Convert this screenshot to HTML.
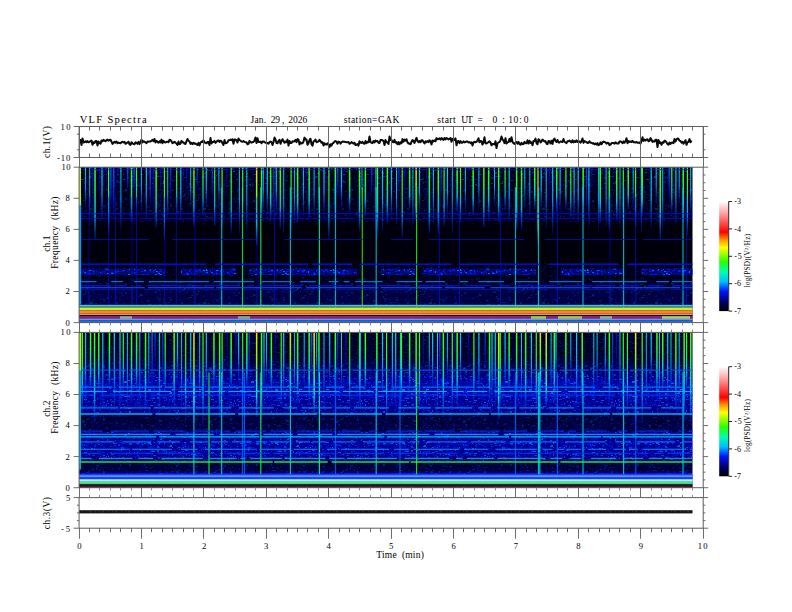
<!DOCTYPE html><html><head><meta charset="utf-8"><style>html,body{margin:0;padding:0;background:#fff;width:792px;height:612px;overflow:hidden}svg{display:block}text{font-family:"Liberation Serif",serif;fill:#000;white-space:pre}</style></head><body><svg width="792" height="612" viewBox="0 0 792 612"><defs><linearGradient id="cb" x1="0" y1="1" x2="0" y2="0"><stop offset="0.0" stop-color="#000000"/><stop offset="0.08" stop-color="#000064"/><stop offset="0.18" stop-color="#0014ff"/><stop offset="0.27" stop-color="#00beff"/><stop offset="0.36" stop-color="#00ffaa"/><stop offset="0.45" stop-color="#28ff00"/><stop offset="0.58" stop-color="#ffff00"/><stop offset="0.65" stop-color="#ff9600"/><stop offset="0.72" stop-color="#ff0000"/><stop offset="0.88" stop-color="#ff9696"/><stop offset="1.0" stop-color="#ffffff"/></linearGradient><linearGradient id="sR" x1="0" y1="0" x2="0" y2="1"><stop offset="0" stop-color="#ffe100" stop-opacity="1"/><stop offset="0.35" stop-color="#7aff00" stop-opacity="1"/><stop offset="0.75" stop-color="#00e9c6" stop-opacity="1"/><stop offset="1" stop-color="#0039ff" stop-opacity="0.4"/></linearGradient><linearGradient id="sG" x1="0" y1="0" x2="0" y2="1"><stop offset="0" stop-color="#49ff00" stop-opacity="1"/><stop offset="0.3" stop-color="#1aff38" stop-opacity="1"/><stop offset="0.65" stop-color="#00d3e2" stop-opacity="0.9"/><stop offset="1" stop-color="#0012ef" stop-opacity="0.4"/></linearGradient><linearGradient id="sC" x1="0" y1="0" x2="0" y2="1"><stop offset="0" stop-color="#00e2cf" stop-opacity="1"/><stop offset="0.5" stop-color="#00abff" stop-opacity="0.95"/><stop offset="1" stop-color="#000ed0" stop-opacity="0.3"/></linearGradient><linearGradient id="sB" x1="0" y1="0" x2="0" y2="1"><stop offset="0" stop-color="#005fff" stop-opacity="1"/><stop offset="0.6" stop-color="#0012ef" stop-opacity="0.9"/><stop offset="1" stop-color="#0007a2" stop-opacity="0.2"/></linearGradient><linearGradient id="sN" x1="0" y1="0" x2="0" y2="1"><stop offset="0" stop-color="#000cc1" stop-opacity="1"/><stop offset="1" stop-color="#000483" stop-opacity="0.2"/></linearGradient><pattern id="spA" width="113" height="47" patternUnits="userSpaceOnUse"><rect x="17" y="36" width="1" height="1" fill="#000066"/><rect x="97" y="28" width="2" height="2" fill="#002cff"/><rect x="12" y="31" width="1" height="2" fill="#000692"/><rect x="97" y="0" width="2" height="1" fill="#0012f3"/><rect x="29" y="37" width="1" height="1" fill="#000064"/><rect x="3" y="41" width="3" height="1" fill="#008fff"/><rect x="48" y="43" width="1" height="2" fill="#0012f5"/><rect x="67" y="14" width="2" height="2" fill="#000ab3"/><rect x="44" y="14" width="1" height="2" fill="#0099ff"/><rect x="2" y="26" width="3" height="1" fill="#00006b"/><rect x="92" y="18" width="1" height="1" fill="#0070ff"/><rect x="91" y="32" width="2" height="1" fill="#000279"/><rect x="75" y="31" width="3" height="2" fill="#000bbf"/><rect x="4" y="30" width="1" height="2" fill="#00058e"/><rect x="22" y="23" width="3" height="1" fill="#000065"/><rect x="84" y="32" width="1" height="1" fill="#0009aa"/><rect x="50" y="23" width="2" height="1" fill="#00079b"/><rect x="39" y="45" width="3" height="2" fill="#000ed5"/><rect x="21" y="32" width="1" height="1" fill="#0021ff"/><rect x="69" y="35" width="1" height="2" fill="#0008a8"/><rect x="108" y="36" width="2" height="2" fill="#007aff"/><rect x="84" y="35" width="3" height="1" fill="#000487"/><rect x="109" y="32" width="1" height="1" fill="#000591"/><rect x="7" y="30" width="2" height="1" fill="#0091ff"/><rect x="52" y="31" width="2" height="2" fill="#000380"/><rect x="68" y="34" width="3" height="1" fill="#000698"/><rect x="3" y="14" width="1" height="1" fill="#0059ff"/><rect x="102" y="35" width="2" height="1" fill="#004cff"/><rect x="86" y="4" width="1" height="1" fill="#000697"/><rect x="96" y="17" width="1" height="1" fill="#000066"/><rect x="79" y="11" width="2" height="1" fill="#000064"/><rect x="20" y="16" width="3" height="1" fill="#000fd8"/><rect x="82" y="45" width="2" height="2" fill="#0011eb"/><rect x="63" y="30" width="1" height="1" fill="#00027a"/><rect x="43" y="26" width="1" height="1" fill="#000066"/><rect x="93" y="32" width="1" height="2" fill="#003dff"/><rect x="2" y="14" width="1" height="2" fill="#000068"/><rect x="92" y="10" width="2" height="2" fill="#0009b1"/><rect x="28" y="40" width="3" height="2" fill="#00016e"/><rect x="83" y="1" width="2" height="1" fill="#000fd9"/><rect x="54" y="3" width="2" height="1" fill="#00a5ff"/><rect x="112" y="3" width="2" height="1" fill="#0057ff"/><rect x="39" y="19" width="1" height="2" fill="#000ab7"/><rect x="16" y="0" width="3" height="1" fill="#000bc0"/><rect x="27" y="36" width="2" height="1" fill="#0043ff"/><rect x="111" y="45" width="3" height="1" fill="#000486"/><rect x="44" y="6" width="1" height="2" fill="#000bc0"/><rect x="63" y="6" width="2" height="1" fill="#0008a5"/><rect x="2" y="20" width="3" height="2" fill="#0073ff"/><rect x="2" y="10" width="1" height="1" fill="#0039ff"/><rect x="72" y="8" width="2" height="2" fill="#00016d"/><rect x="86" y="6" width="2" height="1" fill="#007dff"/><rect x="107" y="43" width="3" height="2" fill="#001fff"/><rect x="68" y="15" width="1" height="1" fill="#000065"/><rect x="21" y="10" width="3" height="1" fill="#000274"/><rect x="42" y="38" width="3" height="1" fill="#000484"/><rect x="43" y="7" width="2" height="1" fill="#005dff"/><rect x="77" y="45" width="2" height="1" fill="#000bbc"/><rect x="98" y="6" width="2" height="1" fill="#00058c"/><rect x="48" y="9" width="1" height="1" fill="#000066"/><rect x="75" y="24" width="1" height="1" fill="#000ab8"/><rect x="34" y="23" width="2" height="1" fill="#000698"/><rect x="35" y="6" width="1" height="1" fill="#000064"/><rect x="85" y="0" width="1" height="2" fill="#000066"/><rect x="101" y="2" width="1" height="1" fill="#002aff"/><rect x="75" y="26" width="1" height="1" fill="#000697"/><rect x="87" y="15" width="1" height="1" fill="#000693"/><rect x="48" y="34" width="2" height="1" fill="#0011ef"/><rect x="40" y="6" width="1" height="1" fill="#000064"/><rect x="1" y="18" width="3" height="1" fill="#000696"/><rect x="40" y="25" width="1" height="1" fill="#007dff"/><rect x="76" y="29" width="1" height="1" fill="#00016e"/><rect x="79" y="34" width="2" height="1" fill="#000173"/><rect x="69" y="13" width="2" height="1" fill="#000171"/><rect x="10" y="17" width="1" height="2" fill="#000065"/><rect x="73" y="41" width="2" height="1" fill="#000489"/><rect x="39" y="2" width="2" height="1" fill="#00037b"/><rect x="108" y="37" width="2" height="1" fill="#00037e"/><rect x="69" y="39" width="3" height="1" fill="#000171"/><rect x="2" y="15" width="2" height="1" fill="#000274"/><rect x="111" y="4" width="1" height="1" fill="#000ed0"/><rect x="37" y="22" width="2" height="2" fill="#005aff"/><rect x="19" y="6" width="3" height="1" fill="#000065"/><rect x="85" y="11" width="1" height="1" fill="#00b2ff"/><rect x="105" y="20" width="2" height="1" fill="#0011ee"/><rect x="106" y="38" width="2" height="1" fill="#006fff"/><rect x="18" y="34" width="1" height="1" fill="#003fff"/><rect x="79" y="43" width="3" height="1" fill="#00006a"/><rect x="55" y="34" width="1" height="1" fill="#0012f0"/><rect x="85" y="15" width="2" height="1" fill="#0010e2"/><rect x="57" y="27" width="3" height="1" fill="#0009b0"/><rect x="108" y="34" width="2" height="1" fill="#00048a"/><rect x="43" y="10" width="2" height="2" fill="#000064"/><rect x="82" y="26" width="3" height="1" fill="#000064"/><rect x="45" y="37" width="1" height="1" fill="#000067"/><rect x="106" y="17" width="2" height="2" fill="#00006a"/><rect x="11" y="14" width="2" height="1" fill="#00006a"/><rect x="40" y="32" width="2" height="1" fill="#000170"/><rect x="63" y="43" width="2" height="1" fill="#0012ef"/><rect x="43" y="35" width="3" height="1" fill="#00a8ff"/><rect x="28" y="3" width="1" height="1" fill="#000069"/><rect x="98" y="13" width="2" height="1" fill="#0010e7"/><rect x="108" y="35" width="2" height="1" fill="#0011ea"/><rect x="94" y="29" width="3" height="1" fill="#0056ff"/><rect x="77" y="32" width="3" height="2" fill="#00006a"/><rect x="32" y="27" width="1" height="1" fill="#0008a2"/><rect x="50" y="45" width="2" height="2" fill="#0008a8"/><rect x="21" y="34" width="1" height="1" fill="#0037ff"/><rect x="80" y="6" width="2" height="1" fill="#009eff"/><rect x="17" y="39" width="1" height="2" fill="#0052ff"/><rect x="30" y="24" width="2" height="2" fill="#000069"/><rect x="41" y="28" width="1" height="2" fill="#009eff"/><rect x="15" y="27" width="3" height="2" fill="#007aff"/><rect x="84" y="18" width="2" height="1" fill="#000486"/><rect x="71" y="0" width="1" height="2" fill="#000bbc"/><rect x="3" y="40" width="3" height="1" fill="#0048ff"/><rect x="26" y="11" width="2" height="1" fill="#0009b0"/><rect x="34" y="19" width="3" height="1" fill="#0046ff"/><rect x="57" y="10" width="3" height="1" fill="#0007a1"/><rect x="109" y="7" width="1" height="2" fill="#00016c"/><rect x="103" y="6" width="1" height="1" fill="#000bb9"/><rect x="1" y="34" width="2" height="1" fill="#000064"/><rect x="47" y="36" width="2" height="2" fill="#0008a4"/><rect x="45" y="33" width="2" height="1" fill="#000066"/><rect x="91" y="28" width="2" height="1" fill="#0009af"/><rect x="43" y="46" width="3" height="2" fill="#000066"/><rect x="48" y="24" width="1" height="1" fill="#00b9ff"/><rect x="81" y="38" width="3" height="1" fill="#00b3ff"/><rect x="59" y="38" width="3" height="2" fill="#008eff"/><rect x="91" y="19" width="1" height="2" fill="#000dca"/><rect x="67" y="12" width="2" height="1" fill="#0010e1"/><rect x="74" y="27" width="2" height="1" fill="#0059ff"/><rect x="74" y="46" width="1" height="2" fill="#00b4ff"/><rect x="31" y="40" width="2" height="1" fill="#00058c"/><rect x="80" y="9" width="2" height="1" fill="#004fff"/><rect x="98" y="4" width="3" height="1" fill="#000381"/><rect x="33" y="45" width="2" height="1" fill="#000068"/><rect x="106" y="16" width="2" height="1" fill="#00079b"/><rect x="5" y="17" width="3" height="1" fill="#0013fd"/><rect x="54" y="4" width="2" height="1" fill="#000fd8"/><rect x="2" y="10" width="3" height="1" fill="#0010e6"/><rect x="51" y="40" width="2" height="1" fill="#00016d"/><rect x="26" y="15" width="2" height="1" fill="#000064"/><rect x="89" y="33" width="2" height="2" fill="#0008a7"/><rect x="94" y="3" width="1" height="1" fill="#000ed7"/><rect x="91" y="35" width="2" height="1" fill="#000cc7"/><rect x="29" y="25" width="3" height="2" fill="#00006a"/><rect x="101" y="16" width="3" height="1" fill="#0012f1"/><rect x="33" y="39" width="1" height="1" fill="#0053ff"/><rect x="111" y="39" width="2" height="1" fill="#0087ff"/><rect x="97" y="15" width="2" height="1" fill="#000064"/><rect x="93" y="10" width="3" height="2" fill="#000bbd"/><rect x="93" y="9" width="3" height="1" fill="#000699"/><rect x="20" y="8" width="1" height="2" fill="#000483"/><rect x="96" y="25" width="1" height="1" fill="#0012f2"/><rect x="91" y="43" width="2" height="1" fill="#000066"/><rect x="50" y="20" width="2" height="1" fill="#009bff"/><rect x="5" y="3" width="3" height="1" fill="#006cff"/><rect x="27" y="43" width="1" height="2" fill="#0011ec"/><rect x="104" y="46" width="3" height="2" fill="#00037f"/><rect x="107" y="17" width="1" height="1" fill="#000065"/><rect x="51" y="14" width="2" height="2" fill="#000486"/><rect x="21" y="14" width="1" height="1" fill="#00069a"/><rect x="74" y="24" width="1" height="2" fill="#0012f0"/><rect x="42" y="31" width="3" height="1" fill="#007aff"/><rect x="10" y="2" width="1" height="1" fill="#0057ff"/><rect x="40" y="24" width="3" height="1" fill="#0081ff"/><rect x="51" y="10" width="1" height="1" fill="#000064"/><rect x="18" y="42" width="3" height="1" fill="#000ab7"/><rect x="32" y="8" width="1" height="2" fill="#000ed6"/><rect x="38" y="0" width="1" height="1" fill="#0009ab"/><rect x="16" y="2" width="2" height="1" fill="#000692"/><rect x="24" y="1" width="2" height="1" fill="#0013fd"/><rect x="87" y="12" width="2" height="2" fill="#00037d"/><rect x="34" y="16" width="1" height="1" fill="#000064"/><rect x="100" y="37" width="1" height="1" fill="#000591"/><rect x="89" y="35" width="3" height="1" fill="#0077ff"/><rect x="70" y="26" width="3" height="1" fill="#0011ef"/><rect x="68" y="27" width="1" height="1" fill="#0013fd"/><rect x="92" y="4" width="2" height="1" fill="#00abff"/><rect x="19" y="3" width="1" height="2" fill="#0053ff"/><rect x="6" y="40" width="1" height="2" fill="#0008a4"/><rect x="12" y="20" width="1" height="1" fill="#0009ad"/><rect x="56" y="42" width="1" height="2" fill="#001dff"/><rect x="112" y="28" width="1" height="1" fill="#000065"/><rect x="102" y="20" width="1" height="1" fill="#000064"/><rect x="49" y="3" width="2" height="1" fill="#0013f9"/><rect x="33" y="24" width="1" height="1" fill="#000065"/><rect x="107" y="15" width="3" height="1" fill="#00037d"/><rect x="43" y="32" width="2" height="2" fill="#000066"/><rect x="83" y="28" width="3" height="1" fill="#0071ff"/><rect x="106" y="18" width="1" height="1" fill="#000485"/><rect x="66" y="20" width="1" height="2" fill="#000380"/><rect x="73" y="4" width="1" height="1" fill="#003bff"/><rect x="83" y="34" width="2" height="2" fill="#000278"/><rect x="45" y="17" width="2" height="1" fill="#0009ab"/><rect x="19" y="20" width="2" height="1" fill="#000bba"/><rect x="57" y="17" width="2" height="2" fill="#007cff"/><rect x="94" y="24" width="1" height="1" fill="#000067"/><rect x="67" y="31" width="3" height="1" fill="#0029ff"/><rect x="89" y="36" width="2" height="1" fill="#00b6ff"/><rect x="102" y="41" width="2" height="2" fill="#000279"/><rect x="76" y="21" width="3" height="1" fill="#000064"/><rect x="32" y="43" width="1" height="1" fill="#0078ff"/><rect x="23" y="26" width="3" height="1" fill="#0039ff"/><rect x="69" y="43" width="2" height="1" fill="#00016c"/><rect x="8" y="40" width="3" height="1" fill="#0055ff"/><rect x="101" y="13" width="1" height="2" fill="#000064"/><rect x="47" y="31" width="2" height="1" fill="#006dff"/><rect x="76" y="31" width="1" height="2" fill="#000697"/><rect x="46" y="34" width="1" height="2" fill="#0012f5"/><rect x="104" y="16" width="2" height="1" fill="#000064"/><rect x="68" y="24" width="3" height="2" fill="#000065"/><rect x="78" y="32" width="3" height="2" fill="#000064"/><rect x="108" y="29" width="1" height="1" fill="#009fff"/><rect x="89" y="44" width="1" height="1" fill="#0040ff"/><rect x="65" y="20" width="3" height="1" fill="#0009ab"/><rect x="69" y="33" width="2" height="1" fill="#000697"/><rect x="16" y="32" width="2" height="1" fill="#000ab3"/><rect x="20" y="16" width="1" height="2" fill="#0013fa"/><rect x="72" y="2" width="2" height="2" fill="#00058b"/><rect x="84" y="42" width="1" height="1" fill="#0085ff"/><rect x="108" y="0" width="2" height="1" fill="#00079a"/><rect x="101" y="23" width="2" height="1" fill="#000488"/><rect x="102" y="7" width="2" height="1" fill="#000068"/><rect x="18" y="1" width="1" height="1" fill="#000484"/><rect x="16" y="37" width="2" height="2" fill="#000172"/><rect x="65" y="18" width="2" height="1" fill="#000692"/><rect x="99" y="31" width="1" height="2" fill="#0097ff"/><rect x="51" y="45" width="2" height="1" fill="#000064"/><rect x="26" y="9" width="1" height="1" fill="#000065"/><rect x="19" y="30" width="1" height="2" fill="#000ed6"/><rect x="23" y="0" width="1" height="2" fill="#000cc7"/><rect x="6" y="35" width="1" height="2" fill="#000380"/><rect x="83" y="6" width="3" height="2" fill="#0048ff"/><rect x="94" y="7" width="2" height="1" fill="#00006a"/><rect x="103" y="45" width="1" height="1" fill="#0010e0"/><rect x="11" y="24" width="1" height="2" fill="#000277"/><rect x="65" y="31" width="2" height="1" fill="#000cc5"/><rect x="61" y="6" width="1" height="2" fill="#000cc8"/><rect x="89" y="12" width="1" height="1" fill="#00058e"/><rect x="68" y="18" width="2" height="1" fill="#002cff"/><rect x="79" y="21" width="2" height="1" fill="#000064"/><rect x="93" y="42" width="2" height="1" fill="#000064"/><rect x="80" y="28" width="2" height="1" fill="#00016f"/><rect x="35" y="17" width="1" height="2" fill="#000068"/><rect x="32" y="12" width="2" height="1" fill="#0009ad"/><rect x="77" y="32" width="1" height="2" fill="#000274"/><rect x="61" y="44" width="2" height="1" fill="#0007a1"/><rect x="63" y="23" width="3" height="2" fill="#000170"/><rect x="22" y="38" width="1" height="2" fill="#0009ae"/><rect x="7" y="32" width="2" height="1" fill="#000ed4"/><rect x="103" y="13" width="2" height="2" fill="#00079e"/><rect x="15" y="8" width="1" height="1" fill="#00016f"/><rect x="81" y="34" width="1" height="1" fill="#0010e4"/><rect x="28" y="36" width="1" height="1" fill="#000590"/><rect x="0" y="1" width="2" height="1" fill="#000065"/><rect x="28" y="17" width="2" height="1" fill="#000cc4"/><rect x="66" y="24" width="1" height="1" fill="#00037d"/><rect x="17" y="7" width="2" height="1" fill="#0010e2"/><rect x="5" y="22" width="1" height="1" fill="#0012f5"/><rect x="13" y="19" width="2" height="1" fill="#000274"/><rect x="6" y="23" width="1" height="1" fill="#000067"/><rect x="51" y="23" width="1" height="1" fill="#0010e1"/><rect x="35" y="0" width="3" height="1" fill="#009eff"/><rect x="14" y="22" width="1" height="1" fill="#00058c"/><rect x="86" y="36" width="3" height="2" fill="#000ab7"/><rect x="68" y="25" width="2" height="1" fill="#000dcf"/><rect x="70" y="8" width="1" height="1" fill="#00006a"/><rect x="27" y="27" width="2" height="1" fill="#000171"/><rect x="34" y="33" width="2" height="2" fill="#000067"/><rect x="90" y="6" width="2" height="1" fill="#000ed7"/><rect x="69" y="23" width="3" height="1" fill="#000dca"/><rect x="57" y="43" width="1" height="1" fill="#000064"/><rect x="74" y="9" width="1" height="2" fill="#004cff"/><rect x="108" y="21" width="2" height="1" fill="#000069"/><rect x="108" y="24" width="2" height="2" fill="#000066"/><rect x="76" y="9" width="2" height="1" fill="#000fdc"/><rect x="102" y="40" width="3" height="1" fill="#0009af"/><rect x="1" y="41" width="1" height="2" fill="#0014ff"/><rect x="112" y="6" width="2" height="1" fill="#0026ff"/><rect x="76" y="43" width="2" height="1" fill="#008bff"/><rect x="52" y="25" width="3" height="2" fill="#000064"/><rect x="60" y="2" width="1" height="1" fill="#0046ff"/><rect x="75" y="8" width="3" height="1" fill="#000ab3"/><rect x="100" y="36" width="2" height="2" fill="#003eff"/><rect x="31" y="39" width="1" height="1" fill="#000ab7"/><rect x="45" y="10" width="1" height="1" fill="#007fff"/><rect x="40" y="27" width="2" height="1" fill="#000fd9"/><rect x="98" y="3" width="3" height="2" fill="#00058e"/><rect x="45" y="18" width="2" height="2" fill="#0031ff"/><rect x="30" y="40" width="3" height="1" fill="#000064"/><rect x="86" y="7" width="3" height="1" fill="#0009b0"/><rect x="80" y="31" width="2" height="1" fill="#00aaff"/><rect x="2" y="30" width="1" height="2" fill="#000dcf"/><rect x="22" y="25" width="1" height="1" fill="#000171"/><rect x="42" y="42" width="1" height="2" fill="#0013fd"/><rect x="47" y="31" width="1" height="2" fill="#000694"/><rect x="69" y="7" width="3" height="2" fill="#0086ff"/><rect x="107" y="8" width="1" height="1" fill="#000486"/><rect x="13" y="1" width="1" height="1" fill="#000699"/><rect x="48" y="42" width="3" height="1" fill="#0080ff"/><rect x="19" y="33" width="1" height="1" fill="#000064"/><rect x="50" y="40" width="1" height="2" fill="#00b7ff"/><rect x="69" y="15" width="2" height="1" fill="#000fda"/><rect x="43" y="42" width="1" height="1" fill="#0023ff"/><rect x="71" y="10" width="1" height="2" fill="#000bbe"/><rect x="65" y="13" width="2" height="1" fill="#002fff"/><rect x="66" y="46" width="1" height="1" fill="#000171"/><rect x="99" y="29" width="1" height="1" fill="#000488"/><rect x="71" y="6" width="2" height="1" fill="#00acff"/><rect x="30" y="0" width="1" height="1" fill="#00079b"/><rect x="92" y="26" width="1" height="1" fill="#00b3ff"/><rect x="90" y="20" width="3" height="2" fill="#00b7ff"/><rect x="102" y="26" width="3" height="1" fill="#0011e9"/><rect x="89" y="24" width="1" height="2" fill="#003dff"/><rect x="46" y="9" width="2" height="1" fill="#004eff"/><rect x="99" y="46" width="3" height="1" fill="#0013f7"/><rect x="43" y="9" width="2" height="1" fill="#000172"/><rect x="49" y="17" width="3" height="2" fill="#000064"/><rect x="16" y="16" width="1" height="1" fill="#000064"/><rect x="74" y="34" width="3" height="1" fill="#0009b0"/><rect x="91" y="15" width="3" height="1" fill="#000ab4"/><rect x="50" y="45" width="1" height="1" fill="#000dcc"/><rect x="9" y="9" width="1" height="1" fill="#0013fe"/><rect x="48" y="26" width="1" height="1" fill="#000fdf"/><rect x="69" y="4" width="1" height="2" fill="#000067"/><rect x="25" y="42" width="2" height="1" fill="#0015ff"/><rect x="22" y="14" width="2" height="1" fill="#000380"/><rect x="68" y="18" width="1" height="1" fill="#00016d"/><rect x="59" y="1" width="2" height="1" fill="#000dc9"/><rect x="96" y="28" width="2" height="1" fill="#000064"/><rect x="100" y="20" width="1" height="1" fill="#009cff"/><rect x="80" y="6" width="1" height="2" fill="#000dcf"/><rect x="31" y="13" width="3" height="2" fill="#000066"/><rect x="90" y="13" width="2" height="1" fill="#003bff"/><rect x="74" y="16" width="1" height="1" fill="#0038ff"/><rect x="97" y="36" width="2" height="2" fill="#0009b1"/><rect x="29" y="17" width="1" height="1" fill="#000fde"/><rect x="70" y="32" width="1" height="2" fill="#00a5ff"/><rect x="98" y="42" width="2" height="2" fill="#000274"/><rect x="12" y="42" width="1" height="1" fill="#000ab6"/><rect x="58" y="2" width="2" height="1" fill="#000489"/><rect x="93" y="34" width="2" height="1" fill="#000065"/><rect x="86" y="2" width="2" height="2" fill="#00006b"/><rect x="22" y="38" width="3" height="1" fill="#0050ff"/><rect x="49" y="33" width="2" height="1" fill="#00016f"/><rect x="84" y="37" width="1" height="1" fill="#0077ff"/><rect x="58" y="2" width="3" height="1" fill="#006dff"/><rect x="109" y="18" width="2" height="1" fill="#000bbd"/><rect x="8" y="36" width="2" height="1" fill="#00b8ff"/><rect x="101" y="32" width="3" height="1" fill="#00048a"/><rect x="45" y="30" width="1" height="2" fill="#000064"/><rect x="38" y="37" width="2" height="1" fill="#000cc2"/><rect x="71" y="17" width="1" height="1" fill="#00058e"/><rect x="66" y="1" width="3" height="1" fill="#000064"/><rect x="67" y="0" width="1" height="1" fill="#00037e"/><rect x="47" y="35" width="1" height="1" fill="#000bbd"/><rect x="62" y="40" width="1" height="2" fill="#00037e"/><rect x="103" y="34" width="1" height="1" fill="#007aff"/><rect x="46" y="13" width="1" height="1" fill="#000bc0"/><rect x="51" y="20" width="3" height="2" fill="#003fff"/><rect x="43" y="16" width="3" height="1" fill="#000064"/><rect x="8" y="40" width="1" height="1" fill="#0018ff"/><rect x="50" y="35" width="2" height="1" fill="#000064"/><rect x="21" y="17" width="2" height="1" fill="#000067"/><rect x="70" y="46" width="2" height="1" fill="#00016d"/><rect x="35" y="46" width="2" height="1" fill="#0013fa"/><rect x="38" y="13" width="3" height="1" fill="#000ab3"/><rect x="43" y="18" width="3" height="1" fill="#000064"/><rect x="104" y="23" width="1" height="1" fill="#00b5ff"/><rect x="53" y="10" width="3" height="1" fill="#0011ed"/><rect x="89" y="42" width="3" height="2" fill="#00006b"/><rect x="25" y="14" width="1" height="1" fill="#00a9ff"/><rect x="64" y="7" width="2" height="2" fill="#00016c"/><rect x="7" y="23" width="2" height="1" fill="#0086ff"/><rect x="78" y="46" width="2" height="1" fill="#0085ff"/><rect x="81" y="0" width="1" height="2" fill="#000064"/><rect x="32" y="35" width="1" height="1" fill="#00016f"/><rect x="10" y="33" width="1" height="1" fill="#0094ff"/><rect x="25" y="13" width="2" height="1" fill="#000171"/><rect x="64" y="23" width="2" height="2" fill="#0093ff"/><rect x="9" y="12" width="3" height="1" fill="#00006b"/><rect x="79" y="19" width="3" height="2" fill="#000cc8"/><rect x="46" y="1" width="2" height="1" fill="#0089ff"/><rect x="84" y="40" width="3" height="2" fill="#0043ff"/><rect x="74" y="21" width="2" height="1" fill="#000ed4"/><rect x="24" y="44" width="3" height="2" fill="#0099ff"/><rect x="106" y="38" width="3" height="2" fill="#000cc3"/><rect x="94" y="36" width="2" height="2" fill="#000069"/><rect x="34" y="43" width="3" height="1" fill="#000ab7"/><rect x="103" y="25" width="3" height="1" fill="#000172"/><rect x="1" y="38" width="1" height="2" fill="#000698"/><rect x="45" y="14" width="3" height="2" fill="#00016d"/><rect x="60" y="21" width="1" height="2" fill="#005aff"/><rect x="6" y="41" width="1" height="1" fill="#0060ff"/><rect x="1" y="16" width="3" height="1" fill="#000279"/><rect x="1" y="20" width="2" height="1" fill="#000bbf"/><rect x="100" y="3" width="1" height="1" fill="#00037d"/><rect x="85" y="41" width="1" height="1" fill="#0027ff"/><rect x="37" y="26" width="3" height="1" fill="#00016f"/><rect x="82" y="44" width="1" height="1" fill="#000279"/><rect x="48" y="26" width="3" height="2" fill="#0039ff"/><rect x="109" y="4" width="1" height="2" fill="#008eff"/><rect x="77" y="2" width="3" height="1" fill="#000dce"/><rect x="31" y="45" width="2" height="2" fill="#00016d"/><rect x="19" y="46" width="2" height="1" fill="#000064"/><rect x="90" y="43" width="2" height="2" fill="#0008a3"/><rect x="86" y="9" width="1" height="1" fill="#000693"/><rect x="43" y="32" width="2" height="1" fill="#008fff"/><rect x="14" y="37" width="2" height="1" fill="#000591"/><rect x="107" y="19" width="1" height="2" fill="#000066"/><rect x="28" y="38" width="2" height="2" fill="#000485"/><rect x="29" y="3" width="1" height="1" fill="#000067"/><rect x="6" y="4" width="1" height="1" fill="#000fdf"/><rect x="54" y="46" width="1" height="1" fill="#000064"/><rect x="4" y="34" width="2" height="1" fill="#0029ff"/><rect x="78" y="0" width="3" height="1" fill="#00079b"/><rect x="34" y="18" width="3" height="1" fill="#006cff"/><rect x="23" y="13" width="2" height="1" fill="#000170"/><rect x="71" y="44" width="2" height="1" fill="#00037d"/><rect x="52" y="7" width="1" height="1" fill="#0008a5"/><rect x="11" y="11" width="1" height="1" fill="#00006a"/><rect x="103" y="6" width="1" height="1" fill="#0064ff"/><rect x="18" y="4" width="2" height="1" fill="#00016f"/><rect x="95" y="18" width="2" height="1" fill="#000bc0"/><rect x="56" y="12" width="1" height="1" fill="#000066"/><rect x="25" y="3" width="1" height="1" fill="#0099ff"/><rect x="103" y="14" width="2" height="1" fill="#0009ac"/><rect x="111" y="15" width="1" height="1" fill="#001eff"/><rect x="41" y="22" width="2" height="2" fill="#001dff"/><rect x="84" y="39" width="2" height="2" fill="#000065"/><rect x="31" y="31" width="2" height="1" fill="#000cc5"/><rect x="14" y="15" width="1" height="2" fill="#0069ff"/><rect x="68" y="19" width="2" height="1" fill="#00058d"/><rect x="46" y="22" width="2" height="2" fill="#009dff"/><rect x="65" y="1" width="2" height="1" fill="#000279"/><rect x="38" y="36" width="1" height="1" fill="#000069"/><rect x="82" y="40" width="1" height="1" fill="#000069"/><rect x="104" y="39" width="2" height="1" fill="#000382"/><rect x="40" y="10" width="2" height="2" fill="#00027a"/><rect x="54" y="9" width="3" height="1" fill="#006aff"/><rect x="13" y="9" width="2" height="1" fill="#0010e4"/><rect x="61" y="34" width="1" height="1" fill="#0012f5"/><rect x="24" y="41" width="2" height="1" fill="#0008a6"/><rect x="111" y="22" width="3" height="1" fill="#00037f"/><rect x="15" y="11" width="2" height="1" fill="#00acff"/><rect x="78" y="45" width="1" height="1" fill="#000171"/><rect x="108" y="19" width="2" height="2" fill="#000171"/><rect x="98" y="3" width="1" height="1" fill="#0011e9"/><rect x="0" y="12" width="1" height="1" fill="#00016e"/><rect x="64" y="17" width="1" height="1" fill="#00016f"/><rect x="39" y="36" width="3" height="2" fill="#005aff"/><rect x="56" y="37" width="3" height="2" fill="#00006b"/><rect x="110" y="22" width="1" height="2" fill="#0035ff"/><rect x="35" y="13" width="1" height="1" fill="#000067"/><rect x="26" y="1" width="1" height="2" fill="#000483"/><rect x="6" y="23" width="1" height="1" fill="#0010e1"/><rect x="111" y="13" width="1" height="2" fill="#000ed3"/><rect x="25" y="38" width="2" height="1" fill="#000bbb"/><rect x="107" y="42" width="1" height="1" fill="#00037b"/><rect x="61" y="35" width="1" height="1" fill="#0054ff"/><rect x="63" y="35" width="2" height="1" fill="#0007a0"/><rect x="65" y="20" width="3" height="1" fill="#000cc5"/><rect x="100" y="36" width="1" height="2" fill="#00037f"/><rect x="108" y="4" width="2" height="1" fill="#00b7ff"/><rect x="82" y="20" width="1" height="1" fill="#0079ff"/><rect x="28" y="20" width="2" height="1" fill="#005eff"/><rect x="62" y="26" width="1" height="1" fill="#000069"/><rect x="37" y="3" width="1" height="2" fill="#000592"/><rect x="78" y="13" width="2" height="1" fill="#001fff"/><rect x="92" y="36" width="2" height="1" fill="#000cc6"/><rect x="86" y="11" width="2" height="1" fill="#000381"/><rect x="50" y="22" width="3" height="1" fill="#00048a"/><rect x="57" y="9" width="2" height="1" fill="#000064"/><rect x="81" y="15" width="1" height="1" fill="#000064"/><rect x="64" y="30" width="3" height="2" fill="#0011ea"/><rect x="66" y="10" width="3" height="2" fill="#00048a"/><rect x="49" y="35" width="3" height="2" fill="#000069"/><rect x="75" y="23" width="1" height="1" fill="#0040ff"/><rect x="56" y="15" width="3" height="1" fill="#0052ff"/><rect x="56" y="22" width="1" height="1" fill="#000067"/><rect x="106" y="2" width="2" height="1" fill="#00a6ff"/><rect x="22" y="36" width="2" height="2" fill="#000064"/><rect x="29" y="39" width="1" height="2" fill="#000ed7"/><rect x="65" y="13" width="2" height="2" fill="#000066"/><rect x="33" y="8" width="1" height="1" fill="#000067"/><rect x="103" y="39" width="3" height="1" fill="#000170"/><rect x="90" y="27" width="2" height="2" fill="#0008a7"/><rect x="39" y="10" width="3" height="1" fill="#000bc0"/><rect x="100" y="13" width="2" height="1" fill="#0010e2"/><rect x="104" y="21" width="1" height="2" fill="#000487"/><rect x="83" y="32" width="1" height="2" fill="#000696"/><rect x="68" y="28" width="2" height="1" fill="#000064"/><rect x="92" y="6" width="1" height="2" fill="#000067"/><rect x="50" y="11" width="2" height="2" fill="#0009aa"/><rect x="75" y="2" width="3" height="1" fill="#0095ff"/><rect x="75" y="28" width="2" height="2" fill="#000277"/><rect x="44" y="11" width="3" height="1" fill="#00006a"/><rect x="99" y="1" width="3" height="1" fill="#0031ff"/><rect x="8" y="35" width="1" height="2" fill="#0051ff"/><rect x="56" y="21" width="1" height="2" fill="#000064"/><rect x="59" y="17" width="2" height="2" fill="#00037d"/><rect x="12" y="10" width="2" height="2" fill="#0068ff"/><rect x="78" y="30" width="3" height="1" fill="#00037b"/><rect x="44" y="8" width="3" height="1" fill="#00016f"/><rect x="103" y="13" width="2" height="1" fill="#000066"/><rect x="13" y="27" width="1" height="2" fill="#000068"/><rect x="47" y="35" width="2" height="1" fill="#00058a"/><rect x="49" y="31" width="2" height="1" fill="#0013fc"/><rect x="38" y="41" width="3" height="2" fill="#00027a"/><rect x="96" y="18" width="1" height="1" fill="#0007a1"/><rect x="57" y="9" width="2" height="1" fill="#0009af"/><rect x="68" y="20" width="2" height="2" fill="#0098ff"/><rect x="71" y="40" width="2" height="1" fill="#000ab7"/><rect x="102" y="29" width="2" height="2" fill="#0010e6"/><rect x="105" y="34" width="1" height="1" fill="#000170"/><rect x="25" y="38" width="1" height="1" fill="#0027ff"/><rect x="79" y="3" width="2" height="2" fill="#0092ff"/><rect x="44" y="23" width="2" height="2" fill="#00016d"/><rect x="109" y="18" width="1" height="1" fill="#00048a"/><rect x="89" y="24" width="1" height="1" fill="#000488"/><rect x="44" y="38" width="3" height="1" fill="#000170"/><rect x="105" y="39" width="2" height="2" fill="#00016c"/><rect x="111" y="18" width="1" height="2" fill="#000064"/><rect x="44" y="5" width="2" height="1" fill="#000066"/><rect x="101" y="46" width="1" height="1" fill="#000068"/><rect x="55" y="20" width="3" height="1" fill="#0091ff"/><rect x="26" y="12" width="1" height="1" fill="#00a6ff"/><rect x="20" y="9" width="1" height="2" fill="#000bbe"/><rect x="16" y="27" width="1" height="1" fill="#000cc6"/><rect x="93" y="44" width="2" height="1" fill="#000064"/><rect x="99" y="11" width="1" height="1" fill="#0010e7"/><rect x="75" y="31" width="1" height="1" fill="#000067"/><rect x="60" y="36" width="1" height="1" fill="#000483"/><rect x="17" y="17" width="2" height="1" fill="#000487"/><rect x="3" y="33" width="2" height="1" fill="#0012f2"/><rect x="26" y="44" width="1" height="1" fill="#000064"/><rect x="104" y="33" width="1" height="1" fill="#0031ff"/><rect x="104" y="7" width="2" height="1" fill="#000066"/><rect x="91" y="36" width="3" height="2" fill="#000fdc"/><rect x="18" y="27" width="2" height="1" fill="#008aff"/><rect x="49" y="26" width="2" height="1" fill="#00a3ff"/><rect x="26" y="12" width="1" height="1" fill="#000170"/><rect x="2" y="15" width="2" height="2" fill="#0029ff"/><rect x="56" y="36" width="1" height="1" fill="#00006a"/><rect x="105" y="33" width="1" height="1" fill="#000592"/><rect x="100" y="17" width="2" height="1" fill="#0058ff"/><rect x="88" y="42" width="2" height="2" fill="#0026ff"/><rect x="74" y="3" width="3" height="2" fill="#000067"/><rect x="66" y="23" width="3" height="1" fill="#000381"/><rect x="107" y="15" width="1" height="2" fill="#0098ff"/><rect x="103" y="1" width="2" height="1" fill="#000068"/><rect x="3" y="30" width="1" height="2" fill="#000064"/><rect x="101" y="37" width="2" height="1" fill="#00079b"/><rect x="77" y="32" width="1" height="1" fill="#0009af"/><rect x="86" y="45" width="2" height="2" fill="#000170"/><rect x="66" y="24" width="2" height="1" fill="#000693"/><rect x="8" y="13" width="3" height="1" fill="#000066"/><rect x="45" y="6" width="1" height="1" fill="#0010e6"/><rect x="75" y="5" width="1" height="2" fill="#007bff"/><rect x="30" y="5" width="2" height="2" fill="#000cc7"/><rect x="73" y="27" width="3" height="1" fill="#000489"/><rect x="5" y="42" width="3" height="1" fill="#000275"/><rect x="79" y="30" width="2" height="1" fill="#000274"/><rect x="111" y="20" width="2" height="2" fill="#0009ae"/><rect x="34" y="32" width="1" height="2" fill="#000698"/><rect x="74" y="37" width="1" height="1" fill="#0008a6"/><rect x="84" y="25" width="2" height="2" fill="#00079d"/><rect x="80" y="14" width="2" height="1" fill="#000064"/><rect x="18" y="31" width="1" height="1" fill="#000173"/><rect x="107" y="19" width="3" height="1" fill="#000067"/><rect x="64" y="8" width="2" height="1" fill="#000695"/><rect x="93" y="36" width="2" height="1" fill="#000067"/><rect x="1" y="34" width="1" height="1" fill="#000dcb"/><rect x="8" y="29" width="2" height="1" fill="#000ed4"/><rect x="92" y="32" width="1" height="2" fill="#000066"/><rect x="87" y="20" width="3" height="2" fill="#000065"/><rect x="63" y="33" width="2" height="1" fill="#00006b"/><rect x="7" y="39" width="1" height="1" fill="#000066"/><rect x="67" y="19" width="1" height="1" fill="#0009ad"/><rect x="29" y="13" width="1" height="1" fill="#0072ff"/><rect x="107" y="36" width="2" height="1" fill="#000dc8"/><rect x="36" y="36" width="1" height="1" fill="#0056ff"/><rect x="33" y="3" width="1" height="2" fill="#000cc7"/><rect x="36" y="30" width="2" height="2" fill="#004bff"/><rect x="8" y="11" width="1" height="1" fill="#0089ff"/><rect x="105" y="27" width="2" height="1" fill="#0090ff"/><rect x="65" y="9" width="1" height="1" fill="#00016f"/><rect x="7" y="23" width="1" height="2" fill="#00037c"/><rect x="27" y="14" width="2" height="1" fill="#0010e6"/><rect x="90" y="33" width="2" height="1" fill="#00079d"/><rect x="93" y="39" width="1" height="2" fill="#00027a"/><rect x="99" y="44" width="2" height="1" fill="#0031ff"/><rect x="88" y="40" width="2" height="1" fill="#002bff"/><rect x="48" y="29" width="3" height="1" fill="#000067"/><rect x="109" y="31" width="1" height="1" fill="#0011ea"/><rect x="55" y="12" width="3" height="1" fill="#000065"/><rect x="31" y="31" width="3" height="1" fill="#00006a"/><rect x="45" y="45" width="3" height="2" fill="#00058b"/><rect x="53" y="1" width="2" height="1" fill="#000591"/><rect x="7" y="18" width="2" height="2" fill="#000ed1"/><rect x="25" y="38" width="2" height="2" fill="#000cc2"/><rect x="33" y="32" width="1" height="1" fill="#0028ff"/><rect x="19" y="35" width="3" height="1" fill="#0092ff"/><rect x="86" y="1" width="3" height="1" fill="#0021ff"/><rect x="58" y="16" width="1" height="1" fill="#000067"/><rect x="10" y="26" width="2" height="1" fill="#00079e"/><rect x="92" y="8" width="3" height="2" fill="#0007a1"/><rect x="107" y="14" width="3" height="1" fill="#000486"/><rect x="7" y="26" width="3" height="1" fill="#000171"/><rect x="5" y="29" width="1" height="1" fill="#000cc7"/><rect x="44" y="2" width="1" height="1" fill="#0043ff"/><rect x="74" y="19" width="2" height="1" fill="#000065"/><rect x="60" y="39" width="2" height="1" fill="#0056ff"/><rect x="21" y="40" width="2" height="1" fill="#00037d"/><rect x="29" y="15" width="1" height="1" fill="#009cff"/><rect x="39" y="34" width="2" height="1" fill="#000bbf"/><rect x="84" y="30" width="2" height="1" fill="#000068"/><rect x="30" y="10" width="1" height="1" fill="#00058a"/><rect x="17" y="10" width="3" height="1" fill="#00037b"/><rect x="90" y="13" width="1" height="1" fill="#000695"/><rect x="51" y="7" width="2" height="1" fill="#0012f3"/><rect x="37" y="32" width="2" height="1" fill="#000065"/><rect x="9" y="14" width="1" height="2" fill="#0012f0"/><rect x="71" y="29" width="1" height="1" fill="#000698"/><rect x="69" y="7" width="1" height="1" fill="#000171"/><rect x="27" y="33" width="3" height="1" fill="#0079ff"/><rect x="33" y="22" width="2" height="1" fill="#000064"/><rect x="111" y="0" width="2" height="1" fill="#00016d"/><rect x="40" y="28" width="2" height="1" fill="#000171"/><rect x="111" y="7" width="1" height="1" fill="#00016c"/><rect x="17" y="39" width="3" height="1" fill="#000694"/><rect x="93" y="1" width="3" height="1" fill="#0045ff"/><rect x="22" y="34" width="1" height="1" fill="#000067"/><rect x="2" y="8" width="2" height="1" fill="#0008a9"/><rect x="33" y="12" width="2" height="1" fill="#0009b1"/><rect x="45" y="16" width="3" height="2" fill="#0061ff"/><rect x="67" y="33" width="3" height="2" fill="#000275"/><rect x="23" y="30" width="3" height="2" fill="#000067"/><rect x="79" y="13" width="3" height="1" fill="#0008a9"/><rect x="108" y="20" width="1" height="1" fill="#00037b"/><rect x="5" y="26" width="3" height="2" fill="#0046ff"/><rect x="112" y="4" width="1" height="1" fill="#000ab4"/><rect x="69" y="24" width="3" height="1" fill="#000bc0"/><rect x="27" y="12" width="2" height="2" fill="#009dff"/><rect x="66" y="1" width="3" height="1" fill="#00006b"/><rect x="66" y="34" width="1" height="1" fill="#000065"/><rect x="61" y="10" width="1" height="2" fill="#006bff"/><rect x="1" y="9" width="1" height="1" fill="#0011ed"/><rect x="55" y="30" width="1" height="1" fill="#000ab8"/><rect x="103" y="42" width="1" height="2" fill="#0061ff"/><rect x="8" y="8" width="2" height="2" fill="#0008a2"/><rect x="84" y="23" width="2" height="1" fill="#004fff"/><rect x="56" y="16" width="2" height="1" fill="#000488"/><rect x="102" y="36" width="1" height="2" fill="#0075ff"/><rect x="110" y="6" width="1" height="1" fill="#000065"/><rect x="53" y="37" width="2" height="1" fill="#00adff"/><rect x="58" y="7" width="1" height="2" fill="#000381"/><rect x="11" y="21" width="1" height="1" fill="#004dff"/><rect x="67" y="39" width="2" height="1" fill="#000bba"/><rect x="55" y="43" width="2" height="2" fill="#0012f7"/><rect x="62" y="24" width="1" height="1" fill="#000066"/><rect x="33" y="1" width="3" height="1" fill="#00037c"/><rect x="65" y="42" width="1" height="1" fill="#000277"/><rect x="10" y="10" width="2" height="1" fill="#00058a"/><rect x="104" y="28" width="2" height="1" fill="#000ab7"/><rect x="72" y="5" width="1" height="1" fill="#000064"/><rect x="4" y="17" width="2" height="1" fill="#0009af"/><rect x="79" y="45" width="2" height="1" fill="#000698"/><rect x="43" y="15" width="1" height="1" fill="#0013f9"/><rect x="91" y="3" width="1" height="2" fill="#0008a7"/><rect x="50" y="9" width="1" height="1" fill="#000065"/><rect x="5" y="11" width="2" height="1" fill="#000697"/><rect x="104" y="39" width="3" height="1" fill="#000064"/><rect x="54" y="14" width="2" height="2" fill="#00006b"/><rect x="5" y="38" width="2" height="2" fill="#00058a"/><rect x="54" y="17" width="2" height="1" fill="#000ab7"/><rect x="3" y="5" width="2" height="2" fill="#000069"/><rect x="55" y="10" width="3" height="1" fill="#000274"/><rect x="52" y="30" width="2" height="1" fill="#008dff"/><rect x="58" y="25" width="3" height="2" fill="#000276"/><rect x="45" y="34" width="3" height="1" fill="#000273"/><rect x="109" y="42" width="1" height="1" fill="#0011ee"/><rect x="49" y="10" width="2" height="1" fill="#0007a1"/><rect x="20" y="30" width="1" height="1" fill="#000068"/><rect x="49" y="3" width="1" height="1" fill="#000065"/><rect x="70" y="46" width="2" height="1" fill="#000064"/><rect x="6" y="33" width="2" height="1" fill="#000382"/><rect x="56" y="7" width="2" height="1" fill="#0061ff"/><rect x="83" y="24" width="2" height="1" fill="#00016f"/><rect x="92" y="28" width="3" height="1" fill="#00b6ff"/><rect x="55" y="45" width="2" height="1" fill="#00006b"/><rect x="109" y="3" width="2" height="1" fill="#00a4ff"/><rect x="8" y="40" width="3" height="1" fill="#000bbb"/><rect x="22" y="9" width="1" height="1" fill="#00079d"/><rect x="90" y="14" width="2" height="1" fill="#0022ff"/><rect x="38" y="10" width="1" height="2" fill="#000590"/><rect x="44" y="45" width="1" height="1" fill="#000064"/><rect x="31" y="9" width="1" height="2" fill="#000695"/><rect x="75" y="17" width="2" height="1" fill="#0085ff"/><rect x="43" y="5" width="3" height="1" fill="#0025ff"/><rect x="108" y="35" width="2" height="1" fill="#000065"/><rect x="8" y="1" width="1" height="1" fill="#00016c"/><rect x="58" y="25" width="3" height="1" fill="#0011e9"/><rect x="110" y="43" width="2" height="2" fill="#005eff"/><rect x="90" y="25" width="2" height="1" fill="#000064"/><rect x="93" y="20" width="1" height="1" fill="#000dce"/><rect x="48" y="40" width="1" height="1" fill="#000380"/><rect x="84" y="1" width="3" height="2" fill="#00037b"/><rect x="1" y="34" width="2" height="2" fill="#0011e7"/><rect x="97" y="46" width="1" height="2" fill="#0054ff"/><rect x="88" y="41" width="1" height="2" fill="#00058c"/><rect x="15" y="36" width="1" height="1" fill="#007eff"/><rect x="99" y="35" width="3" height="2" fill="#001cff"/><rect x="44" y="11" width="2" height="1" fill="#000068"/><rect x="103" y="18" width="3" height="2" fill="#0041ff"/><rect x="21" y="36" width="2" height="1" fill="#000bbd"/><rect x="76" y="16" width="1" height="2" fill="#0009af"/><rect x="75" y="26" width="1" height="1" fill="#00006a"/><rect x="50" y="36" width="3" height="1" fill="#0008a5"/><rect x="82" y="5" width="3" height="2" fill="#000173"/><rect x="62" y="46" width="1" height="1" fill="#000069"/><rect x="81" y="17" width="2" height="1" fill="#000067"/><rect x="1" y="7" width="1" height="2" fill="#0095ff"/><rect x="59" y="15" width="1" height="1" fill="#00016f"/><rect x="13" y="6" width="1" height="1" fill="#000064"/><rect x="53" y="9" width="2" height="1" fill="#000064"/><rect x="102" y="24" width="3" height="1" fill="#000069"/><rect x="73" y="31" width="1" height="1" fill="#0044ff"/><rect x="50" y="32" width="3" height="1" fill="#00037d"/><rect x="109" y="4" width="1" height="1" fill="#0037ff"/><rect x="38" y="6" width="2" height="1" fill="#000064"/><rect x="84" y="3" width="2" height="1" fill="#000bc0"/><rect x="79" y="16" width="2" height="2" fill="#000066"/><rect x="82" y="14" width="2" height="1" fill="#0008a6"/><rect x="95" y="1" width="2" height="2" fill="#000065"/><rect x="55" y="43" width="1" height="1" fill="#000066"/><rect x="32" y="13" width="2" height="1" fill="#000ab5"/><rect x="78" y="0" width="1" height="2" fill="#000382"/><rect x="16" y="26" width="2" height="2" fill="#0073ff"/><rect x="56" y="7" width="2" height="1" fill="#0009ac"/><rect x="91" y="32" width="2" height="1" fill="#00acff"/><rect x="29" y="15" width="2" height="1" fill="#000172"/><rect x="0" y="31" width="3" height="1" fill="#000591"/><rect x="61" y="5" width="3" height="1" fill="#000065"/><rect x="13" y="27" width="2" height="1" fill="#000066"/><rect x="56" y="33" width="1" height="1" fill="#00016e"/><rect x="46" y="45" width="2" height="1" fill="#0013fe"/><rect x="72" y="9" width="1" height="1" fill="#000172"/><rect x="61" y="38" width="3" height="1" fill="#00037f"/><rect x="107" y="11" width="1" height="1" fill="#000ed3"/><rect x="29" y="4" width="2" height="1" fill="#0010e5"/><rect x="47" y="12" width="1" height="1" fill="#008bff"/><rect x="43" y="36" width="2" height="2" fill="#00037f"/><rect x="75" y="44" width="2" height="2" fill="#0017ff"/><rect x="35" y="22" width="3" height="1" fill="#0088ff"/><rect x="108" y="27" width="1" height="2" fill="#0066ff"/><rect x="98" y="18" width="1" height="1" fill="#000cc1"/><rect x="6" y="10" width="3" height="1" fill="#0022ff"/><rect x="68" y="28" width="2" height="2" fill="#00058a"/><rect x="0" y="4" width="2" height="1" fill="#0013f7"/><rect x="26" y="30" width="2" height="2" fill="#000065"/><rect x="100" y="41" width="1" height="2" fill="#00016e"/><rect x="39" y="35" width="1" height="1" fill="#000277"/><rect x="17" y="16" width="3" height="1" fill="#00079d"/><rect x="55" y="21" width="3" height="1" fill="#00016d"/><rect x="5" y="19" width="3" height="1" fill="#0008a3"/><rect x="33" y="10" width="2" height="1" fill="#0032ff"/><rect x="42" y="9" width="2" height="2" fill="#0067ff"/><rect x="56" y="42" width="2" height="1" fill="#0070ff"/><rect x="49" y="2" width="1" height="1" fill="#00a7ff"/><rect x="40" y="3" width="3" height="1" fill="#000064"/><rect x="101" y="6" width="3" height="1" fill="#000067"/><rect x="1" y="22" width="1" height="1" fill="#0008a9"/><rect x="91" y="15" width="3" height="1" fill="#000064"/><rect x="2" y="41" width="2" height="1" fill="#000069"/><rect x="103" y="17" width="3" height="1" fill="#0053ff"/><rect x="54" y="18" width="1" height="1" fill="#000064"/><rect x="49" y="34" width="1" height="2" fill="#000277"/><rect x="6" y="14" width="2" height="2" fill="#000bbf"/><rect x="62" y="38" width="1" height="1" fill="#00037e"/><rect x="81" y="25" width="1" height="1" fill="#0008a9"/><rect x="106" y="31" width="1" height="2" fill="#0010e1"/><rect x="27" y="16" width="1" height="1" fill="#000064"/><rect x="99" y="5" width="1" height="1" fill="#0019ff"/><rect x="88" y="27" width="2" height="1" fill="#000278"/><rect x="6" y="30" width="1" height="1" fill="#000ab2"/><rect x="16" y="2" width="2" height="1" fill="#000ab8"/><rect x="38" y="0" width="2" height="1" fill="#000065"/><rect x="20" y="38" width="1" height="1" fill="#00006a"/><rect x="89" y="43" width="3" height="2" fill="#0009ad"/><rect x="92" y="1" width="1" height="2" fill="#0010e2"/><rect x="85" y="0" width="3" height="2" fill="#001dff"/><rect x="102" y="11" width="1" height="2" fill="#000ed7"/><rect x="24" y="10" width="1" height="1" fill="#000cc7"/><rect x="69" y="34" width="2" height="1" fill="#00016b"/><rect x="76" y="16" width="2" height="1" fill="#000fde"/><rect x="79" y="16" width="1" height="1" fill="#000483"/><rect x="92" y="17" width="3" height="1" fill="#0022ff"/><rect x="24" y="34" width="1" height="1" fill="#00016e"/><rect x="21" y="20" width="1" height="1" fill="#000ed7"/><rect x="4" y="38" width="1" height="2" fill="#000173"/><rect x="27" y="40" width="2" height="2" fill="#000064"/><rect x="4" y="9" width="2" height="2" fill="#000279"/><rect x="108" y="23" width="2" height="1" fill="#000dc9"/><rect x="36" y="17" width="2" height="2" fill="#000dca"/><rect x="100" y="37" width="2" height="1" fill="#000489"/><rect x="9" y="16" width="1" height="2" fill="#00016d"/><rect x="110" y="19" width="1" height="1" fill="#00037e"/><rect x="0" y="44" width="3" height="2" fill="#0029ff"/><rect x="104" y="27" width="2" height="1" fill="#008bff"/><rect x="92" y="31" width="1" height="2" fill="#0059ff"/><rect x="37" y="6" width="1" height="1" fill="#0011ec"/><rect x="46" y="36" width="2" height="2" fill="#000066"/><rect x="111" y="24" width="1" height="2" fill="#000cc6"/><rect x="14" y="14" width="2" height="2" fill="#00006a"/><rect x="17" y="14" width="3" height="1" fill="#0010e7"/><rect x="41" y="32" width="2" height="1" fill="#000486"/><rect x="61" y="36" width="1" height="1" fill="#0008a5"/><rect x="87" y="15" width="1" height="1" fill="#000275"/><rect x="71" y="0" width="1" height="1" fill="#000276"/><rect x="106" y="13" width="1" height="1" fill="#000fd8"/><rect x="18" y="8" width="1" height="1" fill="#000bc0"/><rect x="34" y="8" width="1" height="1" fill="#0083ff"/><rect x="20" y="38" width="2" height="1" fill="#0027ff"/><rect x="69" y="31" width="1" height="1" fill="#0034ff"/><rect x="31" y="13" width="1" height="1" fill="#000171"/><rect x="24" y="39" width="3" height="1" fill="#000ab2"/><rect x="8" y="36" width="2" height="1" fill="#000382"/><rect x="35" y="11" width="3" height="2" fill="#000692"/><rect x="71" y="36" width="3" height="1" fill="#0087ff"/><rect x="70" y="37" width="1" height="2" fill="#0013fc"/><rect x="47" y="14" width="2" height="2" fill="#00037e"/><rect x="72" y="11" width="1" height="1" fill="#00b6ff"/><rect x="110" y="39" width="2" height="1" fill="#000fdb"/><rect x="59" y="36" width="2" height="1" fill="#000068"/><rect x="25" y="34" width="2" height="1" fill="#000cc2"/><rect x="16" y="38" width="1" height="1" fill="#000066"/><rect x="85" y="5" width="1" height="2" fill="#0008a7"/><rect x="85" y="19" width="2" height="1" fill="#000486"/><rect x="81" y="44" width="1" height="1" fill="#0013fe"/><rect x="79" y="13" width="2" height="1" fill="#00bdff"/><rect x="58" y="20" width="2" height="1" fill="#000ed5"/><rect x="21" y="32" width="1" height="2" fill="#0095ff"/><rect x="106" y="1" width="3" height="2" fill="#0087ff"/><rect x="47" y="35" width="2" height="1" fill="#0087ff"/><rect x="76" y="42" width="2" height="2" fill="#00a1ff"/><rect x="66" y="0" width="3" height="1" fill="#00a3ff"/><rect x="83" y="12" width="2" height="1" fill="#00abff"/><rect x="17" y="28" width="1" height="2" fill="#000068"/><rect x="32" y="32" width="2" height="1" fill="#0008a7"/><rect x="9" y="44" width="2" height="2" fill="#000484"/><rect x="4" y="33" width="2" height="1" fill="#00a1ff"/><rect x="25" y="10" width="1" height="1" fill="#0009ac"/><rect x="85" y="21" width="2" height="2" fill="#0042ff"/><rect x="102" y="39" width="3" height="1" fill="#001aff"/><rect x="27" y="18" width="1" height="1" fill="#001aff"/><rect x="79" y="20" width="1" height="1" fill="#000698"/><rect x="10" y="26" width="1" height="1" fill="#002dff"/><rect x="91" y="8" width="2" height="1" fill="#000697"/><rect x="95" y="12" width="2" height="2" fill="#004cff"/><rect x="10" y="25" width="2" height="1" fill="#000276"/><rect x="74" y="22" width="2" height="1" fill="#000065"/><rect x="101" y="25" width="2" height="1" fill="#000278"/><rect x="83" y="14" width="2" height="1" fill="#00016d"/><rect x="5" y="3" width="1" height="1" fill="#000cc4"/><rect x="41" y="45" width="1" height="1" fill="#0031ff"/><rect x="67" y="17" width="1" height="1" fill="#0067ff"/><rect x="110" y="0" width="1" height="2" fill="#000380"/><rect x="103" y="31" width="1" height="2" fill="#000066"/><rect x="88" y="26" width="1" height="1" fill="#0008a9"/><rect x="55" y="36" width="2" height="1" fill="#000064"/><rect x="19" y="30" width="1" height="1" fill="#000065"/><rect x="76" y="15" width="3" height="1" fill="#00b7ff"/><rect x="51" y="8" width="3" height="1" fill="#00016c"/><rect x="17" y="38" width="1" height="1" fill="#0024ff"/><rect x="76" y="17" width="2" height="1" fill="#000064"/><rect x="18" y="44" width="1" height="1" fill="#0031ff"/><rect x="91" y="27" width="2" height="1" fill="#0010e3"/><rect x="50" y="27" width="2" height="2" fill="#000381"/><rect x="60" y="11" width="2" height="1" fill="#00027a"/><rect x="88" y="3" width="2" height="1" fill="#0029ff"/><rect x="10" y="38" width="2" height="1" fill="#00abff"/><rect x="81" y="15" width="1" height="2" fill="#0035ff"/><rect x="94" y="39" width="2" height="1" fill="#000cc1"/><rect x="108" y="39" width="2" height="1" fill="#0012f4"/><rect x="20" y="5" width="2" height="1" fill="#000065"/><rect x="102" y="35" width="1" height="1" fill="#00037d"/><rect x="71" y="34" width="2" height="1" fill="#000592"/><rect x="45" y="10" width="1" height="1" fill="#000382"/><rect x="23" y="43" width="2" height="1" fill="#00bdff"/><rect x="55" y="13" width="1" height="1" fill="#000fdc"/><rect x="32" y="21" width="2" height="1" fill="#000bbd"/><rect x="55" y="33" width="3" height="1" fill="#00006b"/><rect x="52" y="22" width="3" height="2" fill="#000380"/><rect x="15" y="28" width="2" height="1" fill="#00016f"/><rect x="38" y="26" width="1" height="1" fill="#000275"/><rect x="65" y="39" width="1" height="1" fill="#004eff"/><rect x="39" y="3" width="1" height="1" fill="#000ed1"/><rect x="14" y="11" width="3" height="2" fill="#000bb9"/><rect x="31" y="29" width="2" height="1" fill="#000067"/><rect x="103" y="23" width="3" height="1" fill="#0013fd"/><rect x="11" y="36" width="2" height="1" fill="#0010e4"/><rect x="89" y="32" width="1" height="2" fill="#0007a0"/><rect x="75" y="46" width="2" height="1" fill="#000064"/><rect x="26" y="12" width="1" height="1" fill="#000170"/><rect x="90" y="33" width="3" height="2" fill="#000ab5"/><rect x="21" y="15" width="1" height="1" fill="#0093ff"/><rect x="68" y="3" width="1" height="1" fill="#0031ff"/><rect x="18" y="34" width="2" height="1" fill="#000483"/><rect x="93" y="8" width="1" height="1" fill="#0064ff"/><rect x="52" y="22" width="3" height="1" fill="#000ab2"/><rect x="109" y="43" width="2" height="1" fill="#0013f7"/><rect x="40" y="19" width="2" height="2" fill="#000279"/><rect x="49" y="30" width="2" height="1" fill="#000bbe"/><rect x="87" y="41" width="1" height="1" fill="#000590"/><rect x="26" y="7" width="1" height="1" fill="#00079b"/><rect x="9" y="13" width="2" height="1" fill="#007aff"/><rect x="36" y="29" width="2" height="1" fill="#0011e8"/><rect x="48" y="5" width="1" height="1" fill="#00a5ff"/><rect x="92" y="39" width="2" height="1" fill="#0012f3"/><rect x="104" y="26" width="1" height="2" fill="#000486"/><rect x="109" y="46" width="2" height="1" fill="#000171"/><rect x="63" y="0" width="2" height="1" fill="#00079d"/><rect x="109" y="22" width="1" height="1" fill="#00016d"/><rect x="57" y="24" width="1" height="2" fill="#000064"/><rect x="93" y="11" width="2" height="2" fill="#000485"/><rect x="18" y="4" width="3" height="1" fill="#000064"/><rect x="99" y="13" width="3" height="2" fill="#000ed8"/><rect x="39" y="19" width="2" height="1" fill="#000064"/><rect x="57" y="27" width="3" height="1" fill="#000693"/><rect x="46" y="13" width="2" height="1" fill="#000fdd"/><rect x="73" y="30" width="2" height="2" fill="#000276"/><rect x="111" y="28" width="1" height="1" fill="#0092ff"/><rect x="57" y="43" width="2" height="1" fill="#0008a6"/><rect x="40" y="15" width="1" height="1" fill="#000172"/><rect x="105" y="15" width="2" height="1" fill="#000fdf"/><rect x="50" y="14" width="1" height="1" fill="#000065"/><rect x="59" y="38" width="2" height="1" fill="#000277"/><rect x="50" y="17" width="1" height="1" fill="#00b9ff"/><rect x="15" y="27" width="2" height="1" fill="#0010e5"/><rect x="70" y="3" width="1" height="1" fill="#0071ff"/><rect x="21" y="33" width="2" height="2" fill="#000066"/><rect x="7" y="22" width="2" height="1" fill="#000064"/><rect x="39" y="28" width="1" height="1" fill="#000276"/><rect x="80" y="13" width="2" height="1" fill="#000069"/><rect x="36" y="32" width="2" height="1" fill="#0071ff"/><rect x="4" y="8" width="1" height="2" fill="#00037c"/><rect x="106" y="30" width="1" height="1" fill="#000064"/><rect x="33" y="1" width="3" height="1" fill="#00058f"/><rect x="105" y="29" width="1" height="2" fill="#000066"/><rect x="111" y="36" width="3" height="1" fill="#002dff"/><rect x="11" y="31" width="1" height="1" fill="#000bbe"/><rect x="105" y="26" width="2" height="1" fill="#00006b"/><rect x="1" y="8" width="2" height="2" fill="#000172"/><rect x="80" y="32" width="1" height="2" fill="#000697"/><rect x="66" y="18" width="1" height="1" fill="#0073ff"/><rect x="54" y="9" width="2" height="1" fill="#000065"/><rect x="46" y="7" width="3" height="1" fill="#0032ff"/><rect x="12" y="13" width="3" height="1" fill="#000069"/><rect x="20" y="21" width="1" height="1" fill="#0013fe"/><rect x="37" y="35" width="3" height="1" fill="#0007a1"/><rect x="59" y="32" width="2" height="2" fill="#000483"/><rect x="98" y="40" width="3" height="2" fill="#0038ff"/><rect x="107" y="43" width="1" height="1" fill="#00006a"/><rect x="22" y="41" width="1" height="1" fill="#0057ff"/><rect x="17" y="44" width="1" height="2" fill="#002dff"/><rect x="10" y="31" width="3" height="2" fill="#00048a"/><rect x="81" y="27" width="3" height="2" fill="#00079c"/><rect x="61" y="8" width="1" height="2" fill="#000064"/><rect x="35" y="39" width="1" height="2" fill="#00016e"/><rect x="49" y="28" width="1" height="1" fill="#0011ed"/><rect x="85" y="9" width="2" height="2" fill="#008dff"/><rect x="19" y="38" width="1" height="2" fill="#0075ff"/><rect x="107" y="4" width="1" height="1" fill="#0056ff"/><rect x="85" y="4" width="1" height="1" fill="#000ab2"/><rect x="7" y="13" width="2" height="1" fill="#0010e2"/><rect x="84" y="22" width="1" height="1" fill="#00058d"/><rect x="45" y="7" width="2" height="2" fill="#0046ff"/><rect x="64" y="6" width="1" height="1" fill="#000068"/><rect x="98" y="38" width="1" height="1" fill="#000064"/><rect x="85" y="10" width="2" height="1" fill="#00037d"/><rect x="102" y="39" width="2" height="1" fill="#002cff"/><rect x="57" y="3" width="1" height="1" fill="#000069"/><rect x="3" y="39" width="2" height="1" fill="#004eff"/><rect x="32" y="6" width="1" height="1" fill="#0029ff"/><rect x="108" y="36" width="2" height="2" fill="#00016b"/><rect x="9" y="8" width="2" height="1" fill="#000ed3"/><rect x="30" y="10" width="1" height="1" fill="#000bc0"/><rect x="58" y="6" width="1" height="1" fill="#000ab8"/><rect x="83" y="40" width="1" height="1" fill="#003cff"/><rect x="10" y="19" width="1" height="2" fill="#0042ff"/><rect x="38" y="34" width="1" height="1" fill="#000067"/><rect x="105" y="34" width="1" height="1" fill="#0009aa"/><rect x="98" y="13" width="2" height="2" fill="#000ed2"/><rect x="12" y="1" width="2" height="2" fill="#00a3ff"/><rect x="0" y="18" width="2" height="2" fill="#000484"/><rect x="26" y="30" width="3" height="1" fill="#0008a9"/><rect x="100" y="34" width="1" height="1" fill="#000692"/><rect x="95" y="12" width="2" height="2" fill="#00016f"/><rect x="31" y="7" width="2" height="1" fill="#0011e8"/><rect x="27" y="27" width="2" height="2" fill="#000696"/><rect x="104" y="29" width="3" height="2" fill="#000485"/><rect x="26" y="43" width="2" height="1" fill="#0043ff"/><rect x="66" y="6" width="2" height="1" fill="#00037d"/><rect x="106" y="0" width="1" height="1" fill="#0091ff"/><rect x="91" y="24" width="1" height="1" fill="#00b0ff"/><rect x="39" y="42" width="2" height="1" fill="#00b6ff"/><rect x="86" y="15" width="3" height="1" fill="#000279"/><rect x="102" y="42" width="1" height="1" fill="#000380"/><rect x="19" y="44" width="3" height="2" fill="#004dff"/><rect x="58" y="43" width="1" height="1" fill="#000cc3"/><rect x="7" y="5" width="1" height="1" fill="#00016c"/><rect x="17" y="24" width="2" height="1" fill="#00b5ff"/><rect x="10" y="2" width="3" height="2" fill="#0033ff"/><rect x="105" y="36" width="2" height="1" fill="#0011eb"/><rect x="95" y="21" width="2" height="1" fill="#008aff"/><rect x="14" y="24" width="2" height="1" fill="#000064"/><rect x="107" y="32" width="2" height="1" fill="#000064"/><rect x="40" y="45" width="2" height="2" fill="#000bbd"/><rect x="71" y="32" width="1" height="1" fill="#0008a7"/><rect x="51" y="16" width="1" height="1" fill="#00016c"/><rect x="14" y="39" width="1" height="2" fill="#000590"/><rect x="32" y="38" width="1" height="1" fill="#000172"/><rect x="89" y="17" width="3" height="1" fill="#000697"/><rect x="54" y="1" width="1" height="1" fill="#0008a7"/><rect x="18" y="26" width="1" height="2" fill="#0008a6"/><rect x="95" y="31" width="3" height="1" fill="#000488"/><rect x="88" y="46" width="2" height="2" fill="#00069a"/><rect x="83" y="34" width="2" height="2" fill="#000064"/><rect x="33" y="38" width="1" height="1" fill="#000173"/><rect x="64" y="1" width="1" height="1" fill="#00016e"/><rect x="94" y="6" width="1" height="1" fill="#0013fd"/><rect x="66" y="9" width="1" height="2" fill="#007bff"/><rect x="66" y="4" width="2" height="1" fill="#0084ff"/><rect x="106" y="9" width="2" height="2" fill="#000cc7"/><rect x="87" y="18" width="2" height="1" fill="#0009ac"/><rect x="2" y="40" width="1" height="1" fill="#000cc6"/><rect x="110" y="44" width="2" height="2" fill="#0008a8"/><rect x="98" y="11" width="1" height="2" fill="#001bff"/><rect x="9" y="22" width="2" height="1" fill="#0012f4"/><rect x="47" y="19" width="2" height="2" fill="#00079d"/><rect x="47" y="20" width="3" height="2" fill="#000068"/><rect x="16" y="44" width="2" height="1" fill="#000ed1"/><rect x="88" y="16" width="2" height="2" fill="#000cc5"/><rect x="37" y="33" width="2" height="1" fill="#0008a2"/><rect x="57" y="9" width="2" height="1" fill="#0063ff"/><rect x="29" y="21" width="1" height="1" fill="#000069"/><rect x="53" y="40" width="2" height="1" fill="#000274"/><rect x="78" y="0" width="2" height="1" fill="#000065"/><rect x="33" y="31" width="2" height="2" fill="#003dff"/><rect x="54" y="16" width="2" height="1" fill="#00037c"/><rect x="26" y="24" width="1" height="1" fill="#0029ff"/><rect x="41" y="9" width="2" height="2" fill="#005cff"/><rect x="67" y="9" width="2" height="1" fill="#0053ff"/><rect x="24" y="45" width="2" height="1" fill="#000ed3"/><rect x="33" y="31" width="2" height="1" fill="#000693"/><rect x="27" y="1" width="3" height="1" fill="#00058c"/><rect x="37" y="15" width="2" height="2" fill="#000381"/><rect x="56" y="20" width="2" height="1" fill="#000fdf"/><rect x="4" y="18" width="1" height="1" fill="#000cc4"/></pattern><pattern id="spB" width="127" height="53" patternUnits="userSpaceOnUse"><rect x="122" y="3" width="1" height="1" fill="#00069a"/><rect x="21" y="47" width="2" height="1" fill="#000dcb"/><rect x="77" y="2" width="3" height="1" fill="#0085ff"/><rect x="81" y="25" width="3" height="1" fill="#000bbb"/><rect x="56" y="32" width="2" height="1" fill="#0040ff"/><rect x="46" y="29" width="2" height="2" fill="#0008a3"/><rect x="113" y="33" width="1" height="1" fill="#00058c"/><rect x="3" y="11" width="2" height="1" fill="#000485"/><rect x="65" y="23" width="3" height="1" fill="#0082ff"/><rect x="57" y="50" width="2" height="1" fill="#001aff"/><rect x="45" y="23" width="2" height="1" fill="#006bff"/><rect x="51" y="45" width="2" height="1" fill="#0009b0"/><rect x="118" y="31" width="3" height="1" fill="#000fda"/><rect x="58" y="29" width="2" height="2" fill="#0009af"/><rect x="28" y="20" width="1" height="1" fill="#0013fe"/><rect x="61" y="19" width="2" height="2" fill="#000693"/><rect x="26" y="31" width="3" height="1" fill="#0060ff"/><rect x="79" y="4" width="2" height="1" fill="#0052ff"/><rect x="24" y="47" width="1" height="1" fill="#000cc3"/><rect x="6" y="17" width="3" height="1" fill="#0010e0"/><rect x="117" y="6" width="3" height="1" fill="#0037ff"/><rect x="31" y="52" width="1" height="1" fill="#0008a3"/><rect x="91" y="48" width="1" height="1" fill="#00079a"/><rect x="22" y="15" width="1" height="1" fill="#000484"/><rect x="8" y="1" width="1" height="1" fill="#00079b"/><rect x="16" y="52" width="1" height="1" fill="#000ab7"/><rect x="0" y="24" width="3" height="1" fill="#001cff"/><rect x="31" y="9" width="1" height="1" fill="#000697"/><rect x="78" y="40" width="1" height="1" fill="#000696"/><rect x="3" y="19" width="2" height="1" fill="#004fff"/><rect x="96" y="25" width="3" height="1" fill="#0009ac"/><rect x="28" y="5" width="2" height="1" fill="#000483"/><rect x="100" y="8" width="3" height="2" fill="#0009af"/><rect x="41" y="9" width="2" height="1" fill="#00058e"/><rect x="124" y="26" width="1" height="1" fill="#000fdd"/><rect x="32" y="2" width="1" height="1" fill="#000487"/><rect x="58" y="40" width="1" height="1" fill="#0082ff"/><rect x="29" y="45" width="2" height="1" fill="#00058d"/><rect x="75" y="14" width="3" height="1" fill="#00058d"/><rect x="54" y="17" width="3" height="1" fill="#000486"/><rect x="49" y="26" width="1" height="1" fill="#000ab4"/><rect x="11" y="15" width="1" height="1" fill="#000483"/><rect x="96" y="14" width="1" height="1" fill="#000483"/><rect x="85" y="29" width="2" height="1" fill="#000bb9"/><rect x="48" y="13" width="1" height="2" fill="#0008a4"/><rect x="2" y="37" width="3" height="1" fill="#0045ff"/><rect x="118" y="33" width="3" height="1" fill="#0059ff"/><rect x="84" y="51" width="2" height="1" fill="#000483"/><rect x="122" y="7" width="3" height="1" fill="#000591"/><rect x="125" y="23" width="2" height="1" fill="#0041ff"/><rect x="52" y="6" width="1" height="1" fill="#000489"/><rect x="99" y="43" width="1" height="2" fill="#000483"/><rect x="81" y="31" width="2" height="1" fill="#0049ff"/><rect x="78" y="4" width="1" height="1" fill="#000483"/><rect x="39" y="46" width="1" height="1" fill="#0013f7"/><rect x="24" y="7" width="3" height="1" fill="#00079e"/><rect x="59" y="8" width="2" height="2" fill="#0048ff"/><rect x="32" y="7" width="1" height="1" fill="#000dcd"/><rect x="42" y="41" width="2" height="1" fill="#0010e3"/><rect x="3" y="39" width="2" height="1" fill="#0011ed"/><rect x="63" y="18" width="2" height="2" fill="#000485"/><rect x="47" y="17" width="2" height="2" fill="#0011ec"/><rect x="93" y="51" width="2" height="2" fill="#002fff"/><rect x="37" y="25" width="1" height="1" fill="#0009af"/><rect x="33" y="35" width="2" height="1" fill="#000cc5"/><rect x="104" y="36" width="1" height="1" fill="#000699"/><rect x="69" y="9" width="2" height="1" fill="#001eff"/><rect x="116" y="43" width="1" height="1" fill="#0076ff"/><rect x="49" y="14" width="2" height="2" fill="#000487"/><rect x="36" y="7" width="1" height="2" fill="#000484"/><rect x="66" y="15" width="3" height="1" fill="#000487"/><rect x="20" y="29" width="1" height="2" fill="#0041ff"/><rect x="45" y="50" width="3" height="1" fill="#0009ab"/><rect x="92" y="1" width="3" height="2" fill="#0045ff"/><rect x="23" y="25" width="3" height="1" fill="#0009ae"/><rect x="51" y="16" width="2" height="2" fill="#000699"/><rect x="70" y="21" width="1" height="1" fill="#000bb9"/><rect x="24" y="25" width="2" height="1" fill="#000693"/><rect x="67" y="45" width="2" height="1" fill="#0025ff"/><rect x="2" y="25" width="1" height="2" fill="#0051ff"/><rect x="113" y="6" width="2" height="1" fill="#00058f"/><rect x="117" y="37" width="3" height="1" fill="#0009b0"/><rect x="78" y="8" width="1" height="2" fill="#0009ae"/><rect x="65" y="36" width="1" height="2" fill="#0011ea"/><rect x="124" y="48" width="1" height="1" fill="#000483"/><rect x="62" y="34" width="1" height="2" fill="#005bff"/><rect x="118" y="21" width="2" height="1" fill="#0043ff"/><rect x="58" y="1" width="1" height="1" fill="#000487"/><rect x="96" y="50" width="2" height="1" fill="#000fde"/><rect x="100" y="46" width="1" height="1" fill="#000486"/><rect x="48" y="29" width="2" height="1" fill="#000483"/><rect x="71" y="29" width="1" height="1" fill="#000483"/><rect x="108" y="24" width="3" height="2" fill="#000489"/><rect x="86" y="19" width="2" height="1" fill="#0009ae"/><rect x="68" y="45" width="2" height="1" fill="#00058e"/><rect x="40" y="19" width="2" height="1" fill="#000ed8"/><rect x="50" y="33" width="1" height="1" fill="#00079e"/><rect x="67" y="9" width="3" height="1" fill="#000693"/><rect x="29" y="29" width="3" height="1" fill="#000ab7"/><rect x="7" y="7" width="1" height="2" fill="#0039ff"/><rect x="27" y="20" width="2" height="1" fill="#000696"/><rect x="46" y="10" width="2" height="2" fill="#003fff"/><rect x="59" y="8" width="2" height="1" fill="#005eff"/><rect x="41" y="10" width="1" height="1" fill="#0009ac"/><rect x="96" y="43" width="2" height="1" fill="#000699"/><rect x="101" y="8" width="1" height="1" fill="#0022ff"/><rect x="81" y="24" width="2" height="1" fill="#000590"/><rect x="92" y="38" width="3" height="1" fill="#0012f3"/><rect x="96" y="45" width="2" height="1" fill="#00079a"/><rect x="50" y="30" width="1" height="1" fill="#006dff"/><rect x="45" y="28" width="2" height="1" fill="#004bff"/><rect x="23" y="20" width="2" height="1" fill="#0073ff"/><rect x="13" y="22" width="1" height="1" fill="#000483"/><rect x="112" y="46" width="2" height="1" fill="#000bbb"/><rect x="30" y="52" width="3" height="2" fill="#000bbb"/><rect x="60" y="40" width="1" height="1" fill="#000694"/><rect x="118" y="31" width="1" height="1" fill="#0017ff"/><rect x="42" y="16" width="1" height="2" fill="#000699"/><rect x="11" y="21" width="1" height="1" fill="#0011e8"/><rect x="93" y="39" width="1" height="1" fill="#0063ff"/><rect x="82" y="49" width="3" height="1" fill="#003bff"/><rect x="22" y="4" width="2" height="2" fill="#0015ff"/><rect x="16" y="20" width="3" height="1" fill="#000696"/><rect x="98" y="45" width="3" height="2" fill="#00058b"/><rect x="6" y="25" width="2" height="2" fill="#000dce"/><rect x="40" y="34" width="3" height="1" fill="#000cc6"/><rect x="68" y="42" width="2" height="2" fill="#0031ff"/><rect x="58" y="10" width="2" height="2" fill="#000ab7"/><rect x="5" y="6" width="2" height="1" fill="#000484"/><rect x="117" y="43" width="3" height="1" fill="#000483"/><rect x="39" y="29" width="1" height="1" fill="#000484"/><rect x="44" y="14" width="1" height="1" fill="#000486"/><rect x="85" y="5" width="2" height="2" fill="#000483"/><rect x="115" y="30" width="1" height="1" fill="#0009ae"/><rect x="71" y="1" width="1" height="1" fill="#000483"/><rect x="69" y="0" width="3" height="1" fill="#0010e0"/><rect x="112" y="15" width="1" height="1" fill="#0009b0"/><rect x="16" y="34" width="1" height="1" fill="#000484"/><rect x="27" y="51" width="1" height="1" fill="#000ed0"/><rect x="43" y="39" width="2" height="1" fill="#000ab4"/><rect x="106" y="52" width="1" height="1" fill="#000487"/><rect x="25" y="19" width="2" height="2" fill="#000486"/><rect x="16" y="25" width="2" height="1" fill="#0023ff"/><rect x="71" y="6" width="2" height="1" fill="#000590"/><rect x="97" y="31" width="2" height="1" fill="#0008a3"/><rect x="17" y="44" width="3" height="1" fill="#000483"/><rect x="70" y="48" width="1" height="1" fill="#000488"/><rect x="74" y="2" width="1" height="1" fill="#0012f3"/><rect x="89" y="46" width="2" height="1" fill="#0012f1"/><rect x="110" y="52" width="1" height="1" fill="#000dc9"/><rect x="4" y="44" width="1" height="1" fill="#000485"/><rect x="88" y="34" width="1" height="1" fill="#0078ff"/><rect x="115" y="29" width="2" height="1" fill="#000486"/><rect x="41" y="44" width="2" height="1" fill="#0007a1"/><rect x="53" y="42" width="1" height="2" fill="#000592"/><rect x="110" y="7" width="2" height="1" fill="#00048a"/><rect x="42" y="16" width="3" height="2" fill="#000cc7"/><rect x="95" y="12" width="2" height="1" fill="#0010e3"/><rect x="100" y="28" width="2" height="1" fill="#00079d"/><rect x="78" y="16" width="3" height="1" fill="#000cc4"/><rect x="56" y="12" width="2" height="1" fill="#000693"/><rect x="21" y="23" width="3" height="2" fill="#00058a"/><rect x="78" y="41" width="3" height="1" fill="#0010e0"/><rect x="39" y="13" width="3" height="1" fill="#000484"/><rect x="100" y="1" width="1" height="1" fill="#000483"/><rect x="68" y="16" width="2" height="2" fill="#000483"/><rect x="60" y="45" width="1" height="1" fill="#000cc4"/><rect x="16" y="13" width="1" height="1" fill="#000dcb"/><rect x="48" y="46" width="1" height="2" fill="#0056ff"/><rect x="82" y="5" width="2" height="2" fill="#001fff"/><rect x="117" y="15" width="1" height="1" fill="#0035ff"/><rect x="109" y="14" width="1" height="1" fill="#000cc7"/><rect x="89" y="25" width="3" height="2" fill="#00058b"/><rect x="27" y="35" width="1" height="1" fill="#000fdb"/><rect x="17" y="39" width="2" height="2" fill="#000485"/><rect x="58" y="25" width="2" height="2" fill="#006fff"/><rect x="36" y="13" width="1" height="1" fill="#000483"/><rect x="67" y="52" width="1" height="1" fill="#000483"/><rect x="90" y="27" width="2" height="1" fill="#000ab5"/><rect x="12" y="23" width="3" height="1" fill="#000ab6"/><rect x="100" y="31" width="3" height="1" fill="#0010e7"/><rect x="94" y="44" width="1" height="1" fill="#000483"/><rect x="61" y="2" width="1" height="1" fill="#000489"/><rect x="30" y="34" width="1" height="1" fill="#000ed6"/><rect x="120" y="48" width="1" height="1" fill="#000fdf"/><rect x="17" y="27" width="1" height="1" fill="#000693"/><rect x="84" y="17" width="2" height="1" fill="#0066ff"/><rect x="45" y="48" width="2" height="1" fill="#000dcb"/><rect x="13" y="38" width="2" height="1" fill="#001cff"/><rect x="120" y="40" width="2" height="2" fill="#004cff"/><rect x="65" y="38" width="1" height="1" fill="#000483"/><rect x="55" y="40" width="1" height="1" fill="#000fdd"/><rect x="68" y="45" width="1" height="1" fill="#0010e3"/><rect x="64" y="39" width="2" height="2" fill="#0008a3"/><rect x="101" y="11" width="1" height="1" fill="#000483"/><rect x="97" y="46" width="2" height="1" fill="#000591"/><rect x="115" y="2" width="1" height="1" fill="#0007a0"/><rect x="116" y="23" width="1" height="1" fill="#00058c"/><rect x="70" y="12" width="1" height="1" fill="#0010e3"/><rect x="10" y="32" width="2" height="1" fill="#000483"/><rect x="66" y="33" width="2" height="2" fill="#0056ff"/><rect x="16" y="9" width="2" height="1" fill="#0009aa"/><rect x="47" y="3" width="3" height="1" fill="#000ab5"/><rect x="56" y="27" width="3" height="2" fill="#000486"/><rect x="76" y="8" width="2" height="1" fill="#000483"/><rect x="90" y="11" width="1" height="2" fill="#000cc1"/><rect x="32" y="28" width="2" height="2" fill="#000488"/><rect x="55" y="17" width="1" height="1" fill="#0012f6"/><rect x="121" y="2" width="2" height="1" fill="#0008a4"/><rect x="119" y="1" width="3" height="2" fill="#000cc1"/><rect x="87" y="17" width="1" height="2" fill="#0011e9"/><rect x="46" y="33" width="3" height="2" fill="#0052ff"/><rect x="31" y="35" width="3" height="1" fill="#0009aa"/><rect x="121" y="48" width="2" height="2" fill="#000484"/><rect x="87" y="15" width="2" height="1" fill="#0008a5"/><rect x="59" y="39" width="3" height="2" fill="#000484"/><rect x="94" y="24" width="2" height="1" fill="#0055ff"/><rect x="71" y="22" width="1" height="1" fill="#00058b"/><rect x="114" y="41" width="1" height="2" fill="#0008a8"/><rect x="90" y="46" width="1" height="2" fill="#00058e"/><rect x="40" y="36" width="2" height="1" fill="#000ed6"/><rect x="100" y="16" width="2" height="1" fill="#0007a0"/><rect x="5" y="13" width="2" height="1" fill="#000484"/><rect x="120" y="23" width="2" height="1" fill="#0012f0"/><rect x="22" y="47" width="2" height="1" fill="#000ab7"/><rect x="61" y="25" width="3" height="1" fill="#0008a7"/><rect x="12" y="38" width="1" height="1" fill="#000483"/><rect x="63" y="8" width="1" height="1" fill="#000695"/><rect x="61" y="41" width="3" height="1" fill="#0042ff"/><rect x="81" y="36" width="1" height="1" fill="#0012f3"/><rect x="41" y="10" width="2" height="1" fill="#0016ff"/><rect x="50" y="36" width="3" height="2" fill="#0009ab"/><rect x="35" y="5" width="3" height="1" fill="#000cc2"/><rect x="30" y="23" width="2" height="1" fill="#004bff"/><rect x="69" y="51" width="3" height="1" fill="#000489"/><rect x="59" y="15" width="2" height="1" fill="#000cc6"/><rect x="65" y="10" width="1" height="2" fill="#0013fc"/><rect x="94" y="23" width="1" height="1" fill="#0011ee"/><rect x="77" y="11" width="2" height="1" fill="#001aff"/><rect x="17" y="13" width="1" height="1" fill="#000dcf"/><rect x="58" y="49" width="1" height="1" fill="#00058f"/><rect x="78" y="1" width="1" height="1" fill="#0043ff"/><rect x="39" y="2" width="3" height="1" fill="#0009ac"/><rect x="15" y="4" width="2" height="1" fill="#000486"/><rect x="112" y="49" width="2" height="1" fill="#00058e"/><rect x="111" y="30" width="3" height="1" fill="#0054ff"/><rect x="114" y="33" width="2" height="1" fill="#0056ff"/><rect x="70" y="35" width="1" height="1" fill="#0008a2"/><rect x="16" y="11" width="3" height="1" fill="#0009ab"/><rect x="25" y="2" width="2" height="2" fill="#0017ff"/><rect x="19" y="14" width="3" height="1" fill="#000ed2"/><rect x="102" y="44" width="1" height="1" fill="#000486"/><rect x="118" y="14" width="1" height="1" fill="#000485"/><rect x="13" y="23" width="1" height="1" fill="#000698"/><rect x="122" y="27" width="1" height="1" fill="#000bbd"/><rect x="2" y="48" width="1" height="1" fill="#000ed3"/><rect x="92" y="4" width="3" height="1" fill="#000485"/><rect x="94" y="31" width="2" height="1" fill="#0009ae"/><rect x="37" y="19" width="1" height="1" fill="#006fff"/><rect x="14" y="0" width="1" height="1" fill="#000698"/><rect x="108" y="45" width="1" height="1" fill="#0014ff"/><rect x="86" y="34" width="1" height="1" fill="#0080ff"/><rect x="29" y="36" width="1" height="1" fill="#007eff"/><rect x="112" y="11" width="2" height="1" fill="#0007a1"/><rect x="84" y="2" width="2" height="2" fill="#005bff"/><rect x="83" y="35" width="2" height="1" fill="#000ab8"/><rect x="15" y="42" width="1" height="1" fill="#0010e1"/><rect x="48" y="9" width="2" height="1" fill="#000ed2"/><rect x="78" y="34" width="1" height="1" fill="#000ab5"/><rect x="73" y="46" width="3" height="1" fill="#000489"/><rect x="125" y="39" width="1" height="1" fill="#000485"/><rect x="30" y="15" width="2" height="2" fill="#0008a9"/><rect x="40" y="14" width="1" height="1" fill="#000484"/><rect x="2" y="36" width="1" height="1" fill="#000698"/><rect x="30" y="21" width="2" height="1" fill="#000483"/><rect x="21" y="8" width="1" height="2" fill="#000486"/><rect x="13" y="41" width="2" height="2" fill="#0009aa"/><rect x="14" y="27" width="1" height="1" fill="#002eff"/><rect x="24" y="27" width="1" height="1" fill="#001cff"/><rect x="48" y="52" width="2" height="1" fill="#000487"/><rect x="109" y="17" width="2" height="1" fill="#0071ff"/><rect x="121" y="52" width="2" height="1" fill="#000bc0"/><rect x="63" y="30" width="2" height="1" fill="#007cff"/><rect x="22" y="41" width="2" height="1" fill="#001aff"/><rect x="58" y="33" width="2" height="1" fill="#000bba"/><rect x="72" y="0" width="2" height="2" fill="#0047ff"/><rect x="58" y="46" width="1" height="2" fill="#000ab7"/><rect x="35" y="10" width="1" height="1" fill="#0025ff"/><rect x="94" y="14" width="1" height="2" fill="#000485"/><rect x="65" y="12" width="3" height="2" fill="#004aff"/><rect x="20" y="4" width="2" height="2" fill="#000485"/><rect x="65" y="5" width="2" height="1" fill="#00058a"/><rect x="100" y="35" width="1" height="2" fill="#000bc0"/><rect x="114" y="25" width="3" height="1" fill="#00058b"/><rect x="20" y="46" width="2" height="1" fill="#004cff"/><rect x="119" y="12" width="3" height="1" fill="#000ab2"/><rect x="32" y="35" width="2" height="1" fill="#000486"/><rect x="82" y="39" width="2" height="1" fill="#000483"/><rect x="62" y="12" width="3" height="1" fill="#0062ff"/><rect x="93" y="41" width="1" height="2" fill="#000696"/><rect x="57" y="3" width="1" height="1" fill="#00058d"/><rect x="95" y="28" width="2" height="1" fill="#000483"/><rect x="41" y="0" width="2" height="1" fill="#000488"/><rect x="88" y="43" width="2" height="1" fill="#0008a3"/><rect x="37" y="4" width="1" height="1" fill="#0008a3"/><rect x="106" y="4" width="3" height="1" fill="#000483"/><rect x="46" y="13" width="3" height="2" fill="#0008a5"/><rect x="85" y="49" width="3" height="1" fill="#000484"/><rect x="0" y="4" width="1" height="1" fill="#0011ec"/><rect x="108" y="49" width="3" height="1" fill="#000486"/><rect x="37" y="16" width="1" height="1" fill="#000ed5"/><rect x="2" y="22" width="2" height="1" fill="#00079d"/><rect x="115" y="42" width="1" height="2" fill="#000483"/><rect x="27" y="10" width="3" height="2" fill="#000bbb"/><rect x="4" y="36" width="2" height="1" fill="#00058c"/><rect x="31" y="3" width="1" height="1" fill="#000fdf"/><rect x="22" y="39" width="1" height="1" fill="#006cff"/><rect x="74" y="12" width="1" height="1" fill="#000695"/><rect x="10" y="41" width="1" height="1" fill="#000cc2"/><rect x="122" y="15" width="1" height="1" fill="#0009b0"/><rect x="23" y="13" width="1" height="2" fill="#000590"/><rect x="10" y="14" width="3" height="1" fill="#000ed8"/><rect x="37" y="34" width="2" height="1" fill="#0013fb"/><rect x="124" y="5" width="2" height="1" fill="#000dcb"/><rect x="45" y="18" width="3" height="2" fill="#0083ff"/><rect x="54" y="41" width="1" height="1" fill="#000ed6"/><rect x="29" y="39" width="1" height="1" fill="#0009aa"/><rect x="77" y="9" width="2" height="1" fill="#000486"/><rect x="24" y="30" width="2" height="1" fill="#0008a5"/><rect x="25" y="6" width="2" height="1" fill="#000693"/><rect x="17" y="15" width="3" height="1" fill="#0009ac"/><rect x="41" y="0" width="1" height="1" fill="#000484"/><rect x="37" y="3" width="2" height="1" fill="#000489"/><rect x="107" y="4" width="1" height="1" fill="#000484"/><rect x="14" y="26" width="3" height="2" fill="#000ed0"/><rect x="121" y="1" width="1" height="1" fill="#000485"/><rect x="111" y="12" width="1" height="1" fill="#004dff"/><rect x="35" y="33" width="3" height="1" fill="#000484"/><rect x="125" y="51" width="1" height="1" fill="#000489"/><rect x="77" y="5" width="1" height="1" fill="#0055ff"/><rect x="85" y="6" width="2" height="2" fill="#000483"/><rect x="114" y="37" width="1" height="1" fill="#0026ff"/><rect x="42" y="43" width="1" height="1" fill="#004bff"/><rect x="35" y="50" width="1" height="1" fill="#006eff"/><rect x="10" y="27" width="2" height="2" fill="#0081ff"/><rect x="34" y="38" width="3" height="1" fill="#0041ff"/><rect x="48" y="14" width="3" height="1" fill="#000489"/><rect x="62" y="28" width="1" height="2" fill="#00079e"/><rect x="111" y="20" width="1" height="2" fill="#000483"/><rect x="58" y="46" width="1" height="2" fill="#000bbe"/><rect x="96" y="3" width="3" height="2" fill="#00058f"/><rect x="57" y="18" width="2" height="2" fill="#007dff"/><rect x="96" y="43" width="1" height="1" fill="#003fff"/><rect x="96" y="1" width="2" height="1" fill="#00079e"/><rect x="55" y="37" width="1" height="1" fill="#0011e8"/><rect x="5" y="3" width="1" height="1" fill="#0029ff"/><rect x="116" y="45" width="2" height="1" fill="#000486"/><rect x="44" y="43" width="1" height="2" fill="#0081ff"/><rect x="78" y="10" width="1" height="2" fill="#000590"/><rect x="0" y="40" width="1" height="1" fill="#000483"/><rect x="28" y="52" width="1" height="2" fill="#0045ff"/><rect x="95" y="31" width="2" height="1" fill="#000483"/><rect x="52" y="33" width="3" height="1" fill="#0027ff"/><rect x="12" y="29" width="2" height="1" fill="#000bbf"/><rect x="38" y="39" width="1" height="1" fill="#000ab5"/><rect x="3" y="21" width="1" height="1" fill="#000ed0"/><rect x="50" y="20" width="3" height="1" fill="#000483"/><rect x="31" y="9" width="3" height="1" fill="#0010e7"/><rect x="6" y="51" width="1" height="1" fill="#000488"/><rect x="7" y="0" width="2" height="2" fill="#000dca"/><rect x="90" y="3" width="3" height="2" fill="#000483"/><rect x="20" y="33" width="3" height="1" fill="#000484"/><rect x="107" y="51" width="2" height="1" fill="#000ab1"/><rect x="116" y="43" width="2" height="2" fill="#0011ef"/><rect x="27" y="21" width="3" height="1" fill="#000dcd"/><rect x="0" y="47" width="3" height="1" fill="#0007a1"/><rect x="54" y="26" width="3" height="2" fill="#0040ff"/><rect x="35" y="26" width="1" height="1" fill="#000483"/><rect x="20" y="38" width="2" height="1" fill="#00048a"/><rect x="105" y="5" width="3" height="1" fill="#000591"/><rect x="116" y="21" width="1" height="1" fill="#000697"/><rect x="92" y="19" width="1" height="1" fill="#00058d"/><rect x="62" y="32" width="3" height="1" fill="#000591"/><rect x="41" y="33" width="3" height="2" fill="#0008a5"/><rect x="49" y="5" width="2" height="1" fill="#0082ff"/><rect x="66" y="9" width="1" height="1" fill="#00079e"/><rect x="98" y="43" width="3" height="1" fill="#0012f4"/><rect x="51" y="28" width="3" height="1" fill="#0058ff"/><rect x="126" y="52" width="2" height="1" fill="#000bbc"/><rect x="106" y="34" width="2" height="2" fill="#0048ff"/><rect x="25" y="38" width="1" height="1" fill="#000487"/><rect x="86" y="16" width="1" height="1" fill="#0024ff"/><rect x="124" y="2" width="2" height="1" fill="#00079f"/><rect x="31" y="52" width="2" height="1" fill="#000dcb"/><rect x="50" y="17" width="1" height="1" fill="#000488"/><rect x="36" y="0" width="1" height="1" fill="#000489"/><rect x="41" y="50" width="2" height="1" fill="#0013f8"/><rect x="89" y="21" width="2" height="1" fill="#000483"/><rect x="13" y="15" width="2" height="1" fill="#00079c"/><rect x="17" y="17" width="1" height="2" fill="#0071ff"/><rect x="86" y="26" width="2" height="1" fill="#000483"/><rect x="57" y="9" width="3" height="2" fill="#0007a0"/><rect x="90" y="17" width="3" height="1" fill="#0008a4"/><rect x="30" y="40" width="2" height="1" fill="#000489"/><rect x="60" y="24" width="1" height="1" fill="#000ab8"/><rect x="116" y="19" width="2" height="1" fill="#000cc2"/><rect x="121" y="40" width="2" height="1" fill="#000483"/><rect x="107" y="11" width="1" height="1" fill="#000590"/><rect x="68" y="14" width="1" height="1" fill="#000484"/><rect x="32" y="33" width="2" height="1" fill="#000ab3"/><rect x="18" y="12" width="1" height="1" fill="#000692"/><rect x="62" y="48" width="2" height="2" fill="#000ed2"/><rect x="99" y="32" width="2" height="1" fill="#0063ff"/><rect x="58" y="28" width="1" height="2" fill="#0017ff"/><rect x="51" y="11" width="1" height="1" fill="#000ab6"/><rect x="36" y="28" width="1" height="1" fill="#00079a"/><rect x="53" y="43" width="1" height="1" fill="#0015ff"/><rect x="88" y="52" width="3" height="1" fill="#000cc5"/><rect x="55" y="21" width="3" height="1" fill="#001fff"/><rect x="86" y="8" width="2" height="1" fill="#000ed3"/><rect x="9" y="0" width="3" height="2" fill="#000483"/><rect x="69" y="12" width="1" height="1" fill="#000bbd"/><rect x="43" y="10" width="2" height="1" fill="#000dc9"/><rect x="96" y="19" width="2" height="1" fill="#000486"/><rect x="120" y="40" width="1" height="2" fill="#0057ff"/><rect x="115" y="1" width="2" height="1" fill="#004eff"/><rect x="31" y="42" width="1" height="2" fill="#00048a"/><rect x="28" y="5" width="2" height="1" fill="#000484"/><rect x="55" y="6" width="1" height="1" fill="#0011e7"/><rect x="24" y="26" width="3" height="1" fill="#0026ff"/><rect x="80" y="41" width="1" height="1" fill="#000485"/><rect x="71" y="5" width="2" height="1" fill="#00048a"/><rect x="88" y="30" width="2" height="1" fill="#0055ff"/><rect x="57" y="48" width="3" height="1" fill="#000bbb"/><rect x="106" y="5" width="1" height="1" fill="#000695"/><rect x="31" y="15" width="1" height="1" fill="#0013fb"/><rect x="90" y="27" width="2" height="1" fill="#0010e1"/><rect x="84" y="0" width="2" height="2" fill="#0085ff"/><rect x="122" y="19" width="2" height="1" fill="#005dff"/><rect x="120" y="33" width="2" height="1" fill="#000483"/><rect x="52" y="31" width="2" height="1" fill="#000483"/><rect x="59" y="30" width="1" height="1" fill="#0078ff"/><rect x="94" y="22" width="2" height="1" fill="#002eff"/><rect x="78" y="20" width="3" height="1" fill="#000cc7"/><rect x="96" y="46" width="3" height="2" fill="#000cc6"/><rect x="53" y="26" width="1" height="1" fill="#000488"/><rect x="94" y="13" width="1" height="1" fill="#000483"/><rect x="53" y="4" width="2" height="2" fill="#000487"/><rect x="48" y="8" width="1" height="1" fill="#0007a0"/><rect x="77" y="9" width="1" height="1" fill="#0013fe"/><rect x="13" y="7" width="1" height="1" fill="#00048a"/><rect x="25" y="7" width="2" height="1" fill="#0017ff"/><rect x="43" y="2" width="3" height="1" fill="#000696"/><rect x="4" y="33" width="2" height="1" fill="#000485"/><rect x="30" y="47" width="1" height="2" fill="#000483"/><rect x="64" y="25" width="2" height="2" fill="#000ab6"/><rect x="4" y="11" width="3" height="1" fill="#000483"/><rect x="3" y="30" width="3" height="1" fill="#0013f8"/><rect x="15" y="14" width="2" height="1" fill="#000dcf"/><rect x="60" y="6" width="1" height="2" fill="#001cff"/><rect x="123" y="38" width="3" height="1" fill="#000486"/><rect x="61" y="28" width="2" height="2" fill="#0009ad"/><rect x="98" y="19" width="1" height="1" fill="#000cc4"/><rect x="119" y="31" width="2" height="1" fill="#000484"/><rect x="108" y="52" width="2" height="1" fill="#000694"/><rect x="39" y="49" width="1" height="1" fill="#000cc3"/><rect x="19" y="22" width="2" height="1" fill="#000484"/><rect x="78" y="7" width="1" height="1" fill="#000bc0"/><rect x="126" y="15" width="1" height="1" fill="#000cc7"/><rect x="91" y="2" width="2" height="1" fill="#0024ff"/><rect x="39" y="31" width="2" height="1" fill="#0013f9"/><rect x="119" y="37" width="1" height="1" fill="#00079f"/><rect x="32" y="44" width="2" height="1" fill="#000bc0"/><rect x="72" y="29" width="2" height="1" fill="#000590"/><rect x="126" y="19" width="1" height="1" fill="#000483"/><rect x="65" y="30" width="3" height="1" fill="#000fde"/><rect x="82" y="23" width="2" height="1" fill="#0013f9"/><rect x="65" y="0" width="1" height="1" fill="#0010e7"/><rect x="75" y="10" width="2" height="1" fill="#0055ff"/><rect x="18" y="42" width="1" height="2" fill="#000485"/><rect x="49" y="47" width="1" height="1" fill="#0007a1"/><rect x="122" y="16" width="2" height="2" fill="#000483"/><rect x="50" y="18" width="1" height="1" fill="#0023ff"/><rect x="115" y="41" width="2" height="1" fill="#000488"/><rect x="84" y="7" width="2" height="1" fill="#0065ff"/><rect x="108" y="24" width="1" height="2" fill="#0012f3"/><rect x="4" y="8" width="1" height="1" fill="#000485"/><rect x="92" y="31" width="1" height="1" fill="#0027ff"/><rect x="70" y="46" width="1" height="1" fill="#0017ff"/><rect x="38" y="37" width="1" height="1" fill="#000ab9"/><rect x="117" y="29" width="1" height="1" fill="#0009ae"/><rect x="93" y="4" width="1" height="2" fill="#000483"/><rect x="32" y="17" width="3" height="1" fill="#004aff"/><rect x="72" y="21" width="3" height="1" fill="#00079c"/><rect x="64" y="48" width="1" height="1" fill="#000dcd"/><rect x="122" y="22" width="1" height="1" fill="#000483"/><rect x="44" y="25" width="1" height="1" fill="#0008a8"/><rect x="98" y="41" width="2" height="1" fill="#0010e3"/><rect x="71" y="52" width="2" height="1" fill="#000486"/><rect x="40" y="49" width="3" height="1" fill="#0010e4"/><rect x="76" y="20" width="2" height="1" fill="#0011eb"/><rect x="107" y="35" width="2" height="1" fill="#000483"/><rect x="82" y="20" width="3" height="2" fill="#004dff"/><rect x="102" y="18" width="1" height="1" fill="#002dff"/><rect x="87" y="8" width="2" height="2" fill="#00079a"/><rect x="63" y="4" width="3" height="1" fill="#0010e1"/><rect x="59" y="18" width="1" height="1" fill="#000592"/><rect x="111" y="38" width="3" height="1" fill="#004fff"/><rect x="77" y="26" width="1" height="1" fill="#0076ff"/><rect x="53" y="40" width="1" height="1" fill="#000489"/><rect x="58" y="35" width="2" height="2" fill="#000695"/><rect x="47" y="25" width="2" height="1" fill="#000bbf"/><rect x="80" y="42" width="2" height="1" fill="#0009ae"/><rect x="104" y="12" width="3" height="2" fill="#0010e1"/><rect x="106" y="39" width="3" height="1" fill="#000484"/><rect x="50" y="34" width="1" height="2" fill="#000cc4"/><rect x="20" y="37" width="2" height="1" fill="#0013fc"/><rect x="49" y="26" width="2" height="1" fill="#000592"/><rect x="31" y="35" width="2" height="1" fill="#001fff"/><rect x="93" y="2" width="2" height="1" fill="#00079b"/><rect x="116" y="18" width="2" height="2" fill="#00058a"/><rect x="97" y="37" width="1" height="2" fill="#000bc0"/><rect x="109" y="48" width="1" height="1" fill="#0008a5"/><rect x="60" y="34" width="3" height="1" fill="#005eff"/><rect x="12" y="4" width="2" height="1" fill="#0008a4"/><rect x="34" y="34" width="1" height="2" fill="#000483"/><rect x="15" y="42" width="1" height="1" fill="#0013fd"/><rect x="57" y="5" width="2" height="1" fill="#000fdc"/><rect x="74" y="43" width="1" height="1" fill="#0008a2"/><rect x="61" y="39" width="3" height="2" fill="#00058f"/><rect x="126" y="46" width="1" height="1" fill="#0009ac"/><rect x="117" y="35" width="1" height="1" fill="#000cc5"/><rect x="50" y="30" width="2" height="1" fill="#000487"/><rect x="111" y="12" width="2" height="2" fill="#0007a1"/><rect x="53" y="52" width="2" height="1" fill="#0065ff"/><rect x="65" y="23" width="3" height="1" fill="#0009af"/><rect x="66" y="48" width="1" height="1" fill="#006cff"/><rect x="76" y="5" width="2" height="1" fill="#0079ff"/><rect x="124" y="52" width="1" height="1" fill="#000fde"/><rect x="20" y="29" width="2" height="2" fill="#0014ff"/><rect x="111" y="7" width="3" height="1" fill="#000483"/><rect x="72" y="19" width="2" height="1" fill="#000488"/><rect x="37" y="28" width="1" height="1" fill="#0012f5"/><rect x="92" y="50" width="2" height="1" fill="#003cff"/><rect x="3" y="23" width="2" height="2" fill="#000693"/><rect x="83" y="29" width="2" height="1" fill="#00048a"/><rect x="80" y="37" width="2" height="1" fill="#000591"/><rect x="80" y="23" width="1" height="2" fill="#0007a0"/><rect x="92" y="23" width="3" height="2" fill="#000483"/><rect x="104" y="46" width="2" height="1" fill="#004dff"/><rect x="0" y="42" width="1" height="1" fill="#000484"/><rect x="2" y="12" width="1" height="1" fill="#000698"/><rect x="45" y="5" width="1" height="2" fill="#0010e0"/><rect x="86" y="14" width="2" height="1" fill="#00058c"/><rect x="52" y="3" width="1" height="1" fill="#00058c"/><rect x="55" y="25" width="2" height="1" fill="#000488"/><rect x="102" y="25" width="2" height="1" fill="#001eff"/><rect x="50" y="46" width="2" height="1" fill="#000489"/><rect x="102" y="6" width="3" height="2" fill="#0009af"/><rect x="118" y="2" width="1" height="1" fill="#0009af"/><rect x="83" y="15" width="1" height="1" fill="#000ed2"/><rect x="44" y="0" width="3" height="1" fill="#006fff"/><rect x="25" y="18" width="1" height="1" fill="#00058d"/><rect x="76" y="33" width="3" height="2" fill="#000fde"/><rect x="80" y="27" width="1" height="1" fill="#000483"/><rect x="49" y="28" width="1" height="1" fill="#0076ff"/><rect x="107" y="51" width="1" height="1" fill="#0007a0"/><rect x="34" y="9" width="3" height="1" fill="#002dff"/><rect x="68" y="24" width="1" height="1" fill="#000486"/><rect x="42" y="25" width="3" height="1" fill="#0057ff"/><rect x="15" y="45" width="2" height="2" fill="#0013fd"/><rect x="31" y="15" width="2" height="1" fill="#000488"/><rect x="126" y="52" width="2" height="1" fill="#0084ff"/><rect x="38" y="45" width="2" height="1" fill="#0013fa"/><rect x="54" y="18" width="2" height="1" fill="#0010e0"/><rect x="85" y="44" width="2" height="1" fill="#0013fe"/><rect x="72" y="30" width="1" height="2" fill="#007aff"/><rect x="91" y="5" width="3" height="2" fill="#0022ff"/><rect x="15" y="16" width="3" height="1" fill="#000ab6"/><rect x="15" y="20" width="2" height="1" fill="#000485"/><rect x="75" y="46" width="3" height="1" fill="#0008a3"/><rect x="19" y="10" width="1" height="2" fill="#0052ff"/><rect x="73" y="23" width="3" height="1" fill="#000fda"/><rect x="118" y="27" width="2" height="1" fill="#000dcc"/><rect x="58" y="10" width="2" height="1" fill="#0010e6"/><rect x="43" y="27" width="3" height="2" fill="#000ed5"/><rect x="99" y="41" width="1" height="1" fill="#001eff"/><rect x="62" y="48" width="3" height="1" fill="#002bff"/><rect x="67" y="13" width="1" height="1" fill="#0010e5"/><rect x="38" y="34" width="1" height="1" fill="#000483"/><rect x="36" y="5" width="2" height="2" fill="#000ed7"/><rect x="104" y="45" width="3" height="1" fill="#000486"/><rect x="67" y="13" width="1" height="1" fill="#0008a7"/><rect x="87" y="34" width="3" height="1" fill="#000488"/><rect x="73" y="3" width="1" height="1" fill="#000bbf"/><rect x="42" y="40" width="2" height="1" fill="#000dcb"/><rect x="23" y="37" width="1" height="1" fill="#0070ff"/><rect x="108" y="22" width="1" height="1" fill="#0055ff"/><rect x="76" y="13" width="3" height="2" fill="#000bbf"/><rect x="86" y="14" width="2" height="1" fill="#000dca"/><rect x="36" y="21" width="3" height="1" fill="#000483"/><rect x="101" y="43" width="2" height="1" fill="#0015ff"/><rect x="3" y="50" width="2" height="1" fill="#0027ff"/><rect x="102" y="0" width="3" height="1" fill="#000483"/><rect x="103" y="44" width="1" height="1" fill="#0009ab"/><rect x="115" y="37" width="2" height="1" fill="#00048a"/><rect x="42" y="7" width="1" height="1" fill="#00058b"/><rect x="31" y="49" width="2" height="1" fill="#000ab9"/><rect x="113" y="38" width="3" height="1" fill="#000486"/><rect x="98" y="0" width="2" height="1" fill="#000ed0"/><rect x="30" y="22" width="2" height="1" fill="#006cff"/><rect x="119" y="16" width="3" height="1" fill="#0022ff"/><rect x="72" y="35" width="2" height="1" fill="#000488"/><rect x="50" y="35" width="1" height="1" fill="#000fdd"/><rect x="81" y="19" width="1" height="2" fill="#0013fe"/><rect x="104" y="17" width="1" height="2" fill="#00079c"/><rect x="55" y="52" width="1" height="1" fill="#0060ff"/><rect x="20" y="22" width="2" height="2" fill="#0008a6"/><rect x="109" y="0" width="2" height="1" fill="#0009b1"/><rect x="54" y="5" width="2" height="1" fill="#006fff"/><rect x="37" y="14" width="1" height="1" fill="#000ab6"/><rect x="30" y="36" width="2" height="1" fill="#00058c"/><rect x="124" y="29" width="3" height="1" fill="#000694"/><rect x="55" y="13" width="1" height="1" fill="#007fff"/><rect x="1" y="21" width="2" height="2" fill="#000484"/><rect x="107" y="29" width="1" height="1" fill="#001bff"/><rect x="24" y="28" width="1" height="2" fill="#000695"/><rect x="114" y="12" width="1" height="1" fill="#002dff"/><rect x="67" y="16" width="3" height="2" fill="#0009ad"/><rect x="90" y="51" width="2" height="1" fill="#001aff"/><rect x="6" y="14" width="2" height="1" fill="#000cc3"/><rect x="121" y="30" width="2" height="1" fill="#00058b"/><rect x="93" y="29" width="3" height="1" fill="#0084ff"/><rect x="22" y="28" width="2" height="1" fill="#000484"/><rect x="57" y="19" width="2" height="1" fill="#0009ac"/><rect x="12" y="33" width="3" height="1" fill="#000484"/><rect x="123" y="20" width="2" height="1" fill="#00058d"/><rect x="69" y="6" width="1" height="1" fill="#000cc8"/><rect x="31" y="19" width="2" height="2" fill="#0011ec"/><rect x="73" y="20" width="2" height="1" fill="#000ed0"/><rect x="67" y="32" width="2" height="1" fill="#0032ff"/><rect x="14" y="46" width="1" height="1" fill="#000696"/><rect x="70" y="17" width="1" height="2" fill="#00058d"/><rect x="10" y="37" width="1" height="1" fill="#0018ff"/><rect x="79" y="7" width="2" height="1" fill="#0009aa"/><rect x="81" y="43" width="1" height="1" fill="#0036ff"/><rect x="76" y="32" width="2" height="1" fill="#0069ff"/><rect x="111" y="9" width="2" height="2" fill="#00079d"/><rect x="119" y="12" width="2" height="1" fill="#000bc0"/><rect x="53" y="6" width="2" height="2" fill="#000483"/><rect x="86" y="31" width="2" height="1" fill="#000483"/><rect x="126" y="1" width="2" height="1" fill="#000bbb"/><rect x="107" y="32" width="2" height="1" fill="#0080ff"/><rect x="45" y="13" width="3" height="1" fill="#000483"/><rect x="88" y="36" width="3" height="1" fill="#000696"/><rect x="54" y="25" width="2" height="1" fill="#0008a5"/><rect x="103" y="15" width="1" height="1" fill="#000fdc"/><rect x="0" y="18" width="2" height="2" fill="#0009b1"/><rect x="60" y="7" width="2" height="1" fill="#000cc2"/><rect x="65" y="14" width="2" height="1" fill="#0028ff"/><rect x="82" y="25" width="3" height="1" fill="#000ed2"/><rect x="5" y="35" width="2" height="1" fill="#000486"/><rect x="64" y="52" width="1" height="1" fill="#000483"/><rect x="84" y="42" width="1" height="1" fill="#000483"/><rect x="68" y="41" width="2" height="1" fill="#000693"/><rect x="12" y="16" width="2" height="1" fill="#00048a"/><rect x="119" y="7" width="1" height="1" fill="#000483"/><rect x="62" y="9" width="2" height="1" fill="#00079e"/><rect x="88" y="6" width="1" height="2" fill="#000698"/><rect x="92" y="45" width="2" height="1" fill="#0082ff"/><rect x="59" y="45" width="1" height="1" fill="#0009af"/><rect x="111" y="47" width="1" height="2" fill="#0008a6"/><rect x="71" y="27" width="1" height="1" fill="#0011ec"/><rect x="10" y="40" width="2" height="1" fill="#004cff"/><rect x="79" y="30" width="2" height="1" fill="#0008a5"/><rect x="31" y="43" width="1" height="1" fill="#000488"/><rect x="4" y="33" width="3" height="1" fill="#0032ff"/><rect x="15" y="34" width="2" height="1" fill="#0052ff"/><rect x="1" y="49" width="2" height="1" fill="#000ab3"/><rect x="83" y="24" width="2" height="1" fill="#000485"/><rect x="112" y="27" width="1" height="2" fill="#000dce"/><rect x="30" y="17" width="1" height="1" fill="#0080ff"/><rect x="37" y="9" width="1" height="1" fill="#000483"/><rect x="19" y="29" width="3" height="2" fill="#000485"/><rect x="94" y="46" width="1" height="1" fill="#000cc7"/><rect x="108" y="37" width="1" height="2" fill="#000bba"/><rect x="19" y="14" width="2" height="1" fill="#0021ff"/><rect x="38" y="5" width="2" height="1" fill="#0010e1"/><rect x="16" y="16" width="1" height="1" fill="#00079f"/><rect x="63" y="28" width="2" height="1" fill="#000699"/><rect x="111" y="5" width="2" height="1" fill="#00069a"/><rect x="101" y="34" width="2" height="2" fill="#000dcd"/><rect x="101" y="40" width="2" height="1" fill="#0024ff"/><rect x="79" y="52" width="2" height="1" fill="#000fdd"/><rect x="115" y="16" width="1" height="1" fill="#005fff"/><rect x="62" y="52" width="3" height="1" fill="#000485"/><rect x="46" y="35" width="3" height="1" fill="#000cc5"/><rect x="114" y="21" width="1" height="1" fill="#000484"/><rect x="92" y="12" width="1" height="2" fill="#000dce"/><rect x="114" y="4" width="3" height="1" fill="#000cc3"/><rect x="52" y="18" width="3" height="1" fill="#000bbe"/><rect x="39" y="30" width="2" height="2" fill="#0008a9"/><rect x="9" y="7" width="2" height="1" fill="#000ed5"/><rect x="7" y="34" width="1" height="2" fill="#000487"/><rect x="46" y="12" width="1" height="1" fill="#000483"/><rect x="26" y="9" width="2" height="1" fill="#000ab5"/><rect x="65" y="32" width="3" height="2" fill="#0017ff"/><rect x="56" y="32" width="1" height="2" fill="#0059ff"/><rect x="27" y="28" width="3" height="2" fill="#000483"/><rect x="69" y="3" width="1" height="2" fill="#0008a3"/><rect x="2" y="34" width="1" height="2" fill="#000cc5"/><rect x="124" y="23" width="3" height="2" fill="#000fdf"/><rect x="93" y="19" width="2" height="1" fill="#000485"/><rect x="22" y="4" width="2" height="1" fill="#000483"/><rect x="57" y="40" width="2" height="1" fill="#0010e7"/><rect x="68" y="10" width="1" height="1" fill="#0008a5"/><rect x="2" y="0" width="2" height="1" fill="#000484"/><rect x="14" y="17" width="2" height="1" fill="#000ab7"/><rect x="33" y="9" width="2" height="1" fill="#006fff"/><rect x="123" y="44" width="2" height="2" fill="#000483"/><rect x="61" y="6" width="1" height="1" fill="#000483"/><rect x="55" y="26" width="2" height="1" fill="#00058c"/><rect x="14" y="18" width="3" height="2" fill="#000591"/><rect x="49" y="46" width="2" height="2" fill="#000489"/><rect x="92" y="5" width="1" height="2" fill="#00079a"/><rect x="0" y="13" width="3" height="2" fill="#0012f5"/><rect x="78" y="28" width="2" height="1" fill="#00048a"/><rect x="69" y="44" width="3" height="1" fill="#000694"/><rect x="45" y="29" width="1" height="2" fill="#0056ff"/><rect x="60" y="23" width="2" height="1" fill="#000487"/><rect x="114" y="0" width="2" height="1" fill="#0010e0"/><rect x="117" y="48" width="2" height="1" fill="#000483"/><rect x="114" y="1" width="2" height="2" fill="#0011ee"/><rect x="113" y="6" width="3" height="1" fill="#00058b"/><rect x="36" y="3" width="1" height="2" fill="#000485"/><rect x="99" y="35" width="1" height="1" fill="#0013fd"/><rect x="34" y="43" width="1" height="1" fill="#0009aa"/><rect x="3" y="47" width="2" height="2" fill="#000486"/><rect x="69" y="8" width="1" height="2" fill="#000487"/><rect x="42" y="8" width="2" height="1" fill="#000ed2"/><rect x="68" y="16" width="1" height="1" fill="#0010e4"/><rect x="109" y="20" width="3" height="1" fill="#000ed2"/><rect x="48" y="5" width="2" height="1" fill="#000483"/><rect x="96" y="5" width="1" height="1" fill="#000ed3"/><rect x="13" y="17" width="2" height="1" fill="#000484"/><rect x="24" y="6" width="1" height="1" fill="#00058c"/><rect x="39" y="0" width="3" height="2" fill="#000697"/><rect x="68" y="32" width="1" height="1" fill="#00058e"/><rect x="63" y="24" width="2" height="2" fill="#000cc1"/><rect x="101" y="7" width="2" height="1" fill="#0008a3"/><rect x="8" y="30" width="3" height="1" fill="#000488"/><rect x="29" y="41" width="3" height="1" fill="#000bbf"/><rect x="19" y="33" width="2" height="1" fill="#002aff"/><rect x="109" y="51" width="1" height="2" fill="#000692"/><rect x="119" y="29" width="2" height="1" fill="#000693"/><rect x="16" y="27" width="2" height="2" fill="#001fff"/><rect x="87" y="15" width="3" height="1" fill="#0011ea"/><rect x="73" y="45" width="1" height="1" fill="#0007a1"/><rect x="91" y="17" width="2" height="1" fill="#000590"/><rect x="64" y="38" width="2" height="1" fill="#000486"/><rect x="17" y="46" width="1" height="1" fill="#0010e6"/><rect x="121" y="16" width="3" height="1" fill="#0024ff"/><rect x="65" y="21" width="1" height="2" fill="#000696"/><rect x="75" y="17" width="2" height="1" fill="#000483"/><rect x="106" y="9" width="1" height="1" fill="#0009ad"/><rect x="22" y="22" width="1" height="1" fill="#0011ec"/><rect x="6" y="21" width="1" height="1" fill="#000485"/><rect x="77" y="32" width="2" height="1" fill="#00079d"/><rect x="69" y="19" width="2" height="1" fill="#0010e6"/><rect x="55" y="0" width="1" height="2" fill="#000484"/><rect x="93" y="51" width="3" height="1" fill="#000485"/><rect x="82" y="44" width="1" height="1" fill="#004cff"/><rect x="93" y="52" width="2" height="2" fill="#000485"/><rect x="76" y="12" width="1" height="1" fill="#000486"/><rect x="66" y="52" width="2" height="2" fill="#000ab7"/><rect x="16" y="34" width="3" height="1" fill="#002bff"/><rect x="17" y="52" width="2" height="1" fill="#000cc3"/><rect x="91" y="6" width="1" height="1" fill="#0011e8"/><rect x="73" y="16" width="3" height="1" fill="#00079e"/><rect x="7" y="5" width="3" height="2" fill="#000699"/><rect x="9" y="36" width="2" height="2" fill="#000590"/><rect x="55" y="35" width="1" height="1" fill="#000485"/><rect x="110" y="47" width="1" height="1" fill="#0021ff"/><rect x="11" y="40" width="2" height="1" fill="#000696"/><rect x="27" y="28" width="2" height="1" fill="#0009ab"/><rect x="27" y="46" width="2" height="1" fill="#0011ed"/><rect x="73" y="10" width="1" height="2" fill="#0040ff"/><rect x="106" y="45" width="1" height="2" fill="#000694"/><rect x="62" y="5" width="3" height="1" fill="#000693"/><rect x="71" y="31" width="3" height="1" fill="#0046ff"/><rect x="32" y="50" width="1" height="1" fill="#000483"/><rect x="97" y="2" width="2" height="2" fill="#000ed4"/><rect x="120" y="36" width="1" height="1" fill="#0007a0"/><rect x="5" y="24" width="2" height="2" fill="#0010e5"/><rect x="71" y="14" width="1" height="1" fill="#000483"/><rect x="80" y="30" width="1" height="1" fill="#00079f"/><rect x="46" y="29" width="2" height="1" fill="#00079d"/><rect x="79" y="4" width="2" height="2" fill="#0054ff"/><rect x="80" y="28" width="3" height="1" fill="#000483"/><rect x="28" y="47" width="3" height="1" fill="#000483"/><rect x="73" y="49" width="2" height="1" fill="#000484"/><rect x="90" y="13" width="1" height="1" fill="#000ed4"/><rect x="69" y="31" width="1" height="2" fill="#000487"/><rect x="53" y="52" width="1" height="1" fill="#000dcf"/><rect x="70" y="44" width="1" height="2" fill="#00058d"/><rect x="47" y="14" width="2" height="1" fill="#00079a"/><rect x="88" y="6" width="3" height="1" fill="#000fdb"/><rect x="62" y="14" width="1" height="1" fill="#0023ff"/><rect x="51" y="0" width="2" height="2" fill="#000483"/><rect x="106" y="15" width="3" height="2" fill="#000ed2"/><rect x="42" y="38" width="1" height="1" fill="#0050ff"/><rect x="15" y="2" width="1" height="2" fill="#0055ff"/><rect x="13" y="20" width="2" height="1" fill="#0008a5"/><rect x="104" y="14" width="1" height="1" fill="#0025ff"/><rect x="1" y="37" width="2" height="1" fill="#0083ff"/><rect x="89" y="45" width="3" height="2" fill="#00069a"/><rect x="33" y="44" width="1" height="1" fill="#000483"/><rect x="45" y="15" width="2" height="1" fill="#000483"/><rect x="67" y="26" width="1" height="1" fill="#000fdf"/><rect x="62" y="18" width="1" height="1" fill="#000695"/><rect x="23" y="2" width="1" height="1" fill="#006eff"/><rect x="11" y="46" width="1" height="1" fill="#0013f7"/><rect x="60" y="21" width="2" height="1" fill="#003bff"/><rect x="14" y="51" width="2" height="1" fill="#000483"/><rect x="95" y="25" width="1" height="2" fill="#000487"/><rect x="31" y="51" width="2" height="1" fill="#00079b"/><rect x="91" y="6" width="1" height="1" fill="#0009aa"/><rect x="122" y="19" width="1" height="2" fill="#000dc9"/><rect x="65" y="50" width="2" height="2" fill="#000486"/><rect x="36" y="3" width="1" height="1" fill="#000bbb"/><rect x="117" y="38" width="1" height="1" fill="#00079f"/><rect x="102" y="29" width="2" height="1" fill="#0077ff"/><rect x="48" y="34" width="2" height="1" fill="#0052ff"/><rect x="17" y="20" width="2" height="1" fill="#000483"/><rect x="38" y="49" width="2" height="1" fill="#000fd9"/><rect x="54" y="3" width="2" height="2" fill="#0011eb"/><rect x="108" y="8" width="1" height="1" fill="#0054ff"/><rect x="35" y="27" width="1" height="1" fill="#000fd9"/><rect x="14" y="1" width="3" height="1" fill="#007cff"/><rect x="94" y="25" width="3" height="2" fill="#000489"/><rect x="81" y="46" width="2" height="1" fill="#0007a0"/><rect x="103" y="20" width="1" height="2" fill="#0009b0"/><rect x="108" y="51" width="3" height="2" fill="#000694"/><rect x="60" y="45" width="2" height="1" fill="#000484"/><rect x="2" y="5" width="1" height="1" fill="#000483"/><rect x="46" y="23" width="1" height="2" fill="#000483"/><rect x="9" y="19" width="2" height="1" fill="#00079e"/><rect x="96" y="31" width="1" height="1" fill="#000483"/><rect x="47" y="1" width="1" height="1" fill="#00069a"/><rect x="21" y="51" width="1" height="1" fill="#000bbf"/><rect x="8" y="24" width="1" height="1" fill="#000485"/><rect x="46" y="44" width="1" height="1" fill="#000cc7"/><rect x="68" y="28" width="1" height="1" fill="#0012f5"/><rect x="74" y="20" width="1" height="1" fill="#000ab9"/><rect x="90" y="52" width="1" height="1" fill="#000fdb"/><rect x="121" y="47" width="2" height="1" fill="#000488"/><rect x="80" y="32" width="2" height="1" fill="#0033ff"/><rect x="110" y="18" width="1" height="2" fill="#0008a7"/><rect x="117" y="44" width="2" height="2" fill="#000485"/><rect x="108" y="35" width="2" height="1" fill="#0009af"/><rect x="35" y="23" width="1" height="1" fill="#000698"/><rect x="100" y="31" width="2" height="1" fill="#00058a"/><rect x="83" y="3" width="2" height="1" fill="#005dff"/><rect x="126" y="43" width="2" height="2" fill="#0008a7"/><rect x="3" y="10" width="1" height="1" fill="#000483"/><rect x="39" y="11" width="2" height="1" fill="#000ab6"/><rect x="37" y="17" width="2" height="1" fill="#0012ef"/><rect x="0" y="28" width="3" height="1" fill="#0047ff"/><rect x="49" y="41" width="1" height="1" fill="#0009b0"/><rect x="87" y="7" width="1" height="2" fill="#00058b"/><rect x="61" y="42" width="1" height="2" fill="#000483"/><rect x="111" y="7" width="3" height="1" fill="#0029ff"/><rect x="94" y="21" width="2" height="1" fill="#0012ef"/><rect x="44" y="16" width="2" height="1" fill="#000488"/><rect x="0" y="14" width="1" height="1" fill="#0031ff"/><rect x="53" y="31" width="2" height="1" fill="#00058a"/><rect x="73" y="7" width="1" height="1" fill="#000591"/><rect x="23" y="45" width="2" height="1" fill="#0007a0"/><rect x="89" y="31" width="1" height="1" fill="#000694"/><rect x="53" y="48" width="2" height="2" fill="#00048a"/><rect x="8" y="25" width="1" height="1" fill="#00058b"/><rect x="54" y="43" width="1" height="2" fill="#000486"/><rect x="102" y="30" width="3" height="2" fill="#0009ad"/><rect x="102" y="28" width="2" height="1" fill="#000ab2"/><rect x="37" y="41" width="1" height="1" fill="#000486"/><rect x="83" y="21" width="2" height="2" fill="#0018ff"/><rect x="1" y="7" width="2" height="1" fill="#0009ae"/><rect x="100" y="25" width="1" height="1" fill="#000dce"/><rect x="100" y="50" width="2" height="1" fill="#00058f"/><rect x="79" y="8" width="2" height="1" fill="#000dc9"/><rect x="52" y="6" width="3" height="2" fill="#0011e8"/><rect x="13" y="22" width="1" height="1" fill="#003cff"/><rect x="92" y="26" width="2" height="1" fill="#000483"/><rect x="54" y="7" width="2" height="2" fill="#000694"/><rect x="86" y="31" width="1" height="1" fill="#000483"/><rect x="63" y="15" width="2" height="2" fill="#000489"/><rect x="82" y="50" width="3" height="2" fill="#0075ff"/><rect x="96" y="7" width="2" height="1" fill="#000698"/><rect x="43" y="39" width="2" height="1" fill="#0018ff"/><rect x="95" y="52" width="2" height="1" fill="#000486"/><rect x="63" y="30" width="3" height="1" fill="#007aff"/><rect x="92" y="4" width="2" height="1" fill="#000484"/><rect x="25" y="29" width="1" height="1" fill="#0065ff"/><rect x="52" y="1" width="1" height="1" fill="#007fff"/><rect x="43" y="18" width="1" height="1" fill="#0008a5"/><rect x="13" y="41" width="2" height="1" fill="#000590"/><rect x="119" y="32" width="1" height="1" fill="#00048a"/><rect x="123" y="48" width="1" height="1" fill="#002aff"/><rect x="120" y="8" width="1" height="1" fill="#0007a0"/><rect x="26" y="9" width="1" height="1" fill="#00058d"/><rect x="66" y="25" width="2" height="2" fill="#000cc4"/><rect x="97" y="8" width="1" height="1" fill="#003aff"/><rect x="24" y="14" width="2" height="1" fill="#000ab1"/><rect x="15" y="33" width="1" height="1" fill="#00048a"/><rect x="37" y="43" width="2" height="1" fill="#0042ff"/><rect x="27" y="47" width="1" height="1" fill="#000484"/><rect x="102" y="38" width="2" height="1" fill="#000486"/><rect x="42" y="5" width="2" height="1" fill="#000483"/><rect x="47" y="49" width="1" height="1" fill="#000fdc"/><rect x="102" y="31" width="3" height="1" fill="#0078ff"/><rect x="89" y="39" width="2" height="1" fill="#000bbc"/><rect x="40" y="9" width="2" height="1" fill="#00058c"/><rect x="10" y="48" width="1" height="1" fill="#000dcd"/><rect x="39" y="3" width="2" height="1" fill="#0027ff"/><rect x="63" y="31" width="2" height="1" fill="#000590"/><rect x="94" y="40" width="3" height="2" fill="#00079d"/><rect x="58" y="47" width="3" height="1" fill="#000dc9"/><rect x="87" y="2" width="1" height="1" fill="#0009ae"/><rect x="73" y="8" width="2" height="1" fill="#00058a"/><rect x="95" y="21" width="1" height="1" fill="#005aff"/><rect x="77" y="48" width="1" height="1" fill="#0009b1"/><rect x="79" y="20" width="1" height="1" fill="#0029ff"/><rect x="125" y="48" width="2" height="1" fill="#0056ff"/><rect x="86" y="12" width="3" height="1" fill="#0009ad"/><rect x="52" y="25" width="2" height="1" fill="#0080ff"/><rect x="98" y="4" width="1" height="1" fill="#000484"/><rect x="53" y="24" width="1" height="2" fill="#000483"/><rect x="126" y="40" width="2" height="1" fill="#000693"/><rect x="25" y="15" width="3" height="1" fill="#0033ff"/><rect x="31" y="8" width="2" height="1" fill="#007dff"/><rect x="23" y="4" width="1" height="2" fill="#004dff"/><rect x="86" y="39" width="1" height="1" fill="#0011eb"/><rect x="94" y="1" width="1" height="1" fill="#000fda"/><rect x="39" y="25" width="2" height="1" fill="#000487"/><rect x="51" y="19" width="2" height="1" fill="#000485"/><rect x="36" y="8" width="1" height="1" fill="#000bb9"/><rect x="109" y="22" width="2" height="2" fill="#0068ff"/><rect x="116" y="39" width="3" height="1" fill="#000dc9"/><rect x="31" y="3" width="3" height="1" fill="#000695"/><rect x="4" y="15" width="3" height="2" fill="#0008a2"/><rect x="26" y="19" width="1" height="2" fill="#000bbd"/><rect x="10" y="16" width="3" height="1" fill="#0008a2"/><rect x="42" y="3" width="1" height="1" fill="#0012f0"/><rect x="18" y="25" width="2" height="1" fill="#0010e6"/><rect x="81" y="25" width="1" height="1" fill="#000488"/><rect x="86" y="21" width="2" height="2" fill="#000bb9"/><rect x="0" y="16" width="2" height="1" fill="#000487"/><rect x="108" y="23" width="3" height="1" fill="#000486"/><rect x="84" y="45" width="1" height="1" fill="#0036ff"/><rect x="47" y="25" width="1" height="1" fill="#000dcf"/><rect x="111" y="22" width="3" height="1" fill="#000cc3"/><rect x="103" y="47" width="2" height="2" fill="#0078ff"/><rect x="101" y="47" width="2" height="1" fill="#0012ef"/><rect x="96" y="39" width="3" height="1" fill="#000696"/><rect x="27" y="0" width="2" height="1" fill="#000483"/><rect x="2" y="44" width="1" height="2" fill="#000698"/><rect x="16" y="9" width="3" height="1" fill="#000483"/><rect x="102" y="32" width="2" height="2" fill="#000dcb"/><rect x="0" y="31" width="1" height="1" fill="#0008a6"/><rect x="97" y="12" width="2" height="1" fill="#005eff"/><rect x="82" y="40" width="1" height="1" fill="#0017ff"/><rect x="3" y="17" width="2" height="1" fill="#00079c"/><rect x="53" y="48" width="1" height="2" fill="#000485"/><rect x="24" y="45" width="2" height="1" fill="#000ab7"/><rect x="0" y="32" width="3" height="1" fill="#00058e"/><rect x="78" y="1" width="2" height="1" fill="#000487"/><rect x="43" y="16" width="1" height="1" fill="#0054ff"/><rect x="69" y="15" width="1" height="1" fill="#000fdc"/><rect x="25" y="7" width="3" height="1" fill="#000dcd"/><rect x="82" y="38" width="2" height="2" fill="#000bbe"/><rect x="10" y="9" width="1" height="2" fill="#005cff"/><rect x="54" y="38" width="2" height="1" fill="#001dff"/><rect x="111" y="39" width="1" height="2" fill="#000487"/><rect x="59" y="14" width="1" height="1" fill="#00058a"/><rect x="46" y="19" width="2" height="2" fill="#00058c"/><rect x="3" y="12" width="1" height="1" fill="#000ed4"/><rect x="85" y="49" width="1" height="2" fill="#000ab5"/><rect x="36" y="21" width="3" height="1" fill="#000485"/><rect x="60" y="21" width="2" height="1" fill="#000483"/><rect x="70" y="18" width="3" height="1" fill="#0021ff"/><rect x="91" y="26" width="2" height="1" fill="#000bb9"/><rect x="112" y="25" width="1" height="1" fill="#000ab2"/><rect x="64" y="31" width="1" height="1" fill="#000483"/><rect x="116" y="36" width="3" height="1" fill="#000484"/><rect x="24" y="13" width="1" height="2" fill="#0009b1"/><rect x="37" y="22" width="1" height="1" fill="#000cc7"/><rect x="10" y="14" width="2" height="1" fill="#0010e4"/><rect x="11" y="17" width="2" height="1" fill="#004eff"/><rect x="67" y="31" width="1" height="1" fill="#0009ae"/><rect x="71" y="31" width="1" height="1" fill="#0008a8"/><rect x="103" y="22" width="2" height="2" fill="#0010e1"/><rect x="38" y="44" width="2" height="2" fill="#000bc0"/><rect x="23" y="47" width="2" height="2" fill="#00058d"/><rect x="59" y="45" width="2" height="2" fill="#000483"/><rect x="57" y="50" width="1" height="1" fill="#004bff"/><rect x="83" y="3" width="2" height="2" fill="#000485"/><rect x="68" y="41" width="1" height="1" fill="#0013f8"/><rect x="16" y="39" width="2" height="1" fill="#0008a9"/><rect x="7" y="51" width="2" height="1" fill="#0019ff"/><rect x="31" y="32" width="3" height="1" fill="#0009ad"/><rect x="56" y="22" width="3" height="1" fill="#000483"/><rect x="37" y="9" width="1" height="1" fill="#0013f7"/><rect x="64" y="29" width="3" height="1" fill="#000cc3"/><rect x="25" y="36" width="2" height="2" fill="#00058a"/><rect x="62" y="6" width="2" height="1" fill="#000698"/><rect x="44" y="12" width="2" height="1" fill="#0068ff"/><rect x="9" y="50" width="2" height="1" fill="#0012f2"/><rect x="32" y="46" width="1" height="1" fill="#00079f"/><rect x="89" y="48" width="1" height="2" fill="#000488"/><rect x="61" y="2" width="1" height="1" fill="#000ed7"/><rect x="94" y="47" width="1" height="1" fill="#000483"/><rect x="85" y="50" width="1" height="1" fill="#000483"/><rect x="113" y="14" width="2" height="1" fill="#0053ff"/><rect x="37" y="2" width="1" height="1" fill="#0008a6"/><rect x="45" y="39" width="3" height="1" fill="#004dff"/><rect x="125" y="46" width="2" height="2" fill="#000698"/><rect x="112" y="38" width="1" height="1" fill="#000ed3"/><rect x="33" y="19" width="1" height="1" fill="#005bff"/><rect x="54" y="24" width="2" height="1" fill="#000dca"/><rect x="71" y="18" width="1" height="2" fill="#000484"/><rect x="65" y="50" width="2" height="1" fill="#0010e5"/><rect x="116" y="36" width="2" height="1" fill="#0013f9"/><rect x="52" y="31" width="3" height="1" fill="#000ed7"/><rect x="108" y="31" width="2" height="1" fill="#0009ac"/><rect x="3" y="41" width="1" height="1" fill="#0047ff"/><rect x="68" y="9" width="2" height="1" fill="#0012f0"/><rect x="26" y="42" width="1" height="1" fill="#0050ff"/><rect x="4" y="32" width="2" height="1" fill="#000692"/><rect x="94" y="20" width="3" height="1" fill="#0008a5"/><rect x="9" y="9" width="2" height="1" fill="#0010e7"/><rect x="68" y="13" width="1" height="1" fill="#000fda"/><rect x="99" y="51" width="1" height="1" fill="#0042ff"/><rect x="94" y="38" width="2" height="1" fill="#000590"/><rect x="10" y="20" width="3" height="1" fill="#0010e1"/><rect x="91" y="42" width="2" height="2" fill="#00058d"/><rect x="16" y="11" width="2" height="1" fill="#000694"/><rect x="33" y="32" width="2" height="2" fill="#000dcd"/><rect x="99" y="23" width="3" height="1" fill="#000695"/><rect x="21" y="50" width="1" height="1" fill="#0062ff"/><rect x="96" y="22" width="1" height="1" fill="#005dff"/><rect x="58" y="37" width="1" height="1" fill="#0013fe"/><rect x="51" y="23" width="2" height="2" fill="#006dff"/><rect x="92" y="15" width="3" height="2" fill="#000483"/><rect x="95" y="20" width="1" height="1" fill="#0029ff"/><rect x="38" y="16" width="1" height="1" fill="#000488"/><rect x="18" y="5" width="2" height="1" fill="#00058f"/><rect x="44" y="37" width="2" height="1" fill="#000ed6"/><rect x="116" y="6" width="2" height="1" fill="#000fdf"/><rect x="108" y="21" width="3" height="1" fill="#000483"/><rect x="61" y="22" width="1" height="2" fill="#0038ff"/><rect x="5" y="31" width="3" height="2" fill="#0008a4"/><rect x="54" y="5" width="2" height="1" fill="#002cff"/><rect x="48" y="10" width="2" height="1" fill="#00058d"/><rect x="94" y="48" width="3" height="2" fill="#000dcd"/><rect x="123" y="32" width="2" height="1" fill="#000484"/><rect x="35" y="0" width="2" height="2" fill="#0009af"/><rect x="69" y="31" width="3" height="1" fill="#0046ff"/><rect x="56" y="6" width="2" height="1" fill="#00058f"/><rect x="113" y="7" width="3" height="1" fill="#000483"/><rect x="62" y="46" width="3" height="1" fill="#001cff"/><rect x="65" y="26" width="3" height="1" fill="#0011e9"/><rect x="59" y="31" width="2" height="1" fill="#001eff"/><rect x="123" y="25" width="2" height="2" fill="#00048a"/><rect x="100" y="30" width="2" height="1" fill="#000fdf"/><rect x="39" y="4" width="2" height="1" fill="#002eff"/><rect x="8" y="47" width="3" height="1" fill="#000591"/><rect x="65" y="3" width="2" height="1" fill="#000483"/><rect x="105" y="18" width="3" height="1" fill="#000696"/><rect x="60" y="45" width="3" height="2" fill="#000483"/><rect x="13" y="50" width="3" height="1" fill="#000488"/><rect x="109" y="49" width="1" height="1" fill="#0011e8"/><rect x="20" y="14" width="1" height="1" fill="#000483"/><rect x="77" y="23" width="2" height="1" fill="#000483"/><rect x="117" y="25" width="1" height="1" fill="#000483"/><rect x="79" y="25" width="3" height="2" fill="#000486"/><rect x="116" y="51" width="2" height="2" fill="#0043ff"/><rect x="72" y="51" width="2" height="1" fill="#000483"/><rect x="88" y="2" width="1" height="1" fill="#0010e6"/><rect x="76" y="17" width="2" height="1" fill="#000485"/><rect x="124" y="35" width="1" height="1" fill="#007aff"/><rect x="69" y="8" width="2" height="2" fill="#0009ae"/><rect x="49" y="8" width="1" height="1" fill="#0020ff"/><rect x="22" y="18" width="1" height="1" fill="#000693"/><rect x="60" y="29" width="2" height="1" fill="#000591"/><rect x="104" y="46" width="2" height="1" fill="#000485"/><rect x="102" y="20" width="1" height="1" fill="#0011ee"/><rect x="98" y="46" width="1" height="1" fill="#000483"/><rect x="41" y="3" width="3" height="1" fill="#0046ff"/><rect x="25" y="14" width="1" height="2" fill="#000484"/><rect x="96" y="22" width="1" height="1" fill="#0008a6"/><rect x="88" y="46" width="2" height="2" fill="#0038ff"/><rect x="4" y="51" width="1" height="2" fill="#007dff"/><rect x="82" y="30" width="2" height="2" fill="#00079c"/><rect x="122" y="43" width="1" height="2" fill="#000483"/><rect x="5" y="13" width="1" height="1" fill="#000484"/><rect x="126" y="30" width="2" height="1" fill="#001fff"/><rect x="98" y="3" width="1" height="1" fill="#00058d"/><rect x="35" y="0" width="2" height="1" fill="#000484"/><rect x="104" y="12" width="2" height="1" fill="#00058e"/><rect x="90" y="6" width="3" height="1" fill="#000487"/><rect x="16" y="8" width="3" height="1" fill="#00058c"/><rect x="14" y="13" width="2" height="1" fill="#0039ff"/><rect x="58" y="37" width="2" height="2" fill="#00079d"/><rect x="38" y="51" width="2" height="2" fill="#00079a"/><rect x="30" y="7" width="2" height="1" fill="#000fd9"/><rect x="84" y="15" width="2" height="1" fill="#000cc4"/><rect x="79" y="9" width="3" height="1" fill="#00079e"/><rect x="83" y="20" width="1" height="1" fill="#000ab8"/><rect x="73" y="23" width="2" height="1" fill="#000483"/><rect x="41" y="12" width="2" height="2" fill="#0012f4"/><rect x="42" y="0" width="2" height="1" fill="#0009a9"/><rect x="51" y="15" width="1" height="1" fill="#000486"/><rect x="68" y="50" width="1" height="1" fill="#0016ff"/><rect x="113" y="35" width="2" height="2" fill="#000699"/><rect x="17" y="5" width="1" height="2" fill="#0026ff"/><rect x="121" y="13" width="2" height="1" fill="#000483"/><rect x="52" y="24" width="1" height="1" fill="#0009ad"/><rect x="124" y="50" width="2" height="1" fill="#000483"/><rect x="56" y="42" width="1" height="1" fill="#0009ad"/><rect x="104" y="13" width="3" height="1" fill="#0022ff"/><rect x="48" y="11" width="1" height="1" fill="#000483"/><rect x="15" y="26" width="2" height="2" fill="#000699"/><rect x="67" y="50" width="1" height="1" fill="#0009ae"/><rect x="35" y="35" width="2" height="1" fill="#000ed2"/><rect x="110" y="32" width="2" height="1" fill="#000483"/><rect x="96" y="41" width="1" height="1" fill="#003dff"/><rect x="40" y="2" width="2" height="2" fill="#00079e"/><rect x="121" y="43" width="2" height="1" fill="#0013f9"/><rect x="96" y="6" width="1" height="1" fill="#000cc4"/><rect x="84" y="17" width="1" height="2" fill="#001cff"/><rect x="0" y="10" width="2" height="1" fill="#000483"/><rect x="78" y="23" width="1" height="1" fill="#007eff"/><rect x="16" y="9" width="2" height="1" fill="#000ab7"/><rect x="93" y="33" width="1" height="2" fill="#000484"/><rect x="6" y="28" width="2" height="1" fill="#006eff"/><rect x="101" y="48" width="2" height="1" fill="#000ab4"/><rect x="71" y="39" width="1" height="1" fill="#0013fd"/><rect x="21" y="19" width="3" height="1" fill="#00048a"/><rect x="54" y="39" width="1" height="1" fill="#003aff"/><rect x="41" y="2" width="1" height="1" fill="#00058c"/><rect x="116" y="25" width="3" height="1" fill="#000487"/><rect x="25" y="17" width="1" height="1" fill="#00079f"/><rect x="65" y="5" width="1" height="1" fill="#0010e2"/><rect x="48" y="51" width="1" height="1" fill="#00079c"/><rect x="42" y="2" width="2" height="1" fill="#000cc3"/><rect x="82" y="3" width="2" height="1" fill="#000bbc"/><rect x="7" y="43" width="3" height="1" fill="#000483"/><rect x="122" y="49" width="1" height="1" fill="#000fdd"/><rect x="35" y="40" width="1" height="1" fill="#000ab2"/><rect x="89" y="18" width="1" height="1" fill="#002fff"/><rect x="70" y="48" width="3" height="2" fill="#00058b"/><rect x="91" y="21" width="3" height="1" fill="#000484"/><rect x="94" y="49" width="1" height="1" fill="#0038ff"/><rect x="76" y="46" width="2" height="2" fill="#000483"/><rect x="100" y="34" width="1" height="1" fill="#000697"/><rect x="80" y="4" width="1" height="1" fill="#000ab6"/><rect x="54" y="39" width="1" height="2" fill="#000483"/><rect x="28" y="19" width="3" height="1" fill="#000fd9"/><rect x="35" y="9" width="3" height="1" fill="#000488"/><rect x="62" y="40" width="1" height="1" fill="#00058b"/><rect x="49" y="41" width="3" height="1" fill="#0056ff"/><rect x="85" y="27" width="1" height="1" fill="#006bff"/><rect x="48" y="39" width="2" height="1" fill="#0019ff"/><rect x="99" y="3" width="1" height="1" fill="#001aff"/><rect x="107" y="13" width="1" height="2" fill="#000bb9"/><rect x="55" y="30" width="3" height="1" fill="#000484"/><rect x="4" y="28" width="3" height="1" fill="#0009b0"/><rect x="119" y="45" width="2" height="1" fill="#0010e5"/><rect x="66" y="25" width="2" height="1" fill="#000488"/><rect x="41" y="42" width="2" height="2" fill="#0010e7"/><rect x="12" y="39" width="1" height="1" fill="#000693"/><rect x="119" y="6" width="2" height="1" fill="#000483"/><rect x="49" y="31" width="3" height="1" fill="#000487"/><rect x="29" y="18" width="1" height="1" fill="#0008a8"/><rect x="49" y="31" width="2" height="1" fill="#000483"/><rect x="113" y="29" width="1" height="1" fill="#000590"/><rect x="57" y="9" width="3" height="1" fill="#0010e4"/><rect x="23" y="48" width="2" height="1" fill="#0010e1"/><rect x="11" y="46" width="2" height="2" fill="#0009a9"/><rect x="57" y="33" width="3" height="2" fill="#00058e"/><rect x="58" y="47" width="1" height="2" fill="#007eff"/><rect x="116" y="24" width="2" height="2" fill="#000695"/><rect x="73" y="19" width="1" height="1" fill="#000dcb"/><rect x="123" y="40" width="2" height="1" fill="#0009ab"/><rect x="35" y="35" width="3" height="1" fill="#0083ff"/><rect x="27" y="33" width="2" height="2" fill="#000bc0"/><rect x="39" y="1" width="3" height="2" fill="#000484"/><rect x="38" y="8" width="1" height="1" fill="#000ed2"/><rect x="109" y="42" width="3" height="1" fill="#000fdd"/><rect x="48" y="41" width="1" height="1" fill="#0040ff"/><rect x="116" y="35" width="1" height="1" fill="#0035ff"/><rect x="118" y="20" width="1" height="1" fill="#000ed7"/><rect x="53" y="4" width="2" height="1" fill="#0011e8"/><rect x="33" y="21" width="2" height="1" fill="#00058d"/><rect x="58" y="10" width="3" height="2" fill="#0010e0"/><rect x="76" y="15" width="1" height="1" fill="#000bbe"/><rect x="98" y="31" width="1" height="1" fill="#000cc3"/><rect x="38" y="8" width="1" height="1" fill="#00058e"/><rect x="23" y="43" width="1" height="2" fill="#005bff"/><rect x="114" y="32" width="1" height="2" fill="#0052ff"/><rect x="46" y="37" width="2" height="1" fill="#000ed5"/><rect x="55" y="0" width="3" height="1" fill="#0013fc"/><rect x="104" y="37" width="2" height="1" fill="#000483"/><rect x="74" y="28" width="3" height="1" fill="#000483"/><rect x="42" y="23" width="3" height="1" fill="#000488"/><rect x="40" y="10" width="3" height="2" fill="#000483"/><rect x="103" y="13" width="2" height="2" fill="#000486"/><rect x="78" y="43" width="3" height="1" fill="#000ab4"/><rect x="64" y="48" width="2" height="1" fill="#0011ea"/><rect x="49" y="4" width="2" height="1" fill="#000ed7"/><rect x="68" y="46" width="2" height="2" fill="#00079e"/><rect x="113" y="19" width="3" height="1" fill="#0075ff"/><rect x="50" y="4" width="1" height="1" fill="#0008a4"/><rect x="119" y="18" width="2" height="1" fill="#0009a9"/><rect x="41" y="35" width="2" height="1" fill="#00048a"/><rect x="27" y="46" width="2" height="1" fill="#0053ff"/><rect x="12" y="44" width="2" height="2" fill="#000591"/><rect x="79" y="7" width="2" height="2" fill="#0061ff"/><rect x="68" y="5" width="1" height="1" fill="#000ed4"/><rect x="14" y="19" width="2" height="2" fill="#007fff"/><rect x="115" y="18" width="2" height="2" fill="#0044ff"/><rect x="25" y="24" width="1" height="1" fill="#0008a8"/><rect x="29" y="2" width="1" height="2" fill="#000696"/><rect x="67" y="5" width="3" height="2" fill="#0009ae"/><rect x="72" y="27" width="2" height="1" fill="#000483"/><rect x="80" y="32" width="2" height="1" fill="#0075ff"/><rect x="50" y="50" width="1" height="1" fill="#000bc0"/><rect x="5" y="52" width="3" height="1" fill="#0008a7"/><rect x="46" y="0" width="2" height="2" fill="#0009ab"/><rect x="101" y="10" width="2" height="1" fill="#00079c"/><rect x="30" y="44" width="1" height="1" fill="#0069ff"/><rect x="75" y="40" width="1" height="1" fill="#0010e4"/><rect x="49" y="39" width="2" height="2" fill="#000485"/><rect x="102" y="35" width="1" height="2" fill="#005cff"/><rect x="102" y="1" width="2" height="1" fill="#000ed2"/><rect x="9" y="18" width="3" height="2" fill="#0025ff"/><rect x="20" y="16" width="1" height="1" fill="#001cff"/><rect x="25" y="36" width="2" height="1" fill="#000591"/><rect x="85" y="51" width="1" height="1" fill="#000488"/><rect x="80" y="8" width="1" height="1" fill="#001cff"/><rect x="68" y="6" width="2" height="1" fill="#000484"/><rect x="103" y="49" width="2" height="1" fill="#0057ff"/><rect x="62" y="31" width="1" height="1" fill="#0012f6"/><rect x="61" y="45" width="1" height="1" fill="#0008a8"/><rect x="0" y="11" width="1" height="1" fill="#000fd8"/><rect x="118" y="26" width="2" height="1" fill="#0011eb"/><rect x="112" y="1" width="3" height="2" fill="#00058e"/><rect x="67" y="47" width="3" height="2" fill="#0071ff"/><rect x="94" y="24" width="1" height="1" fill="#0081ff"/><rect x="84" y="1" width="1" height="1" fill="#0008a2"/><rect x="72" y="0" width="1" height="1" fill="#0039ff"/><rect x="80" y="19" width="1" height="1" fill="#000ed4"/><rect x="59" y="29" width="3" height="1" fill="#000591"/><rect x="115" y="22" width="1" height="1" fill="#000486"/><rect x="2" y="17" width="3" height="1" fill="#000ab2"/><rect x="94" y="6" width="1" height="1" fill="#0012f0"/><rect x="103" y="20" width="1" height="1" fill="#000fda"/><rect x="39" y="8" width="1" height="1" fill="#0010e3"/><rect x="55" y="10" width="1" height="1" fill="#000696"/><rect x="90" y="46" width="1" height="2" fill="#000489"/><rect x="120" y="31" width="3" height="1" fill="#000483"/><rect x="8" y="30" width="1" height="2" fill="#000488"/><rect x="25" y="7" width="1" height="1" fill="#000692"/><rect x="94" y="27" width="2" height="1" fill="#00058c"/><rect x="89" y="31" width="2" height="1" fill="#000ed2"/><rect x="12" y="47" width="2" height="1" fill="#0021ff"/><rect x="32" y="10" width="1" height="1" fill="#007eff"/><rect x="106" y="51" width="1" height="1" fill="#0008a4"/><rect x="97" y="44" width="3" height="1" fill="#000483"/><rect x="11" y="32" width="2" height="1" fill="#0026ff"/><rect x="123" y="44" width="1" height="2" fill="#0008a8"/><rect x="25" y="24" width="2" height="2" fill="#000ed8"/><rect x="107" y="43" width="3" height="1" fill="#00058f"/><rect x="39" y="28" width="1" height="1" fill="#00079f"/><rect x="30" y="27" width="2" height="1" fill="#000485"/><rect x="24" y="25" width="1" height="1" fill="#0011e8"/><rect x="108" y="22" width="2" height="1" fill="#000488"/><rect x="116" y="48" width="1" height="2" fill="#0046ff"/><rect x="86" y="7" width="2" height="2" fill="#000694"/><rect x="6" y="11" width="2" height="1" fill="#00058e"/><rect x="95" y="19" width="3" height="1" fill="#00058b"/><rect x="2" y="47" width="1" height="1" fill="#00058b"/><rect x="71" y="25" width="1" height="1" fill="#00058e"/><rect x="64" y="22" width="1" height="1" fill="#004aff"/><rect x="124" y="36" width="3" height="1" fill="#000bbd"/><rect x="21" y="28" width="2" height="1" fill="#0010e7"/><rect x="82" y="6" width="1" height="2" fill="#000489"/><rect x="126" y="5" width="2" height="1" fill="#000485"/><rect x="6" y="14" width="2" height="2" fill="#004cff"/><rect x="84" y="29" width="2" height="2" fill="#000488"/><rect x="57" y="1" width="3" height="1" fill="#000696"/><rect x="85" y="37" width="3" height="2" fill="#000ab8"/><rect x="44" y="0" width="2" height="1" fill="#0012f2"/><rect x="7" y="42" width="1" height="1" fill="#000ab8"/><rect x="3" y="41" width="1" height="1" fill="#0020ff"/><rect x="117" y="11" width="1" height="1" fill="#0031ff"/><rect x="6" y="19" width="2" height="1" fill="#000483"/><rect x="11" y="50" width="1" height="1" fill="#0010e0"/><rect x="103" y="52" width="2" height="1" fill="#0009ab"/><rect x="102" y="37" width="1" height="2" fill="#000590"/><rect x="9" y="33" width="3" height="1" fill="#000590"/><rect x="1" y="47" width="1" height="1" fill="#000dcb"/><rect x="24" y="44" width="2" height="1" fill="#000483"/><rect x="44" y="0" width="1" height="2" fill="#000ed7"/><rect x="112" y="34" width="2" height="1" fill="#0008a4"/><rect x="24" y="6" width="2" height="1" fill="#0009ae"/><rect x="107" y="8" width="1" height="1" fill="#007bff"/><rect x="60" y="29" width="1" height="1" fill="#0010e0"/><rect x="4" y="51" width="2" height="1" fill="#0031ff"/><rect x="113" y="13" width="2" height="1" fill="#0009af"/><rect x="11" y="45" width="1" height="2" fill="#000483"/><rect x="15" y="4" width="2" height="1" fill="#0010e0"/><rect x="71" y="21" width="2" height="1" fill="#000483"/><rect x="94" y="22" width="1" height="1" fill="#0020ff"/><rect x="30" y="27" width="1" height="1" fill="#000697"/><rect x="30" y="0" width="2" height="1" fill="#000489"/><rect x="13" y="11" width="3" height="1" fill="#00048a"/><rect x="100" y="38" width="1" height="1" fill="#00079b"/><rect x="125" y="19" width="1" height="1" fill="#000fda"/><rect x="106" y="19" width="1" height="1" fill="#00058d"/><rect x="97" y="8" width="3" height="1" fill="#00079e"/><rect x="22" y="37" width="1" height="2" fill="#0012f0"/><rect x="58" y="6" width="3" height="1" fill="#000485"/><rect x="104" y="46" width="1" height="1" fill="#0010e0"/><rect x="57" y="36" width="2" height="2" fill="#0064ff"/><rect x="125" y="18" width="3" height="1" fill="#000dcc"/><rect x="118" y="10" width="1" height="1" fill="#000487"/><rect x="118" y="16" width="2" height="1" fill="#0010e4"/><rect x="95" y="52" width="1" height="1" fill="#000484"/><rect x="30" y="32" width="2" height="2" fill="#000fdf"/><rect x="121" y="5" width="2" height="1" fill="#000fde"/><rect x="77" y="26" width="1" height="1" fill="#000483"/><rect x="30" y="17" width="3" height="2" fill="#000483"/><rect x="81" y="0" width="1" height="2" fill="#0076ff"/><rect x="76" y="12" width="3" height="1" fill="#000485"/><rect x="87" y="44" width="2" height="2" fill="#0008a5"/><rect x="11" y="39" width="2" height="2" fill="#000592"/><rect x="123" y="50" width="2" height="1" fill="#000483"/><rect x="0" y="49" width="1" height="1" fill="#005fff"/><rect x="51" y="22" width="2" height="1" fill="#000485"/><rect x="76" y="34" width="2" height="2" fill="#000ab3"/><rect x="5" y="17" width="2" height="1" fill="#0011eb"/><rect x="11" y="16" width="1" height="2" fill="#000590"/><rect x="60" y="26" width="2" height="1" fill="#0034ff"/><rect x="74" y="24" width="2" height="1" fill="#000591"/><rect x="13" y="16" width="3" height="2" fill="#002eff"/><rect x="107" y="49" width="1" height="1" fill="#0008a9"/><rect x="8" y="17" width="1" height="2" fill="#000693"/><rect x="101" y="52" width="2" height="2" fill="#0007a0"/><rect x="9" y="27" width="3" height="1" fill="#000483"/><rect x="53" y="22" width="2" height="2" fill="#000fd9"/><rect x="123" y="2" width="3" height="2" fill="#000dcc"/><rect x="64" y="42" width="3" height="1" fill="#0045ff"/><rect x="106" y="14" width="2" height="2" fill="#00058f"/><rect x="76" y="46" width="2" height="2" fill="#0009aa"/><rect x="34" y="10" width="2" height="1" fill="#000693"/><rect x="108" y="9" width="1" height="1" fill="#000486"/><rect x="1" y="9" width="2" height="1" fill="#0084ff"/><rect x="115" y="49" width="2" height="1" fill="#000694"/><rect x="97" y="14" width="2" height="2" fill="#0008a3"/><rect x="91" y="34" width="2" height="1" fill="#000ab9"/><rect x="49" y="39" width="2" height="1" fill="#0012f5"/><rect x="80" y="25" width="3" height="2" fill="#00079b"/><rect x="25" y="51" width="3" height="1" fill="#000cc1"/><rect x="27" y="10" width="1" height="1" fill="#000486"/><rect x="105" y="41" width="2" height="1" fill="#000ab2"/><rect x="51" y="3" width="1" height="1" fill="#000483"/><rect x="19" y="22" width="3" height="2" fill="#000693"/><rect x="113" y="32" width="1" height="2" fill="#000698"/><rect x="65" y="47" width="1" height="1" fill="#0008a2"/><rect x="43" y="44" width="2" height="1" fill="#000484"/><rect x="17" y="23" width="2" height="1" fill="#000485"/><rect x="115" y="18" width="3" height="1" fill="#0011ea"/><rect x="29" y="14" width="1" height="2" fill="#000699"/><rect x="76" y="40" width="3" height="2" fill="#000483"/><rect x="12" y="24" width="1" height="1" fill="#000dcd"/><rect x="62" y="45" width="1" height="1" fill="#000483"/><rect x="19" y="29" width="3" height="1" fill="#000486"/><rect x="124" y="11" width="3" height="1" fill="#0070ff"/><rect x="39" y="30" width="2" height="2" fill="#0009b0"/><rect x="56" y="0" width="1" height="1" fill="#0064ff"/><rect x="54" y="12" width="2" height="2" fill="#0009af"/><rect x="70" y="45" width="2" height="1" fill="#00058a"/><rect x="42" y="28" width="3" height="1" fill="#0068ff"/><rect x="30" y="15" width="2" height="2" fill="#0009af"/><rect x="123" y="24" width="3" height="2" fill="#0008a5"/><rect x="76" y="44" width="2" height="1" fill="#0055ff"/><rect x="85" y="28" width="3" height="1" fill="#000483"/><rect x="41" y="31" width="2" height="1" fill="#000ed4"/><rect x="110" y="52" width="2" height="1" fill="#005fff"/><rect x="36" y="12" width="3" height="1" fill="#0080ff"/><rect x="63" y="14" width="1" height="1" fill="#000485"/><rect x="20" y="15" width="2" height="2" fill="#0012ef"/><rect x="111" y="41" width="3" height="1" fill="#000592"/><rect x="99" y="48" width="3" height="1" fill="#000483"/><rect x="53" y="31" width="1" height="1" fill="#0008a3"/><rect x="74" y="52" width="1" height="1" fill="#000692"/><rect x="46" y="52" width="1" height="1" fill="#000695"/><rect x="89" y="12" width="1" height="2" fill="#0012f1"/><rect x="91" y="19" width="1" height="1" fill="#0080ff"/><rect x="31" y="23" width="1" height="1" fill="#004bff"/><rect x="96" y="45" width="3" height="2" fill="#00079c"/><rect x="112" y="36" width="3" height="1" fill="#00079c"/><rect x="89" y="42" width="1" height="2" fill="#0013fa"/><rect x="59" y="29" width="3" height="1" fill="#000dca"/><rect x="100" y="39" width="3" height="1" fill="#000695"/><rect x="68" y="6" width="1" height="1" fill="#0033ff"/><rect x="81" y="5" width="2" height="1" fill="#000483"/><rect x="95" y="46" width="2" height="2" fill="#000592"/><rect x="62" y="42" width="1" height="1" fill="#0011e8"/><rect x="2" y="51" width="3" height="2" fill="#00079c"/><rect x="14" y="40" width="3" height="1" fill="#00079c"/><rect x="48" y="10" width="2" height="1" fill="#0009af"/><rect x="79" y="8" width="1" height="1" fill="#000488"/><rect x="17" y="8" width="1" height="1" fill="#000487"/><rect x="93" y="8" width="1" height="2" fill="#0018ff"/><rect x="114" y="11" width="2" height="1" fill="#000692"/><rect x="37" y="29" width="3" height="1" fill="#0069ff"/><rect x="20" y="43" width="3" height="1" fill="#00058d"/><rect x="90" y="9" width="1" height="1" fill="#000cc7"/><rect x="7" y="12" width="2" height="1" fill="#000ed3"/><rect x="107" y="23" width="2" height="1" fill="#000487"/><rect x="89" y="4" width="3" height="1" fill="#000484"/><rect x="34" y="50" width="2" height="1" fill="#0008a7"/><rect x="16" y="46" width="1" height="1" fill="#000483"/><rect x="69" y="0" width="1" height="1" fill="#005fff"/><rect x="10" y="35" width="3" height="1" fill="#00058a"/><rect x="118" y="36" width="1" height="1" fill="#0013fe"/><rect x="47" y="44" width="3" height="1" fill="#00079b"/><rect x="88" y="8" width="1" height="1" fill="#000488"/><rect x="61" y="10" width="1" height="1" fill="#00079e"/><rect x="118" y="9" width="2" height="1" fill="#000486"/><rect x="120" y="44" width="2" height="2" fill="#000bbd"/><rect x="77" y="36" width="1" height="1" fill="#0054ff"/><rect x="106" y="39" width="1" height="2" fill="#00058d"/><rect x="3" y="33" width="2" height="1" fill="#000485"/><rect x="85" y="26" width="1" height="1" fill="#000695"/><rect x="37" y="34" width="1" height="1" fill="#0031ff"/><rect x="44" y="47" width="3" height="1" fill="#0069ff"/><rect x="35" y="26" width="1" height="1" fill="#00079e"/><rect x="50" y="8" width="1" height="1" fill="#0008a3"/><rect x="125" y="27" width="1" height="1" fill="#0013f7"/><rect x="126" y="48" width="1" height="1" fill="#000694"/><rect x="58" y="1" width="2" height="2" fill="#0055ff"/><rect x="4" y="9" width="1" height="1" fill="#000485"/><rect x="15" y="32" width="1" height="1" fill="#000dcf"/><rect x="18" y="43" width="2" height="1" fill="#0064ff"/><rect x="100" y="9" width="2" height="1" fill="#000484"/><rect x="24" y="43" width="3" height="1" fill="#000fdb"/><rect x="72" y="16" width="2" height="1" fill="#000bbe"/><rect x="110" y="1" width="2" height="1" fill="#0009a9"/><rect x="47" y="13" width="2" height="1" fill="#0009ad"/><rect x="17" y="5" width="2" height="1" fill="#0068ff"/><rect x="46" y="3" width="1" height="1" fill="#0057ff"/><rect x="34" y="24" width="2" height="1" fill="#001eff"/><rect x="102" y="50" width="2" height="1" fill="#000cc2"/><rect x="116" y="39" width="2" height="2" fill="#0026ff"/><rect x="78" y="51" width="3" height="1" fill="#0009ae"/><rect x="79" y="31" width="1" height="1" fill="#000485"/><rect x="109" y="45" width="3" height="1" fill="#000fdf"/><rect x="21" y="51" width="3" height="1" fill="#00058c"/><rect x="88" y="8" width="3" height="2" fill="#000dcd"/><rect x="19" y="37" width="3" height="1" fill="#0009ab"/><rect x="80" y="48" width="2" height="2" fill="#000ab5"/><rect x="104" y="47" width="3" height="1" fill="#0029ff"/><rect x="69" y="21" width="2" height="2" fill="#000590"/><rect x="27" y="27" width="3" height="2" fill="#000484"/><rect x="19" y="29" width="3" height="1" fill="#003bff"/><rect x="105" y="38" width="2" height="2" fill="#000487"/><rect x="90" y="23" width="2" height="1" fill="#000693"/><rect x="21" y="12" width="2" height="1" fill="#000591"/><rect x="67" y="30" width="2" height="1" fill="#0083ff"/><rect x="109" y="42" width="2" height="1" fill="#0038ff"/><rect x="51" y="46" width="3" height="1" fill="#003dff"/><rect x="79" y="26" width="1" height="1" fill="#00079b"/><rect x="92" y="1" width="1" height="1" fill="#000ab4"/><rect x="76" y="25" width="1" height="1" fill="#0083ff"/><rect x="111" y="28" width="2" height="1" fill="#00058f"/><rect x="13" y="51" width="1" height="1" fill="#000591"/><rect x="92" y="51" width="1" height="1" fill="#000cc6"/><rect x="91" y="41" width="1" height="1" fill="#000ab2"/><rect x="49" y="24" width="3" height="1" fill="#000dc9"/><rect x="114" y="13" width="2" height="2" fill="#00079b"/><rect x="9" y="7" width="2" height="1" fill="#000486"/><rect x="7" y="51" width="3" height="1" fill="#000fdf"/><rect x="26" y="13" width="1" height="2" fill="#000698"/><rect x="122" y="10" width="3" height="1" fill="#000699"/><rect x="55" y="43" width="1" height="1" fill="#00058f"/><rect x="97" y="32" width="1" height="2" fill="#00058a"/><rect x="32" y="2" width="1" height="2" fill="#007aff"/><rect x="5" y="34" width="1" height="1" fill="#000ed3"/><rect x="126" y="36" width="3" height="1" fill="#000ab3"/><rect x="14" y="30" width="1" height="1" fill="#0018ff"/><rect x="66" y="36" width="3" height="2" fill="#000ed6"/><rect x="11" y="6" width="3" height="1" fill="#000483"/><rect x="71" y="6" width="3" height="1" fill="#0014ff"/><rect x="124" y="10" width="3" height="1" fill="#0083ff"/><rect x="117" y="4" width="2" height="2" fill="#00079c"/><rect x="30" y="38" width="1" height="1" fill="#0008a7"/><rect x="66" y="11" width="2" height="1" fill="#0045ff"/><rect x="75" y="31" width="2" height="1" fill="#0056ff"/><rect x="49" y="43" width="1" height="1" fill="#00058f"/><rect x="58" y="17" width="2" height="1" fill="#0009b0"/><rect x="90" y="35" width="2" height="2" fill="#0040ff"/><rect x="117" y="15" width="2" height="2" fill="#000cc1"/><rect x="49" y="28" width="2" height="1" fill="#000fdb"/><rect x="83" y="35" width="3" height="1" fill="#000ed4"/><rect x="32" y="47" width="3" height="2" fill="#000489"/><rect x="32" y="14" width="3" height="2" fill="#0079ff"/><rect x="62" y="45" width="3" height="1" fill="#00058e"/><rect x="52" y="2" width="2" height="1" fill="#0008a9"/><rect x="47" y="10" width="2" height="1" fill="#00079e"/><rect x="14" y="52" width="1" height="2" fill="#000bbf"/><rect x="68" y="44" width="1" height="1" fill="#000486"/><rect x="32" y="15" width="1" height="2" fill="#000ed3"/><rect x="56" y="9" width="3" height="2" fill="#0010e7"/><rect x="9" y="51" width="1" height="1" fill="#000483"/><rect x="35" y="27" width="2" height="1" fill="#00079b"/><rect x="122" y="38" width="2" height="1" fill="#000591"/><rect x="69" y="41" width="1" height="1" fill="#000ab7"/><rect x="37" y="18" width="2" height="1" fill="#000cc7"/><rect x="88" y="36" width="1" height="2" fill="#00058c"/><rect x="72" y="40" width="1" height="1" fill="#0009af"/><rect x="119" y="6" width="2" height="1" fill="#000dca"/><rect x="101" y="17" width="1" height="1" fill="#0009b0"/><rect x="30" y="1" width="2" height="1" fill="#000695"/><rect x="55" y="17" width="2" height="1" fill="#000484"/><rect x="8" y="13" width="3" height="1" fill="#0008a5"/><rect x="62" y="30" width="1" height="2" fill="#000ed5"/><rect x="41" y="22" width="2" height="1" fill="#000ed4"/><rect x="35" y="27" width="3" height="1" fill="#0011ee"/><rect x="125" y="40" width="1" height="1" fill="#000483"/><rect x="95" y="13" width="1" height="1" fill="#00079b"/><rect x="60" y="36" width="1" height="2" fill="#000dcf"/><rect x="16" y="12" width="2" height="1" fill="#0009aa"/><rect x="16" y="34" width="2" height="1" fill="#00079c"/><rect x="73" y="2" width="2" height="2" fill="#0008a6"/><rect x="49" y="16" width="3" height="1" fill="#000dc9"/><rect x="122" y="23" width="1" height="2" fill="#0009b0"/><rect x="103" y="10" width="3" height="2" fill="#000489"/><rect x="1" y="17" width="2" height="1" fill="#000dca"/><rect x="58" y="36" width="1" height="1" fill="#00058d"/><rect x="2" y="13" width="3" height="1" fill="#000483"/><rect x="28" y="21" width="2" height="1" fill="#000dc9"/><rect x="35" y="2" width="1" height="2" fill="#00079a"/><rect x="112" y="0" width="3" height="2" fill="#000692"/><rect x="114" y="21" width="2" height="1" fill="#0049ff"/><rect x="104" y="33" width="1" height="1" fill="#007bff"/><rect x="17" y="33" width="2" height="2" fill="#0028ff"/><rect x="125" y="38" width="2" height="2" fill="#000698"/><rect x="85" y="43" width="1" height="2" fill="#000483"/><rect x="97" y="2" width="2" height="2" fill="#000485"/><rect x="79" y="1" width="3" height="2" fill="#000489"/><rect x="85" y="8" width="3" height="1" fill="#0020ff"/><rect x="16" y="18" width="3" height="1" fill="#000484"/><rect x="107" y="29" width="1" height="2" fill="#005cff"/><rect x="124" y="16" width="1" height="1" fill="#000ab6"/><rect x="43" y="52" width="3" height="2" fill="#0073ff"/><rect x="22" y="1" width="2" height="1" fill="#004eff"/><rect x="101" y="28" width="2" height="2" fill="#0009b0"/><rect x="53" y="14" width="3" height="1" fill="#0008a8"/><rect x="93" y="31" width="2" height="1" fill="#005dff"/><rect x="94" y="39" width="3" height="2" fill="#000483"/><rect x="53" y="40" width="2" height="1" fill="#000486"/><rect x="122" y="25" width="2" height="1" fill="#000ab8"/><rect x="29" y="47" width="3" height="1" fill="#000dcb"/><rect x="32" y="40" width="1" height="2" fill="#000489"/><rect x="12" y="20" width="3" height="1" fill="#0013fd"/><rect x="5" y="52" width="1" height="1" fill="#0008a7"/><rect x="96" y="12" width="2" height="1" fill="#0047ff"/><rect x="4" y="0" width="1" height="1" fill="#000ab1"/><rect x="116" y="26" width="2" height="1" fill="#000ed3"/><rect x="87" y="43" width="1" height="1" fill="#0019ff"/><rect x="7" y="21" width="3" height="1" fill="#00058e"/><rect x="88" y="8" width="2" height="2" fill="#000694"/><rect x="43" y="52" width="3" height="2" fill="#0013f8"/><rect x="45" y="51" width="1" height="1" fill="#000692"/><rect x="74" y="25" width="1" height="1" fill="#0068ff"/><rect x="26" y="3" width="3" height="1" fill="#000487"/><rect x="66" y="13" width="3" height="2" fill="#00058f"/><rect x="101" y="31" width="2" height="1" fill="#00079c"/><rect x="38" y="48" width="3" height="1" fill="#0013fe"/><rect x="44" y="9" width="1" height="2" fill="#000485"/><rect x="94" y="32" width="1" height="2" fill="#000591"/><rect x="1" y="40" width="2" height="1" fill="#0010e3"/><rect x="86" y="48" width="3" height="1" fill="#007cff"/><rect x="69" y="33" width="3" height="2" fill="#000cc1"/><rect x="39" y="14" width="2" height="1" fill="#000483"/><rect x="7" y="12" width="1" height="1" fill="#000dcf"/><rect x="80" y="52" width="1" height="1" fill="#000699"/><rect x="93" y="16" width="2" height="1" fill="#000483"/><rect x="93" y="46" width="3" height="1" fill="#000485"/><rect x="92" y="42" width="3" height="1" fill="#000bbb"/><rect x="126" y="7" width="1" height="1" fill="#000486"/><rect x="48" y="52" width="2" height="1" fill="#0010e4"/><rect x="51" y="33" width="2" height="2" fill="#000486"/><rect x="66" y="2" width="3" height="1" fill="#000489"/><rect x="101" y="8" width="2" height="1" fill="#0010e5"/><rect x="100" y="19" width="1" height="1" fill="#0011eb"/><rect x="70" y="38" width="2" height="1" fill="#002eff"/><rect x="75" y="2" width="2" height="1" fill="#000483"/><rect x="76" y="23" width="1" height="1" fill="#0036ff"/><rect x="92" y="0" width="2" height="1" fill="#000698"/><rect x="66" y="11" width="1" height="1" fill="#007bff"/><rect x="117" y="14" width="1" height="1" fill="#004cff"/><rect x="46" y="24" width="2" height="1" fill="#000483"/><rect x="72" y="25" width="1" height="1" fill="#000486"/><rect x="109" y="42" width="2" height="1" fill="#000483"/><rect x="32" y="41" width="2" height="2" fill="#000694"/><rect x="119" y="27" width="3" height="2" fill="#0008a3"/><rect x="95" y="24" width="2" height="1" fill="#00048a"/><rect x="66" y="0" width="1" height="1" fill="#0018ff"/><rect x="99" y="44" width="1" height="1" fill="#000483"/><rect x="42" y="16" width="1" height="1" fill="#007dff"/><rect x="56" y="6" width="1" height="1" fill="#0059ff"/><rect x="27" y="2" width="2" height="1" fill="#000cc7"/><rect x="67" y="45" width="2" height="1" fill="#000ab4"/><rect x="43" y="38" width="1" height="1" fill="#000483"/><rect x="24" y="32" width="1" height="1" fill="#0011ef"/><rect x="15" y="13" width="3" height="1" fill="#000ab3"/><rect x="5" y="23" width="1" height="2" fill="#000486"/><rect x="37" y="34" width="1" height="1" fill="#000483"/><rect x="109" y="32" width="1" height="1" fill="#000695"/><rect x="54" y="17" width="2" height="1" fill="#000486"/><rect x="119" y="42" width="1" height="1" fill="#0011e9"/><rect x="3" y="47" width="1" height="1" fill="#000698"/><rect x="38" y="9" width="2" height="1" fill="#00079d"/><rect x="102" y="14" width="1" height="1" fill="#007cff"/><rect x="53" y="23" width="3" height="1" fill="#0012f3"/><rect x="40" y="33" width="2" height="1" fill="#0018ff"/><rect x="102" y="17" width="2" height="1" fill="#0012f0"/><rect x="103" y="10" width="2" height="1" fill="#0013f9"/><rect x="57" y="22" width="2" height="1" fill="#0077ff"/><rect x="54" y="51" width="1" height="1" fill="#000487"/><rect x="8" y="44" width="1" height="1" fill="#000484"/><rect x="116" y="10" width="2" height="1" fill="#0007a1"/><rect x="17" y="17" width="3" height="1" fill="#000483"/><rect x="32" y="18" width="2" height="2" fill="#005fff"/><rect x="13" y="29" width="3" height="1" fill="#0014ff"/><rect x="103" y="0" width="1" height="1" fill="#000694"/><rect x="31" y="52" width="1" height="2" fill="#000483"/><rect x="9" y="5" width="2" height="2" fill="#000fd9"/><rect x="74" y="0" width="2" height="1" fill="#000cc5"/><rect x="108" y="24" width="1" height="1" fill="#00048a"/><rect x="103" y="4" width="1" height="1" fill="#000693"/><rect x="27" y="20" width="1" height="1" fill="#00079d"/><rect x="8" y="34" width="3" height="2" fill="#0010e6"/><rect x="14" y="6" width="2" height="1" fill="#0027ff"/><rect x="85" y="21" width="2" height="1" fill="#0049ff"/><rect x="62" y="21" width="2" height="2" fill="#00079a"/><rect x="57" y="20" width="2" height="2" fill="#0011e9"/><rect x="67" y="35" width="2" height="1" fill="#000591"/><rect x="94" y="23" width="1" height="1" fill="#000696"/><rect x="17" y="0" width="2" height="1" fill="#000484"/><rect x="68" y="25" width="2" height="1" fill="#000ed2"/><rect x="12" y="52" width="1" height="2" fill="#0034ff"/><rect x="28" y="36" width="1" height="1" fill="#0066ff"/><rect x="87" y="43" width="1" height="1" fill="#000485"/><rect x="60" y="31" width="1" height="1" fill="#000590"/><rect x="61" y="23" width="3" height="1" fill="#003bff"/><rect x="43" y="2" width="1" height="2" fill="#000484"/><rect x="67" y="48" width="1" height="1" fill="#000dcc"/><rect x="74" y="21" width="2" height="1" fill="#0016ff"/><rect x="76" y="36" width="2" height="1" fill="#0012f3"/><rect x="51" y="52" width="1" height="1" fill="#0052ff"/><rect x="26" y="14" width="1" height="1" fill="#002bff"/><rect x="45" y="39" width="1" height="1" fill="#00079a"/><rect x="97" y="41" width="2" height="2" fill="#0050ff"/><rect x="88" y="5" width="3" height="1" fill="#00058d"/><rect x="1" y="13" width="2" height="1" fill="#00048a"/><rect x="14" y="27" width="3" height="1" fill="#000483"/><rect x="56" y="22" width="3" height="2" fill="#0082ff"/><rect x="75" y="1" width="3" height="1" fill="#0010e3"/><rect x="42" y="29" width="2" height="2" fill="#000bbd"/><rect x="78" y="28" width="1" height="1" fill="#00079e"/><rect x="99" y="12" width="2" height="1" fill="#003bff"/><rect x="69" y="27" width="3" height="1" fill="#00058b"/><rect x="46" y="34" width="3" height="1" fill="#000487"/><rect x="100" y="45" width="1" height="2" fill="#0049ff"/><rect x="42" y="50" width="1" height="2" fill="#00058b"/><rect x="86" y="12" width="2" height="2" fill="#00058e"/><rect x="32" y="0" width="3" height="2" fill="#0009b1"/><rect x="125" y="21" width="2" height="2" fill="#000483"/><rect x="10" y="19" width="2" height="1" fill="#006cff"/><rect x="97" y="47" width="2" height="1" fill="#0009ab"/><rect x="100" y="6" width="2" height="1" fill="#000695"/><rect x="123" y="52" width="2" height="1" fill="#0027ff"/><rect x="62" y="29" width="1" height="2" fill="#000483"/><rect x="101" y="21" width="2" height="1" fill="#0030ff"/><rect x="3" y="26" width="2" height="1" fill="#00079b"/><rect x="90" y="43" width="2" height="1" fill="#000487"/><rect x="34" y="41" width="2" height="1" fill="#00079f"/><rect x="7" y="31" width="3" height="1" fill="#000483"/><rect x="6" y="40" width="3" height="1" fill="#00058e"/><rect x="64" y="3" width="2" height="1" fill="#000ab8"/><rect x="27" y="27" width="1" height="1" fill="#0084ff"/><rect x="68" y="5" width="2" height="1" fill="#001aff"/><rect x="18" y="41" width="2" height="1" fill="#000484"/><rect x="41" y="40" width="2" height="1" fill="#0015ff"/><rect x="79" y="43" width="1" height="1" fill="#0032ff"/><rect x="85" y="52" width="1" height="1" fill="#0007a0"/><rect x="101" y="2" width="3" height="1" fill="#00079a"/><rect x="81" y="18" width="2" height="1" fill="#00079d"/><rect x="96" y="46" width="1" height="1" fill="#00079f"/><rect x="113" y="16" width="2" height="2" fill="#0066ff"/><rect x="94" y="21" width="3" height="1" fill="#000bbd"/><rect x="76" y="40" width="2" height="1" fill="#000489"/><rect x="15" y="13" width="2" height="1" fill="#00058e"/><rect x="102" y="32" width="1" height="1" fill="#000483"/><rect x="111" y="8" width="3" height="1" fill="#0062ff"/><rect x="106" y="38" width="2" height="1" fill="#000485"/><rect x="123" y="45" width="1" height="2" fill="#000692"/><rect x="44" y="6" width="2" height="1" fill="#000ed6"/><rect x="115" y="21" width="2" height="1" fill="#00079f"/><rect x="7" y="18" width="2" height="1" fill="#000bba"/><rect x="112" y="45" width="2" height="2" fill="#0013fe"/><rect x="1" y="27" width="1" height="1" fill="#003dff"/><rect x="72" y="47" width="1" height="1" fill="#0008a4"/><rect x="48" y="1" width="2" height="1" fill="#000591"/><rect x="83" y="37" width="1" height="1" fill="#0047ff"/><rect x="46" y="24" width="2" height="1" fill="#000590"/><rect x="9" y="26" width="2" height="2" fill="#0009ac"/><rect x="13" y="17" width="2" height="1" fill="#0009aa"/><rect x="43" y="27" width="1" height="1" fill="#000699"/><rect x="125" y="13" width="1" height="2" fill="#000dca"/><rect x="115" y="25" width="2" height="1" fill="#00058c"/><rect x="11" y="34" width="3" height="1" fill="#000ed1"/><rect x="6" y="29" width="3" height="1" fill="#00048a"/><rect x="121" y="50" width="3" height="1" fill="#0009ac"/><rect x="47" y="27" width="2" height="1" fill="#003fff"/><rect x="80" y="29" width="3" height="1" fill="#00079a"/><rect x="59" y="47" width="2" height="1" fill="#0008a6"/><rect x="111" y="51" width="2" height="2" fill="#00058c"/><rect x="12" y="0" width="3" height="1" fill="#006cff"/><rect x="125" y="29" width="3" height="1" fill="#003cff"/><rect x="23" y="16" width="2" height="1" fill="#0018ff"/><rect x="20" y="30" width="1" height="2" fill="#0012f2"/><rect x="11" y="27" width="1" height="2" fill="#0012f5"/><rect x="123" y="44" width="3" height="2" fill="#000486"/><rect x="83" y="27" width="3" height="1" fill="#000fdb"/><rect x="92" y="43" width="3" height="2" fill="#000483"/><rect x="99" y="1" width="3" height="1" fill="#0009ab"/><rect x="63" y="27" width="2" height="1" fill="#000483"/><rect x="64" y="14" width="3" height="2" fill="#0011ee"/><rect x="26" y="38" width="1" height="1" fill="#002cff"/><rect x="37" y="20" width="1" height="1" fill="#000bbf"/><rect x="32" y="11" width="1" height="2" fill="#000592"/><rect x="100" y="27" width="1" height="1" fill="#003dff"/><rect x="111" y="33" width="1" height="2" fill="#0073ff"/><rect x="32" y="6" width="3" height="1" fill="#001aff"/><rect x="100" y="39" width="3" height="1" fill="#000484"/><rect x="117" y="37" width="2" height="1" fill="#000dcf"/><rect x="76" y="40" width="2" height="1" fill="#000693"/><rect x="18" y="7" width="3" height="1" fill="#00058f"/><rect x="13" y="44" width="2" height="1" fill="#000486"/><rect x="80" y="48" width="2" height="1" fill="#000ed3"/><rect x="81" y="5" width="1" height="1" fill="#000484"/><rect x="50" y="21" width="1" height="2" fill="#00058e"/><rect x="89" y="7" width="1" height="1" fill="#0010e2"/><rect x="90" y="36" width="1" height="1" fill="#000489"/><rect x="116" y="7" width="2" height="2" fill="#0009b0"/><rect x="70" y="2" width="1" height="1" fill="#000592"/><rect x="54" y="5" width="1" height="1" fill="#000bb9"/><rect x="46" y="1" width="3" height="1" fill="#003dff"/><rect x="106" y="9" width="1" height="1" fill="#000485"/><rect x="76" y="44" width="1" height="1" fill="#0036ff"/><rect x="115" y="48" width="2" height="1" fill="#000696"/><rect x="22" y="11" width="2" height="1" fill="#0042ff"/><rect x="124" y="0" width="2" height="1" fill="#00058e"/><rect x="32" y="14" width="2" height="1" fill="#000485"/><rect x="39" y="27" width="1" height="2" fill="#005fff"/><rect x="122" y="0" width="3" height="1" fill="#0043ff"/><rect x="6" y="32" width="3" height="2" fill="#0013fd"/><rect x="113" y="13" width="1" height="2" fill="#000484"/><rect x="96" y="50" width="3" height="2" fill="#000698"/><rect x="88" y="19" width="1" height="2" fill="#0009a9"/><rect x="73" y="14" width="2" height="1" fill="#00058c"/><rect x="100" y="21" width="1" height="1" fill="#000ed5"/><rect x="76" y="28" width="2" height="1" fill="#0008a6"/><rect x="94" y="3" width="1" height="1" fill="#00079b"/><rect x="60" y="47" width="2" height="1" fill="#000483"/><rect x="19" y="8" width="3" height="2" fill="#000ab3"/><rect x="25" y="27" width="1" height="1" fill="#000487"/><rect x="123" y="24" width="1" height="1" fill="#000bbf"/><rect x="112" y="44" width="1" height="1" fill="#000590"/><rect x="65" y="52" width="2" height="1" fill="#0008a3"/><rect x="6" y="0" width="1" height="1" fill="#0007a0"/><rect x="9" y="35" width="1" height="2" fill="#000483"/><rect x="115" y="38" width="1" height="1" fill="#000ed2"/><rect x="91" y="24" width="1" height="1" fill="#0008a5"/><rect x="48" y="19" width="1" height="1" fill="#000ab2"/><rect x="29" y="48" width="1" height="2" fill="#000485"/><rect x="23" y="13" width="3" height="2" fill="#000cc4"/><rect x="63" y="30" width="1" height="1" fill="#000484"/><rect x="33" y="24" width="1" height="1" fill="#0007a1"/><rect x="80" y="49" width="1" height="2" fill="#0008a7"/><rect x="23" y="18" width="2" height="1" fill="#000fda"/><rect x="55" y="40" width="1" height="2" fill="#000ed3"/><rect x="96" y="52" width="1" height="1" fill="#005eff"/><rect x="126" y="25" width="2" height="1" fill="#0040ff"/><rect x="59" y="7" width="1" height="2" fill="#000fda"/><rect x="92" y="21" width="1" height="1" fill="#000fdc"/><rect x="38" y="45" width="2" height="1" fill="#000484"/><rect x="57" y="23" width="2" height="2" fill="#000488"/><rect x="87" y="39" width="3" height="1" fill="#000cc3"/><rect x="116" y="16" width="2" height="1" fill="#00058f"/><rect x="7" y="4" width="1" height="1" fill="#0044ff"/><rect x="68" y="2" width="2" height="2" fill="#000dcc"/><rect x="106" y="32" width="2" height="1" fill="#005fff"/><rect x="124" y="25" width="3" height="1" fill="#0079ff"/><rect x="117" y="49" width="1" height="1" fill="#000487"/><rect x="76" y="25" width="2" height="1" fill="#000484"/><rect x="112" y="3" width="1" height="1" fill="#000485"/><rect x="15" y="21" width="2" height="1" fill="#0010e1"/><rect x="51" y="40" width="2" height="1" fill="#0021ff"/><rect x="83" y="25" width="2" height="1" fill="#00058d"/><rect x="7" y="6" width="3" height="1" fill="#00058c"/><rect x="35" y="5" width="2" height="2" fill="#000485"/><rect x="31" y="40" width="2" height="1" fill="#0013fb"/><rect x="48" y="45" width="1" height="1" fill="#0013f9"/><rect x="125" y="16" width="2" height="1" fill="#0009ab"/><rect x="48" y="8" width="3" height="1" fill="#000483"/><rect x="69" y="42" width="2" height="1" fill="#007dff"/><rect x="78" y="5" width="2" height="1" fill="#0008a6"/><rect x="93" y="50" width="1" height="1" fill="#00079e"/><rect x="114" y="1" width="3" height="2" fill="#000485"/><rect x="68" y="13" width="3" height="2" fill="#000484"/><rect x="41" y="3" width="2" height="1" fill="#0047ff"/><rect x="32" y="29" width="1" height="2" fill="#000bbc"/><rect x="40" y="4" width="1" height="1" fill="#00069a"/><rect x="29" y="6" width="2" height="1" fill="#000483"/><rect x="65" y="39" width="3" height="1" fill="#0044ff"/><rect x="104" y="35" width="1" height="1" fill="#0032ff"/><rect x="24" y="31" width="1" height="1" fill="#0010e1"/><rect x="97" y="15" width="2" height="2" fill="#0061ff"/><rect x="41" y="11" width="1" height="1" fill="#000487"/><rect x="110" y="28" width="2" height="2" fill="#0043ff"/><rect x="43" y="12" width="2" height="1" fill="#0011eb"/><rect x="55" y="22" width="2" height="1" fill="#000489"/><rect x="55" y="12" width="1" height="1" fill="#0017ff"/><rect x="81" y="17" width="2" height="2" fill="#0009ad"/><rect x="93" y="43" width="1" height="1" fill="#000484"/><rect x="109" y="16" width="1" height="1" fill="#0011eb"/><rect x="38" y="29" width="2" height="1" fill="#001dff"/><rect x="70" y="48" width="2" height="2" fill="#000bbd"/><rect x="5" y="25" width="2" height="1" fill="#0010e3"/><rect x="97" y="14" width="2" height="2" fill="#000483"/><rect x="103" y="43" width="1" height="2" fill="#0042ff"/><rect x="38" y="47" width="2" height="1" fill="#0028ff"/><rect x="90" y="36" width="3" height="2" fill="#0012f2"/><rect x="102" y="25" width="1" height="1" fill="#00058e"/><rect x="99" y="26" width="2" height="1" fill="#000ab4"/><rect x="73" y="42" width="1" height="1" fill="#00058b"/><rect x="124" y="46" width="3" height="1" fill="#000483"/><rect x="62" y="23" width="2" height="1" fill="#000484"/><rect x="67" y="47" width="1" height="1" fill="#00048a"/><rect x="59" y="16" width="2" height="1" fill="#000483"/><rect x="26" y="5" width="2" height="1" fill="#0035ff"/><rect x="79" y="14" width="3" height="2" fill="#000697"/><rect x="74" y="50" width="3" height="1" fill="#0011e8"/><rect x="30" y="3" width="1" height="1" fill="#0010e4"/><rect x="40" y="21" width="3" height="1" fill="#000ed1"/><rect x="72" y="22" width="2" height="2" fill="#0012f4"/><rect x="94" y="11" width="3" height="1" fill="#0036ff"/><rect x="63" y="43" width="1" height="1" fill="#000fdc"/><rect x="17" y="47" width="3" height="2" fill="#0009ae"/><rect x="106" y="2" width="3" height="2" fill="#000483"/><rect x="99" y="43" width="1" height="1" fill="#00058c"/><rect x="106" y="43" width="1" height="1" fill="#000cc5"/><rect x="77" y="37" width="2" height="1" fill="#000698"/><rect x="122" y="10" width="1" height="1" fill="#000ab3"/><rect x="36" y="9" width="1" height="1" fill="#000484"/><rect x="96" y="39" width="2" height="1" fill="#000483"/><rect x="68" y="3" width="1" height="1" fill="#000694"/><rect x="112" y="44" width="1" height="1" fill="#006eff"/><rect x="66" y="21" width="2" height="2" fill="#0032ff"/><rect x="122" y="29" width="3" height="2" fill="#000484"/><rect x="26" y="17" width="3" height="1" fill="#002dff"/><rect x="42" y="51" width="2" height="2" fill="#0017ff"/><rect x="73" y="10" width="3" height="2" fill="#00058d"/><rect x="28" y="17" width="3" height="1" fill="#000488"/><rect x="110" y="24" width="1" height="2" fill="#0008a7"/><rect x="102" y="52" width="2" height="2" fill="#000483"/><rect x="7" y="5" width="1" height="1" fill="#000698"/><rect x="53" y="33" width="2" height="1" fill="#0031ff"/><rect x="1" y="39" width="3" height="1" fill="#000698"/><rect x="5" y="7" width="1" height="2" fill="#0011ec"/><rect x="35" y="26" width="2" height="1" fill="#000bbc"/><rect x="35" y="26" width="3" height="1" fill="#000ab2"/><rect x="106" y="41" width="2" height="1" fill="#000486"/><rect x="15" y="31" width="3" height="1" fill="#0011ec"/><rect x="43" y="24" width="2" height="1" fill="#000483"/><rect x="62" y="31" width="1" height="1" fill="#0077ff"/><rect x="117" y="16" width="2" height="1" fill="#0009ac"/><rect x="103" y="11" width="2" height="2" fill="#000699"/><rect x="33" y="16" width="2" height="1" fill="#007fff"/><rect x="35" y="13" width="1" height="1" fill="#0009aa"/><rect x="109" y="34" width="2" height="1" fill="#0011e9"/><rect x="60" y="27" width="2" height="1" fill="#000cc1"/><rect x="27" y="24" width="1" height="1" fill="#00058d"/><rect x="9" y="47" width="2" height="1" fill="#00058b"/><rect x="102" y="33" width="1" height="1" fill="#0010e2"/><rect x="123" y="21" width="2" height="2" fill="#000692"/><rect x="97" y="51" width="1" height="1" fill="#0053ff"/><rect x="75" y="45" width="2" height="1" fill="#000486"/><rect x="91" y="24" width="3" height="1" fill="#007cff"/><rect x="86" y="18" width="3" height="2" fill="#0012f4"/><rect x="97" y="1" width="3" height="1" fill="#000485"/><rect x="123" y="9" width="2" height="1" fill="#000483"/><rect x="7" y="48" width="2" height="2" fill="#00058c"/><rect x="68" y="27" width="2" height="1" fill="#0008a4"/><rect x="19" y="49" width="1" height="1" fill="#00079b"/><rect x="79" y="4" width="1" height="2" fill="#0084ff"/><rect x="99" y="38" width="2" height="2" fill="#0036ff"/><rect x="46" y="11" width="2" height="1" fill="#000cc4"/><rect x="32" y="46" width="2" height="2" fill="#0014ff"/><rect x="2" y="20" width="1" height="1" fill="#000698"/><rect x="126" y="37" width="1" height="1" fill="#005bff"/><rect x="70" y="39" width="3" height="1" fill="#000483"/><rect x="83" y="2" width="1" height="1" fill="#000cc3"/><rect x="11" y="13" width="1" height="1" fill="#0035ff"/><rect x="89" y="5" width="2" height="1" fill="#0077ff"/><rect x="0" y="4" width="3" height="2" fill="#000ab7"/><rect x="19" y="31" width="3" height="1" fill="#000dcc"/><rect x="88" y="8" width="1" height="1" fill="#000695"/><rect x="88" y="42" width="2" height="2" fill="#000488"/><rect x="46" y="4" width="2" height="2" fill="#000ab4"/><rect x="33" y="7" width="1" height="1" fill="#000489"/><rect x="100" y="39" width="1" height="1" fill="#000dcc"/><rect x="11" y="41" width="1" height="1" fill="#0009b0"/><rect x="19" y="17" width="1" height="1" fill="#000488"/><rect x="42" y="21" width="3" height="2" fill="#007eff"/><rect x="51" y="40" width="2" height="2" fill="#000698"/><rect x="65" y="16" width="3" height="1" fill="#000483"/><rect x="32" y="3" width="2" height="1" fill="#0008a8"/><rect x="3" y="51" width="2" height="1" fill="#0008a7"/><rect x="0" y="2" width="1" height="1" fill="#000483"/><rect x="40" y="20" width="2" height="1" fill="#000ab6"/><rect x="33" y="17" width="1" height="1" fill="#0012f7"/><rect x="46" y="33" width="1" height="2" fill="#0008a4"/><rect x="50" y="42" width="2" height="1" fill="#000483"/><rect x="125" y="40" width="2" height="1" fill="#000484"/><rect x="1" y="27" width="1" height="1" fill="#000697"/><rect x="33" y="11" width="3" height="1" fill="#0010e4"/><rect x="10" y="21" width="2" height="2" fill="#00058b"/><rect x="115" y="45" width="1" height="2" fill="#00079f"/><rect x="8" y="15" width="1" height="1" fill="#000590"/><rect x="87" y="41" width="2" height="1" fill="#000cc1"/><rect x="25" y="11" width="1" height="1" fill="#000cc6"/><rect x="86" y="13" width="2" height="1" fill="#000bbe"/><rect x="121" y="29" width="3" height="2" fill="#0012f4"/><rect x="111" y="32" width="3" height="1" fill="#000483"/><rect x="21" y="34" width="1" height="1" fill="#0012f0"/><rect x="84" y="39" width="1" height="1" fill="#000484"/><rect x="126" y="47" width="2" height="1" fill="#000488"/><rect x="97" y="27" width="1" height="2" fill="#000fdf"/><rect x="35" y="13" width="1" height="1" fill="#00058c"/><rect x="104" y="11" width="3" height="1" fill="#000483"/><rect x="52" y="0" width="2" height="1" fill="#000484"/><rect x="105" y="18" width="1" height="1" fill="#000483"/><rect x="33" y="4" width="2" height="1" fill="#0013fb"/><rect x="113" y="45" width="2" height="1" fill="#0007a1"/><rect x="11" y="3" width="1" height="2" fill="#0010e5"/><rect x="81" y="12" width="2" height="2" fill="#000488"/><rect x="14" y="2" width="2" height="2" fill="#001aff"/><rect x="97" y="0" width="2" height="1" fill="#000ed1"/><rect x="108" y="50" width="1" height="1" fill="#0007a0"/><rect x="41" y="21" width="2" height="1" fill="#000488"/><rect x="28" y="4" width="1" height="1" fill="#0066ff"/><rect x="28" y="20" width="1" height="1" fill="#000488"/><rect x="10" y="10" width="2" height="1" fill="#000483"/><rect x="37" y="50" width="2" height="1" fill="#00079a"/><rect x="12" y="13" width="1" height="1" fill="#002bff"/><rect x="76" y="14" width="1" height="1" fill="#000483"/><rect x="42" y="1" width="2" height="1" fill="#0069ff"/><rect x="29" y="30" width="3" height="1" fill="#00048a"/><rect x="41" y="25" width="2" height="1" fill="#000dca"/><rect x="74" y="44" width="3" height="1" fill="#0008a3"/><rect x="7" y="45" width="2" height="1" fill="#00058d"/><rect x="36" y="7" width="1" height="1" fill="#0024ff"/><rect x="21" y="31" width="2" height="1" fill="#00048a"/><rect x="27" y="18" width="3" height="1" fill="#0075ff"/><rect x="64" y="51" width="2" height="1" fill="#000fdf"/><rect x="95" y="51" width="1" height="1" fill="#00079c"/><rect x="10" y="2" width="1" height="1" fill="#000cc6"/><rect x="77" y="22" width="1" height="1" fill="#00079c"/><rect x="105" y="52" width="2" height="1" fill="#0015ff"/><rect x="102" y="13" width="2" height="1" fill="#000bbe"/><rect x="10" y="6" width="1" height="1" fill="#0037ff"/><rect x="104" y="15" width="2" height="1" fill="#000484"/><rect x="94" y="7" width="1" height="2" fill="#000cc3"/><rect x="21" y="18" width="3" height="2" fill="#007bff"/><rect x="54" y="50" width="1" height="1" fill="#00058c"/><rect x="115" y="22" width="2" height="1" fill="#000483"/><rect x="115" y="2" width="1" height="1" fill="#000483"/><rect x="84" y="24" width="1" height="1" fill="#0085ff"/><rect x="84" y="27" width="2" height="1" fill="#000483"/><rect x="55" y="5" width="1" height="1" fill="#000694"/><rect x="80" y="22" width="1" height="1" fill="#0012f5"/><rect x="102" y="52" width="3" height="1" fill="#003aff"/><rect x="87" y="35" width="3" height="1" fill="#00058e"/><rect x="61" y="9" width="1" height="2" fill="#002dff"/><rect x="72" y="52" width="1" height="1" fill="#0054ff"/><rect x="1" y="19" width="3" height="1" fill="#0008a8"/><rect x="6" y="18" width="1" height="1" fill="#0011ea"/><rect x="87" y="39" width="1" height="1" fill="#000592"/><rect x="39" y="44" width="2" height="1" fill="#000ed8"/><rect x="6" y="3" width="2" height="1" fill="#00058b"/><rect x="52" y="16" width="3" height="2" fill="#000cc2"/><rect x="113" y="41" width="2" height="1" fill="#000483"/><rect x="48" y="7" width="2" height="1" fill="#000694"/><rect x="65" y="25" width="1" height="2" fill="#0010e5"/><rect x="109" y="26" width="2" height="2" fill="#00058c"/><rect x="57" y="8" width="1" height="1" fill="#0009ac"/><rect x="54" y="6" width="1" height="2" fill="#0078ff"/><rect x="56" y="13" width="3" height="1" fill="#0040ff"/><rect x="104" y="33" width="2" height="1" fill="#0013f7"/><rect x="54" y="15" width="2" height="1" fill="#000dca"/><rect x="114" y="28" width="2" height="1" fill="#001cff"/><rect x="0" y="36" width="1" height="2" fill="#0012f4"/><rect x="72" y="35" width="2" height="1" fill="#000698"/><rect x="28" y="0" width="1" height="2" fill="#000487"/><rect x="78" y="2" width="2" height="1" fill="#000693"/><rect x="58" y="37" width="3" height="1" fill="#000591"/><rect x="69" y="50" width="1" height="1" fill="#000486"/><rect x="18" y="34" width="2" height="1" fill="#00058b"/><rect x="104" y="43" width="2" height="1" fill="#0067ff"/><rect x="100" y="0" width="2" height="2" fill="#000483"/><rect x="48" y="6" width="2" height="2" fill="#0011ea"/><rect x="25" y="39" width="1" height="1" fill="#000695"/><rect x="37" y="17" width="1" height="1" fill="#0010e7"/><rect x="77" y="19" width="3" height="1" fill="#000483"/><rect x="74" y="25" width="3" height="1" fill="#0084ff"/><rect x="69" y="27" width="3" height="2" fill="#0010e0"/><rect x="94" y="34" width="2" height="1" fill="#00058d"/><rect x="96" y="40" width="3" height="1" fill="#0008a4"/><rect x="76" y="48" width="1" height="2" fill="#000dcd"/><rect x="7" y="23" width="2" height="1" fill="#00079d"/><rect x="30" y="14" width="3" height="1" fill="#000483"/><rect x="79" y="30" width="1" height="1" fill="#002aff"/><rect x="37" y="31" width="1" height="1" fill="#0008a6"/><rect x="41" y="32" width="1" height="1" fill="#000dc8"/><rect x="2" y="19" width="3" height="1" fill="#007bff"/><rect x="111" y="1" width="2" height="1" fill="#00058d"/><rect x="43" y="51" width="1" height="1" fill="#000dcb"/><rect x="22" y="22" width="3" height="2" fill="#000ab2"/><rect x="18" y="21" width="2" height="1" fill="#000483"/><rect x="13" y="25" width="1" height="2" fill="#0053ff"/><rect x="66" y="2" width="2" height="1" fill="#0020ff"/><rect x="78" y="39" width="2" height="1" fill="#0009b1"/><rect x="6" y="49" width="3" height="1" fill="#000486"/><rect x="26" y="47" width="1" height="2" fill="#000489"/><rect x="107" y="34" width="1" height="1" fill="#000692"/><rect x="89" y="28" width="3" height="2" fill="#00079a"/><rect x="96" y="30" width="2" height="2" fill="#00058e"/><rect x="80" y="4" width="2" height="1" fill="#000694"/><rect x="52" y="4" width="2" height="1" fill="#0010e1"/><rect x="43" y="26" width="1" height="1" fill="#000488"/><rect x="13" y="18" width="2" height="1" fill="#000ab2"/><rect x="37" y="10" width="1" height="1" fill="#004eff"/><rect x="51" y="27" width="3" height="1" fill="#00058f"/><rect x="73" y="26" width="2" height="1" fill="#00058e"/><rect x="89" y="9" width="3" height="2" fill="#000cc3"/><rect x="3" y="1" width="1" height="2" fill="#000ed7"/><rect x="37" y="10" width="1" height="2" fill="#0016ff"/><rect x="13" y="40" width="3" height="2" fill="#0007a1"/><rect x="110" y="41" width="3" height="1" fill="#000ab6"/><rect x="122" y="16" width="2" height="2" fill="#000ed3"/><rect x="81" y="0" width="2" height="2" fill="#000484"/><rect x="79" y="13" width="2" height="1" fill="#0010e0"/><rect x="34" y="10" width="1" height="1" fill="#000695"/><rect x="2" y="7" width="1" height="1" fill="#000489"/><rect x="121" y="25" width="1" height="1" fill="#000ab7"/><rect x="91" y="52" width="2" height="1" fill="#000695"/><rect x="118" y="31" width="3" height="1" fill="#0012f1"/><rect x="52" y="33" width="1" height="1" fill="#000483"/><rect x="118" y="29" width="1" height="1" fill="#0040ff"/><rect x="90" y="6" width="2" height="1" fill="#000fda"/><rect x="4" y="30" width="2" height="1" fill="#0010e3"/><rect x="2" y="31" width="1" height="1" fill="#000bbc"/><rect x="48" y="21" width="3" height="1" fill="#0009ad"/><rect x="106" y="33" width="2" height="1" fill="#002dff"/><rect x="72" y="35" width="3" height="1" fill="#000591"/><rect x="1" y="19" width="1" height="2" fill="#000591"/><rect x="30" y="17" width="2" height="2" fill="#000ab5"/><rect x="73" y="49" width="1" height="1" fill="#0030ff"/><rect x="49" y="9" width="3" height="1" fill="#000bbe"/><rect x="23" y="27" width="2" height="1" fill="#0045ff"/><rect x="120" y="49" width="1" height="1" fill="#000486"/><rect x="118" y="12" width="2" height="1" fill="#000ab3"/><rect x="49" y="40" width="1" height="1" fill="#000486"/><rect x="79" y="14" width="2" height="1" fill="#00058d"/><rect x="113" y="45" width="2" height="1" fill="#00058a"/><rect x="49" y="34" width="1" height="1" fill="#0010e3"/><rect x="27" y="21" width="3" height="1" fill="#002aff"/><rect x="91" y="42" width="2" height="1" fill="#0009b0"/><rect x="110" y="4" width="2" height="1" fill="#00058b"/><rect x="52" y="12" width="1" height="1" fill="#0009b1"/><rect x="97" y="0" width="2" height="1" fill="#00079a"/><rect x="109" y="50" width="2" height="2" fill="#000489"/><rect x="108" y="31" width="3" height="1" fill="#00079d"/><rect x="41" y="50" width="2" height="1" fill="#000484"/><rect x="8" y="3" width="1" height="2" fill="#0017ff"/><rect x="117" y="15" width="1" height="1" fill="#000695"/><rect x="35" y="11" width="2" height="1" fill="#000ed4"/><rect x="71" y="14" width="2" height="1" fill="#000696"/><rect x="1" y="12" width="3" height="1" fill="#000590"/><rect x="44" y="18" width="1" height="1" fill="#0009aa"/><rect x="123" y="38" width="2" height="2" fill="#00058d"/><rect x="26" y="10" width="1" height="1" fill="#0007a1"/><rect x="31" y="48" width="2" height="1" fill="#001fff"/><rect x="66" y="33" width="2" height="2" fill="#000bbd"/><rect x="120" y="49" width="2" height="1" fill="#00058c"/><rect x="74" y="16" width="1" height="1" fill="#0011ea"/><rect x="64" y="19" width="2" height="1" fill="#000487"/><rect x="121" y="47" width="2" height="1" fill="#000cc4"/><rect x="75" y="50" width="2" height="1" fill="#000485"/><rect x="126" y="46" width="2" height="1" fill="#0037ff"/><rect x="50" y="24" width="1" height="1" fill="#0038ff"/><rect x="51" y="17" width="1" height="1" fill="#0007a1"/><rect x="8" y="12" width="1" height="1" fill="#0056ff"/><rect x="68" y="12" width="3" height="1" fill="#0012f2"/><rect x="78" y="15" width="1" height="1" fill="#004cff"/><rect x="42" y="35" width="3" height="1" fill="#000485"/><rect x="28" y="20" width="3" height="2" fill="#000dcc"/><rect x="8" y="21" width="3" height="1" fill="#000483"/><rect x="40" y="35" width="2" height="1" fill="#000dcd"/><rect x="116" y="40" width="2" height="1" fill="#0008a8"/><rect x="114" y="21" width="2" height="1" fill="#004dff"/><rect x="33" y="31" width="2" height="1" fill="#00048a"/><rect x="99" y="14" width="2" height="1" fill="#00058c"/><rect x="1" y="31" width="3" height="1" fill="#0010e5"/><rect x="64" y="9" width="2" height="1" fill="#000cc6"/><rect x="53" y="17" width="1" height="1" fill="#00058d"/><rect x="91" y="6" width="1" height="2" fill="#000486"/><rect x="115" y="6" width="1" height="2" fill="#0065ff"/><rect x="90" y="23" width="1" height="1" fill="#0018ff"/><rect x="20" y="6" width="2" height="1" fill="#000483"/><rect x="24" y="13" width="2" height="2" fill="#000486"/><rect x="94" y="21" width="2" height="1" fill="#0023ff"/><rect x="9" y="1" width="1" height="1" fill="#005eff"/><rect x="120" y="50" width="3" height="2" fill="#00079a"/><rect x="52" y="6" width="2" height="1" fill="#0009ab"/><rect x="48" y="5" width="2" height="2" fill="#0037ff"/><rect x="120" y="20" width="2" height="1" fill="#000fdb"/><rect x="121" y="23" width="3" height="2" fill="#0043ff"/><rect x="20" y="0" width="2" height="1" fill="#005dff"/><rect x="101" y="1" width="2" height="1" fill="#000ed1"/><rect x="54" y="52" width="3" height="1" fill="#00058c"/><rect x="126" y="16" width="3" height="1" fill="#0009aa"/><rect x="12" y="18" width="1" height="1" fill="#005dff"/><rect x="80" y="38" width="2" height="1" fill="#0010e0"/><rect x="32" y="2" width="2" height="1" fill="#0012f5"/><rect x="121" y="15" width="1" height="1" fill="#0010e3"/><rect x="108" y="4" width="1" height="2" fill="#000ab6"/><rect x="31" y="52" width="1" height="1" fill="#000ed2"/><rect x="11" y="45" width="1" height="1" fill="#000484"/><rect x="71" y="17" width="2" height="1" fill="#000483"/><rect x="112" y="11" width="3" height="1" fill="#0012f4"/><rect x="110" y="37" width="1" height="1" fill="#000697"/><rect x="73" y="32" width="1" height="1" fill="#000483"/><rect x="13" y="16" width="2" height="1" fill="#000483"/><rect x="113" y="31" width="3" height="1" fill="#000483"/><rect x="28" y="40" width="2" height="1" fill="#00079c"/><rect x="8" y="24" width="1" height="1" fill="#000cc4"/><rect x="111" y="5" width="1" height="2" fill="#0009aa"/><rect x="99" y="14" width="1" height="2" fill="#0009b0"/><rect x="98" y="22" width="3" height="2" fill="#000484"/><rect x="78" y="47" width="2" height="1" fill="#0054ff"/><rect x="82" y="52" width="2" height="1" fill="#0012f2"/><rect x="77" y="37" width="2" height="2" fill="#000488"/><rect x="126" y="13" width="1" height="1" fill="#00079c"/><rect x="11" y="11" width="2" height="1" fill="#000ab2"/><rect x="28" y="9" width="2" height="1" fill="#0065ff"/><rect x="86" y="8" width="3" height="1" fill="#000bbb"/><rect x="119" y="42" width="2" height="1" fill="#0022ff"/><rect x="116" y="32" width="1" height="2" fill="#002aff"/><rect x="66" y="51" width="1" height="1" fill="#000dc9"/><rect x="120" y="37" width="1" height="1" fill="#000cc8"/><rect x="90" y="39" width="2" height="1" fill="#000484"/><rect x="18" y="48" width="2" height="1" fill="#000590"/><rect x="65" y="4" width="2" height="2" fill="#000485"/><rect x="76" y="31" width="1" height="1" fill="#000bbd"/><rect x="6" y="15" width="2" height="1" fill="#000591"/><rect x="81" y="30" width="3" height="2" fill="#000698"/><rect x="125" y="5" width="2" height="1" fill="#0007a0"/><rect x="2" y="40" width="2" height="1" fill="#00058d"/><rect x="72" y="18" width="3" height="1" fill="#007fff"/><rect x="73" y="43" width="1" height="1" fill="#0008a9"/><rect x="33" y="28" width="1" height="1" fill="#0011ec"/><rect x="61" y="49" width="3" height="1" fill="#000485"/><rect x="88" y="28" width="3" height="1" fill="#000489"/><rect x="42" y="41" width="3" height="1" fill="#000487"/><rect x="49" y="44" width="2" height="2" fill="#0008a2"/><rect x="73" y="20" width="2" height="1" fill="#000590"/><rect x="58" y="19" width="2" height="2" fill="#000fda"/><rect x="122" y="21" width="1" height="1" fill="#00079f"/><rect x="49" y="8" width="1" height="1" fill="#000486"/><rect x="31" y="45" width="3" height="1" fill="#000483"/><rect x="77" y="13" width="2" height="1" fill="#0014ff"/><rect x="41" y="41" width="1" height="2" fill="#000ab2"/><rect x="19" y="42" width="2" height="1" fill="#000699"/><rect x="72" y="26" width="1" height="1" fill="#000ab8"/><rect x="15" y="42" width="1" height="2" fill="#004fff"/><rect x="121" y="22" width="3" height="1" fill="#000ab1"/><rect x="55" y="31" width="1" height="2" fill="#0013fe"/><rect x="53" y="10" width="3" height="2" fill="#000ed1"/><rect x="16" y="5" width="1" height="2" fill="#0008a5"/><rect x="79" y="12" width="1" height="1" fill="#000485"/><rect x="32" y="4" width="1" height="1" fill="#0012ef"/><rect x="85" y="31" width="3" height="1" fill="#0011e8"/><rect x="63" y="46" width="2" height="2" fill="#000483"/><rect x="14" y="8" width="3" height="1" fill="#000483"/><rect x="85" y="25" width="2" height="1" fill="#0065ff"/><rect x="62" y="47" width="2" height="1" fill="#000483"/><rect x="78" y="25" width="1" height="2" fill="#000484"/><rect x="36" y="26" width="3" height="1" fill="#0052ff"/><rect x="95" y="30" width="3" height="1" fill="#00069a"/><rect x="70" y="32" width="2" height="1" fill="#0009ab"/><rect x="40" y="30" width="2" height="1" fill="#000486"/><rect x="67" y="18" width="1" height="2" fill="#001fff"/><rect x="65" y="24" width="1" height="2" fill="#000483"/><rect x="55" y="49" width="2" height="1" fill="#000ed8"/><rect x="123" y="48" width="3" height="2" fill="#0008a4"/><rect x="117" y="37" width="1" height="2" fill="#000fdc"/><rect x="13" y="17" width="2" height="1" fill="#0013f8"/><rect x="70" y="20" width="3" height="1" fill="#000dcf"/><rect x="91" y="42" width="1" height="1" fill="#0013f8"/><rect x="84" y="28" width="3" height="1" fill="#007bff"/><rect x="116" y="1" width="2" height="2" fill="#000cc6"/><rect x="64" y="24" width="1" height="1" fill="#000488"/><rect x="65" y="48" width="2" height="1" fill="#00079e"/><rect x="70" y="6" width="3" height="1" fill="#000485"/><rect x="53" y="49" width="3" height="1" fill="#004aff"/><rect x="24" y="1" width="3" height="1" fill="#0069ff"/><rect x="38" y="37" width="1" height="1" fill="#002bff"/><rect x="79" y="46" width="1" height="1" fill="#000bba"/><rect x="19" y="37" width="2" height="2" fill="#00079c"/><rect x="58" y="37" width="1" height="1" fill="#0013fc"/><rect x="72" y="10" width="1" height="1" fill="#0077ff"/><rect x="88" y="1" width="1" height="1" fill="#0012f5"/><rect x="45" y="3" width="1" height="1" fill="#0036ff"/><rect x="35" y="14" width="3" height="1" fill="#0014ff"/><rect x="54" y="17" width="3" height="1" fill="#00058c"/><rect x="57" y="36" width="2" height="1" fill="#0045ff"/><rect x="97" y="27" width="2" height="1" fill="#0045ff"/><rect x="83" y="38" width="2" height="1" fill="#000486"/><rect x="81" y="22" width="1" height="2" fill="#000dc9"/><rect x="70" y="28" width="1" height="1" fill="#000bbc"/><rect x="98" y="20" width="2" height="1" fill="#0047ff"/><rect x="98" y="12" width="1" height="1" fill="#000697"/><rect x="19" y="22" width="1" height="1" fill="#000483"/><rect x="99" y="32" width="1" height="1" fill="#000484"/><rect x="54" y="9" width="3" height="2" fill="#0008a9"/><rect x="20" y="21" width="2" height="2" fill="#000bbf"/><rect x="36" y="37" width="2" height="1" fill="#0008a3"/><rect x="123" y="30" width="2" height="1" fill="#000cc1"/><rect x="33" y="19" width="1" height="1" fill="#0010e5"/><rect x="105" y="46" width="3" height="1" fill="#000591"/><rect x="58" y="36" width="1" height="2" fill="#0012ef"/><rect x="56" y="6" width="2" height="1" fill="#000488"/><rect x="52" y="49" width="1" height="1" fill="#000590"/><rect x="107" y="15" width="1" height="2" fill="#005aff"/><rect x="118" y="44" width="2" height="2" fill="#0034ff"/><rect x="19" y="9" width="2" height="1" fill="#000ed1"/><rect x="81" y="38" width="1" height="1" fill="#000dca"/><rect x="63" y="1" width="2" height="1" fill="#000dcb"/><rect x="111" y="35" width="1" height="1" fill="#000fde"/><rect x="10" y="4" width="1" height="1" fill="#0012f4"/><rect x="9" y="35" width="1" height="1" fill="#000483"/><rect x="72" y="2" width="1" height="1" fill="#000bbd"/><rect x="90" y="46" width="3" height="1" fill="#000cc1"/><rect x="26" y="16" width="2" height="1" fill="#000489"/><rect x="16" y="0" width="2" height="2" fill="#000483"/><rect x="61" y="16" width="2" height="1" fill="#000488"/><rect x="3" y="2" width="2" height="2" fill="#0009b1"/><rect x="34" y="2" width="3" height="1" fill="#0010e5"/><rect x="7" y="40" width="3" height="1" fill="#0012f0"/><rect x="91" y="45" width="1" height="1" fill="#0042ff"/><rect x="124" y="38" width="1" height="1" fill="#005bff"/><rect x="65" y="19" width="2" height="1" fill="#0062ff"/><rect x="23" y="34" width="3" height="1" fill="#0080ff"/><rect x="62" y="3" width="2" height="1" fill="#000590"/><rect x="92" y="4" width="2" height="1" fill="#000486"/><rect x="67" y="13" width="2" height="2" fill="#000483"/><rect x="29" y="44" width="2" height="1" fill="#00079b"/><rect x="5" y="36" width="1" height="1" fill="#000ed5"/><rect x="94" y="40" width="2" height="1" fill="#0013fa"/><rect x="111" y="2" width="2" height="2" fill="#00048a"/><rect x="31" y="23" width="2" height="1" fill="#0046ff"/><rect x="31" y="33" width="2" height="2" fill="#0058ff"/><rect x="48" y="47" width="2" height="1" fill="#000483"/><rect x="77" y="2" width="3" height="1" fill="#000484"/><rect x="120" y="47" width="3" height="2" fill="#0008a5"/><rect x="39" y="8" width="1" height="1" fill="#000695"/><rect x="79" y="13" width="3" height="1" fill="#00079e"/><rect x="126" y="52" width="1" height="1" fill="#000483"/><rect x="30" y="52" width="1" height="2" fill="#003dff"/><rect x="111" y="31" width="2" height="1" fill="#000bbf"/><rect x="63" y="38" width="2" height="1" fill="#000bbb"/><rect x="8" y="30" width="3" height="1" fill="#0011e9"/><rect x="57" y="32" width="1" height="1" fill="#000dcc"/><rect x="61" y="39" width="1" height="1" fill="#000486"/><rect x="78" y="4" width="1" height="1" fill="#000bbd"/><rect x="10" y="27" width="1" height="1" fill="#000698"/><rect x="17" y="17" width="3" height="1" fill="#000693"/><rect x="120" y="6" width="3" height="1" fill="#0010e2"/><rect x="39" y="37" width="1" height="1" fill="#0078ff"/><rect x="36" y="45" width="1" height="1" fill="#000dca"/><rect x="86" y="13" width="3" height="1" fill="#000486"/><rect x="69" y="6" width="2" height="1" fill="#0021ff"/><rect x="27" y="20" width="3" height="1" fill="#000483"/><rect x="29" y="5" width="2" height="2" fill="#007bff"/><rect x="48" y="49" width="2" height="1" fill="#00079a"/><rect x="101" y="29" width="3" height="1" fill="#000489"/><rect x="118" y="24" width="2" height="1" fill="#000483"/><rect x="42" y="5" width="1" height="1" fill="#000ed3"/><rect x="41" y="25" width="1" height="1" fill="#0011ef"/><rect x="96" y="44" width="1" height="2" fill="#0051ff"/><rect x="0" y="25" width="2" height="1" fill="#006cff"/><rect x="107" y="33" width="1" height="1" fill="#00048a"/><rect x="123" y="47" width="2" height="1" fill="#000485"/><rect x="44" y="13" width="2" height="2" fill="#0008a4"/><rect x="9" y="23" width="2" height="2" fill="#0008a3"/><rect x="8" y="17" width="1" height="2" fill="#0009ac"/><rect x="12" y="12" width="2" height="2" fill="#000dc9"/><rect x="65" y="19" width="2" height="1" fill="#000ed7"/><rect x="64" y="49" width="1" height="2" fill="#000484"/><rect x="86" y="17" width="1" height="1" fill="#0012f1"/><rect x="84" y="10" width="3" height="1" fill="#000cc2"/><rect x="100" y="6" width="1" height="1" fill="#000486"/><rect x="92" y="12" width="2" height="1" fill="#0011ef"/><rect x="94" y="47" width="3" height="1" fill="#000692"/><rect x="82" y="7" width="1" height="1" fill="#000693"/><rect x="43" y="27" width="3" height="2" fill="#0018ff"/><rect x="79" y="51" width="3" height="1" fill="#000695"/><rect x="96" y="34" width="1" height="1" fill="#0030ff"/><rect x="14" y="18" width="2" height="2" fill="#000cc3"/><rect x="84" y="17" width="1" height="1" fill="#0013fe"/><rect x="10" y="38" width="1" height="1" fill="#000bbb"/><rect x="121" y="13" width="2" height="1" fill="#000483"/><rect x="126" y="51" width="2" height="1" fill="#000489"/><rect x="26" y="11" width="2" height="1" fill="#00079c"/><rect x="62" y="5" width="1" height="2" fill="#0029ff"/><rect x="67" y="19" width="2" height="2" fill="#000486"/><rect x="21" y="47" width="1" height="1" fill="#00069a"/><rect x="91" y="27" width="2" height="1" fill="#0009ae"/><rect x="13" y="28" width="2" height="2" fill="#000bbf"/><rect x="0" y="36" width="2" height="1" fill="#000693"/><rect x="3" y="20" width="2" height="1" fill="#003fff"/><rect x="18" y="46" width="3" height="1" fill="#0058ff"/><rect x="101" y="20" width="3" height="1" fill="#000487"/><rect x="71" y="30" width="2" height="2" fill="#000cc4"/><rect x="84" y="51" width="3" height="1" fill="#000ab5"/><rect x="28" y="2" width="2" height="1" fill="#0009ac"/><rect x="105" y="3" width="3" height="2" fill="#004eff"/><rect x="76" y="51" width="1" height="1" fill="#000ab7"/><rect x="126" y="41" width="2" height="1" fill="#0074ff"/><rect x="117" y="33" width="2" height="1" fill="#000487"/><rect x="79" y="39" width="1" height="1" fill="#0063ff"/><rect x="64" y="19" width="1" height="1" fill="#000bbb"/><rect x="116" y="11" width="3" height="2" fill="#00058b"/><rect x="69" y="43" width="1" height="1" fill="#0012f0"/><rect x="28" y="18" width="2" height="1" fill="#000ed5"/><rect x="70" y="14" width="2" height="1" fill="#00079b"/><rect x="62" y="3" width="1" height="1" fill="#00048a"/><rect x="122" y="33" width="2" height="1" fill="#0073ff"/><rect x="51" y="39" width="1" height="2" fill="#007aff"/><rect x="111" y="29" width="2" height="1" fill="#000483"/><rect x="67" y="6" width="2" height="2" fill="#00058c"/><rect x="63" y="7" width="2" height="2" fill="#000bbd"/><rect x="126" y="41" width="2" height="1" fill="#000590"/><rect x="106" y="19" width="2" height="2" fill="#00058f"/><rect x="57" y="19" width="1" height="1" fill="#000487"/><rect x="8" y="7" width="2" height="1" fill="#000fd9"/><rect x="104" y="34" width="2" height="1" fill="#000cc1"/><rect x="112" y="16" width="3" height="2" fill="#000488"/><rect x="125" y="20" width="1" height="1" fill="#0011ef"/><rect x="77" y="32" width="1" height="1" fill="#000484"/><rect x="48" y="28" width="3" height="1" fill="#000ed1"/><rect x="45" y="44" width="3" height="1" fill="#001bff"/><rect x="19" y="46" width="2" height="1" fill="#0063ff"/><rect x="118" y="20" width="2" height="1" fill="#002eff"/><rect x="58" y="28" width="1" height="2" fill="#000698"/><rect x="16" y="28" width="3" height="1" fill="#000cc5"/><rect x="8" y="14" width="1" height="1" fill="#000486"/><rect x="64" y="17" width="2" height="1" fill="#000ab5"/><rect x="123" y="16" width="1" height="1" fill="#00079c"/><rect x="47" y="6" width="2" height="1" fill="#000fdf"/><rect x="120" y="45" width="2" height="1" fill="#000483"/><rect x="44" y="34" width="1" height="2" fill="#000ed3"/><rect x="115" y="50" width="1" height="1" fill="#007dff"/><rect x="92" y="34" width="1" height="1" fill="#000ed6"/><rect x="45" y="35" width="1" height="2" fill="#0008a6"/><rect x="11" y="41" width="2" height="1" fill="#00079f"/><rect x="60" y="45" width="3" height="1" fill="#004aff"/><rect x="51" y="52" width="1" height="1" fill="#0011e8"/><rect x="85" y="2" width="1" height="1" fill="#000bc0"/><rect x="33" y="31" width="2" height="1" fill="#00079b"/><rect x="3" y="43" width="2" height="1" fill="#000483"/><rect x="85" y="9" width="2" height="1" fill="#000ab3"/><rect x="103" y="33" width="2" height="1" fill="#000dcd"/><rect x="75" y="3" width="3" height="1" fill="#000cc3"/><rect x="57" y="12" width="2" height="1" fill="#0009b1"/><rect x="49" y="38" width="1" height="1" fill="#000483"/><rect x="87" y="13" width="1" height="2" fill="#0013fc"/><rect x="75" y="13" width="2" height="1" fill="#003aff"/><rect x="1" y="2" width="1" height="1" fill="#0079ff"/><rect x="43" y="6" width="2" height="1" fill="#00058f"/><rect x="102" y="28" width="3" height="1" fill="#0020ff"/><rect x="24" y="14" width="1" height="2" fill="#000bbe"/><rect x="55" y="30" width="2" height="1" fill="#000488"/><rect x="1" y="52" width="1" height="2" fill="#000484"/><rect x="28" y="14" width="3" height="1" fill="#00079d"/><rect x="48" y="16" width="1" height="1" fill="#0013f8"/><rect x="70" y="13" width="1" height="2" fill="#000ed7"/><rect x="110" y="11" width="2" height="2" fill="#00058c"/><rect x="23" y="21" width="1" height="1" fill="#006cff"/><rect x="121" y="26" width="1" height="1" fill="#0083ff"/><rect x="95" y="11" width="2" height="1" fill="#00079b"/><rect x="55" y="43" width="3" height="1" fill="#000cc2"/><rect x="71" y="48" width="2" height="1" fill="#0008a4"/><rect x="9" y="31" width="2" height="1" fill="#00058c"/><rect x="80" y="51" width="2" height="1" fill="#000bbb"/><rect x="90" y="6" width="3" height="1" fill="#000488"/><rect x="62" y="37" width="1" height="1" fill="#000485"/><rect x="48" y="40" width="1" height="2" fill="#001cff"/><rect x="11" y="28" width="2" height="1" fill="#002cff"/><rect x="18" y="3" width="1" height="2" fill="#0008a3"/><rect x="86" y="24" width="1" height="1" fill="#000ab3"/><rect x="10" y="35" width="1" height="2" fill="#000483"/><rect x="123" y="17" width="2" height="2" fill="#000591"/><rect x="114" y="33" width="3" height="1" fill="#000487"/><rect x="126" y="41" width="1" height="1" fill="#0014ff"/><rect x="40" y="31" width="1" height="1" fill="#00079f"/><rect x="105" y="24" width="3" height="1" fill="#000ed3"/><rect x="115" y="42" width="1" height="1" fill="#000484"/><rect x="122" y="51" width="2" height="1" fill="#000487"/><rect x="43" y="27" width="1" height="1" fill="#0009aa"/><rect x="69" y="35" width="2" height="1" fill="#0052ff"/><rect x="6" y="52" width="1" height="2" fill="#000590"/><rect x="10" y="6" width="1" height="2" fill="#00058d"/><rect x="60" y="15" width="1" height="2" fill="#0008a3"/><rect x="8" y="27" width="2" height="1" fill="#000dcd"/><rect x="71" y="9" width="2" height="1" fill="#000483"/><rect x="35" y="37" width="2" height="1" fill="#0011e7"/><rect x="17" y="17" width="1" height="1" fill="#003dff"/><rect x="48" y="32" width="3" height="1" fill="#0008a2"/><rect x="96" y="14" width="1" height="1" fill="#000485"/><rect x="8" y="10" width="1" height="1" fill="#00079e"/><rect x="79" y="35" width="3" height="1" fill="#002aff"/><rect x="38" y="45" width="1" height="1" fill="#00058b"/><rect x="36" y="0" width="1" height="1" fill="#000483"/><rect x="86" y="25" width="3" height="1" fill="#000488"/><rect x="49" y="10" width="1" height="1" fill="#0008a6"/><rect x="126" y="29" width="3" height="2" fill="#0043ff"/><rect x="88" y="43" width="1" height="1" fill="#000483"/><rect x="54" y="29" width="1" height="2" fill="#0009b1"/><rect x="19" y="17" width="2" height="1" fill="#000483"/><rect x="124" y="33" width="1" height="2" fill="#000698"/><rect x="0" y="6" width="1" height="1" fill="#00079c"/><rect x="65" y="34" width="1" height="1" fill="#00058d"/><rect x="67" y="31" width="2" height="1" fill="#002dff"/><rect x="44" y="49" width="1" height="2" fill="#000bba"/><rect x="50" y="28" width="1" height="1" fill="#000ab2"/><rect x="41" y="19" width="2" height="2" fill="#000483"/><rect x="73" y="25" width="3" height="1" fill="#0011ec"/><rect x="91" y="0" width="1" height="1" fill="#000483"/><rect x="23" y="37" width="1" height="1" fill="#0049ff"/><rect x="10" y="31" width="2" height="1" fill="#0036ff"/><rect x="17" y="35" width="1" height="1" fill="#000699"/><rect x="25" y="51" width="1" height="1" fill="#000591"/><rect x="6" y="38" width="1" height="1" fill="#0009aa"/><rect x="62" y="21" width="1" height="1" fill="#0012f2"/><rect x="26" y="2" width="2" height="1" fill="#0036ff"/><rect x="41" y="29" width="3" height="2" fill="#000ab6"/><rect x="91" y="10" width="1" height="1" fill="#000486"/><rect x="80" y="25" width="1" height="1" fill="#0039ff"/><rect x="94" y="48" width="2" height="1" fill="#0010e1"/><rect x="6" y="42" width="2" height="1" fill="#000dd0"/><rect x="27" y="47" width="1" height="1" fill="#000ab6"/><rect x="115" y="50" width="1" height="2" fill="#0034ff"/><rect x="103" y="45" width="1" height="1" fill="#007fff"/><rect x="103" y="4" width="2" height="2" fill="#000486"/><rect x="1" y="42" width="2" height="1" fill="#000484"/><rect x="77" y="48" width="2" height="1" fill="#0066ff"/><rect x="3" y="48" width="2" height="1" fill="#000fde"/><rect x="20" y="18" width="1" height="1" fill="#000fd8"/><rect x="49" y="3" width="3" height="1" fill="#0022ff"/><rect x="105" y="8" width="1" height="1" fill="#0013f8"/><rect x="43" y="5" width="2" height="2" fill="#0027ff"/><rect x="75" y="15" width="1" height="1" fill="#000486"/><rect x="30" y="35" width="3" height="1" fill="#00058f"/><rect x="118" y="52" width="2" height="1" fill="#000ed2"/><rect x="5" y="32" width="2" height="2" fill="#000483"/><rect x="43" y="1" width="1" height="1" fill="#0032ff"/><rect x="57" y="22" width="1" height="1" fill="#0010e6"/><rect x="54" y="0" width="1" height="1" fill="#0010e3"/><rect x="80" y="32" width="3" height="1" fill="#0012f1"/><rect x="36" y="36" width="2" height="1" fill="#000cc7"/><rect x="120" y="18" width="3" height="1" fill="#0042ff"/><rect x="11" y="28" width="3" height="1" fill="#0008a7"/><rect x="51" y="26" width="1" height="2" fill="#000483"/><rect x="75" y="33" width="2" height="1" fill="#000699"/><rect x="92" y="35" width="2" height="1" fill="#000ed5"/><rect x="86" y="0" width="1" height="2" fill="#0008a8"/><rect x="125" y="52" width="2" height="1" fill="#0016ff"/><rect x="22" y="1" width="2" height="1" fill="#0009af"/><rect x="84" y="22" width="1" height="1" fill="#000487"/><rect x="2" y="20" width="2" height="1" fill="#0034ff"/><rect x="36" y="16" width="2" height="1" fill="#000dca"/><rect x="56" y="45" width="2" height="1" fill="#00048a"/><rect x="46" y="1" width="1" height="1" fill="#0012f5"/><rect x="104" y="19" width="1" height="2" fill="#000bbf"/><rect x="51" y="24" width="1" height="1" fill="#000484"/><rect x="105" y="49" width="2" height="1" fill="#000bbc"/><rect x="40" y="18" width="1" height="1" fill="#000484"/><rect x="1" y="2" width="2" height="1" fill="#0010e7"/><rect x="116" y="32" width="2" height="1" fill="#000693"/><rect x="80" y="42" width="1" height="2" fill="#0008a7"/><rect x="94" y="18" width="1" height="1" fill="#00058f"/><rect x="28" y="13" width="1" height="1" fill="#000485"/><rect x="2" y="3" width="1" height="2" fill="#0055ff"/><rect x="114" y="50" width="3" height="1" fill="#000ab8"/><rect x="35" y="16" width="2" height="2" fill="#0013fa"/><rect x="43" y="48" width="2" height="1" fill="#0010e3"/><rect x="110" y="47" width="1" height="1" fill="#000487"/><rect x="20" y="5" width="1" height="1" fill="#000483"/><rect x="5" y="30" width="2" height="1" fill="#000692"/><rect x="28" y="1" width="1" height="1" fill="#000483"/><rect x="1" y="10" width="1" height="1" fill="#000483"/><rect x="32" y="2" width="3" height="1" fill="#00058f"/><rect x="14" y="30" width="1" height="1" fill="#000697"/><rect x="81" y="8" width="1" height="1" fill="#000485"/><rect x="16" y="20" width="2" height="1" fill="#0009af"/><rect x="71" y="4" width="3" height="2" fill="#001bff"/><rect x="16" y="41" width="1" height="1" fill="#000694"/><rect x="106" y="36" width="1" height="1" fill="#000483"/><rect x="40" y="19" width="1" height="1" fill="#000483"/><rect x="112" y="24" width="1" height="2" fill="#0013f8"/><rect x="89" y="8" width="1" height="1" fill="#003cff"/><rect x="99" y="1" width="2" height="1" fill="#000ab1"/><rect x="52" y="40" width="1" height="2" fill="#000692"/><rect x="110" y="39" width="1" height="2" fill="#0009b1"/><rect x="23" y="21" width="2" height="1" fill="#000483"/><rect x="112" y="9" width="1" height="1" fill="#000697"/><rect x="2" y="40" width="2" height="2" fill="#007aff"/><rect x="6" y="40" width="2" height="1" fill="#00058f"/><rect x="5" y="47" width="1" height="1" fill="#0046ff"/><rect x="102" y="24" width="2" height="2" fill="#000dcc"/><rect x="93" y="23" width="1" height="2" fill="#00048a"/><rect x="80" y="17" width="1" height="1" fill="#000cc6"/><rect x="71" y="12" width="2" height="1" fill="#000ab2"/><rect x="122" y="27" width="2" height="1" fill="#000483"/><rect x="17" y="40" width="1" height="2" fill="#0067ff"/><rect x="61" y="28" width="1" height="1" fill="#000dc9"/><rect x="107" y="32" width="1" height="1" fill="#00058b"/><rect x="59" y="48" width="1" height="1" fill="#000ab4"/><rect x="84" y="46" width="1" height="2" fill="#000ab8"/><rect x="85" y="26" width="3" height="1" fill="#0014ff"/><rect x="10" y="29" width="1" height="2" fill="#0012f3"/><rect x="95" y="10" width="2" height="1" fill="#004bff"/><rect x="55" y="41" width="3" height="1" fill="#000489"/><rect x="110" y="42" width="3" height="1" fill="#000487"/><rect x="25" y="4" width="3" height="1" fill="#000483"/><rect x="73" y="23" width="3" height="2" fill="#000bbd"/><rect x="74" y="38" width="2" height="1" fill="#00058c"/><rect x="61" y="8" width="1" height="1" fill="#000ab1"/><rect x="116" y="0" width="1" height="1" fill="#000bbd"/><rect x="103" y="42" width="2" height="2" fill="#00048a"/><rect x="52" y="7" width="1" height="1" fill="#000dcd"/><rect x="102" y="33" width="3" height="2" fill="#001dff"/><rect x="42" y="24" width="2" height="1" fill="#00058b"/><rect x="5" y="50" width="2" height="1" fill="#0008a4"/><rect x="91" y="36" width="1" height="2" fill="#000590"/><rect x="104" y="9" width="2" height="2" fill="#000483"/><rect x="77" y="2" width="1" height="1" fill="#002aff"/><rect x="36" y="32" width="3" height="1" fill="#0011e8"/><rect x="27" y="17" width="1" height="1" fill="#0007a1"/><rect x="59" y="11" width="3" height="1" fill="#0012f5"/><rect x="11" y="0" width="3" height="1" fill="#000692"/><rect x="15" y="9" width="3" height="1" fill="#0024ff"/><rect x="83" y="3" width="1" height="1" fill="#0080ff"/><rect x="68" y="25" width="2" height="1" fill="#0068ff"/><rect x="21" y="23" width="2" height="2" fill="#000cc8"/><rect x="97" y="19" width="1" height="1" fill="#004cff"/><rect x="69" y="50" width="2" height="2" fill="#000483"/><rect x="104" y="4" width="2" height="2" fill="#000cc4"/><rect x="74" y="26" width="1" height="1" fill="#0064ff"/><rect x="106" y="47" width="2" height="1" fill="#000483"/><rect x="105" y="49" width="3" height="1" fill="#000483"/><rect x="81" y="43" width="1" height="1" fill="#000483"/><rect x="32" y="49" width="3" height="2" fill="#007aff"/><rect x="63" y="11" width="2" height="1" fill="#000cc5"/><rect x="17" y="19" width="2" height="1" fill="#0054ff"/><rect x="81" y="24" width="3" height="1" fill="#000483"/><rect x="54" y="25" width="3" height="2" fill="#000483"/><rect x="70" y="44" width="2" height="1" fill="#0013fd"/><rect x="77" y="24" width="3" height="1" fill="#0019ff"/><rect x="124" y="38" width="2" height="1" fill="#000485"/><rect x="49" y="47" width="3" height="2" fill="#004bff"/><rect x="56" y="24" width="2" height="2" fill="#000ab3"/><rect x="53" y="3" width="2" height="2" fill="#000485"/><rect x="41" y="5" width="2" height="2" fill="#00058d"/><rect x="100" y="7" width="1" height="1" fill="#005cff"/><rect x="123" y="5" width="1" height="1" fill="#0060ff"/><rect x="80" y="24" width="1" height="2" fill="#000484"/><rect x="10" y="0" width="1" height="1" fill="#000cc8"/><rect x="85" y="40" width="1" height="1" fill="#000483"/><rect x="45" y="31" width="1" height="1" fill="#0045ff"/><rect x="109" y="24" width="1" height="1" fill="#0012f5"/><rect x="33" y="3" width="1" height="1" fill="#000592"/><rect x="115" y="26" width="1" height="1" fill="#000cc2"/><rect x="104" y="11" width="1" height="2" fill="#000489"/><rect x="33" y="41" width="1" height="1" fill="#00079c"/><rect x="77" y="36" width="2" height="1" fill="#0015ff"/><rect x="113" y="49" width="1" height="1" fill="#000489"/><rect x="92" y="27" width="3" height="1" fill="#000483"/><rect x="57" y="17" width="1" height="1" fill="#003aff"/><rect x="101" y="12" width="1" height="2" fill="#001cff"/><rect x="97" y="2" width="3" height="2" fill="#000590"/><rect x="46" y="35" width="2" height="1" fill="#000483"/><rect x="27" y="37" width="1" height="1" fill="#00058d"/><rect x="82" y="3" width="2" height="1" fill="#000ab9"/><rect x="7" y="37" width="1" height="1" fill="#0008a4"/><rect x="49" y="42" width="2" height="1" fill="#004fff"/><rect x="68" y="12" width="3" height="1" fill="#0009ae"/><rect x="4" y="12" width="3" height="1" fill="#000fda"/><rect x="107" y="33" width="1" height="1" fill="#000489"/><rect x="0" y="28" width="2" height="1" fill="#0010e4"/><rect x="33" y="10" width="2" height="2" fill="#000bba"/><rect x="49" y="1" width="1" height="1" fill="#0010e5"/><rect x="19" y="9" width="3" height="2" fill="#0010e1"/><rect x="66" y="29" width="3" height="1" fill="#000483"/><rect x="48" y="21" width="1" height="1" fill="#000bbb"/><rect x="92" y="39" width="1" height="1" fill="#0007a0"/><rect x="59" y="23" width="1" height="1" fill="#000487"/><rect x="55" y="52" width="1" height="1" fill="#003fff"/><rect x="27" y="26" width="2" height="1" fill="#0008a6"/><rect x="77" y="27" width="1" height="2" fill="#000ed7"/><rect x="33" y="16" width="2" height="2" fill="#000485"/><rect x="125" y="40" width="3" height="1" fill="#000dc9"/><rect x="30" y="26" width="2" height="2" fill="#0069ff"/><rect x="68" y="47" width="3" height="1" fill="#0046ff"/><rect x="25" y="27" width="3" height="1" fill="#007eff"/><rect x="33" y="0" width="2" height="1" fill="#0045ff"/><rect x="22" y="29" width="2" height="1" fill="#003eff"/><rect x="29" y="5" width="3" height="1" fill="#000484"/><rect x="120" y="50" width="2" height="2" fill="#000485"/><rect x="8" y="13" width="3" height="1" fill="#00058f"/><rect x="43" y="36" width="1" height="1" fill="#00058d"/><rect x="14" y="30" width="2" height="1" fill="#000489"/><rect x="109" y="39" width="2" height="2" fill="#0011eb"/><rect x="14" y="22" width="2" height="1" fill="#00058d"/><rect x="55" y="37" width="3" height="1" fill="#0053ff"/><rect x="17" y="6" width="2" height="1" fill="#0012f0"/><rect x="94" y="18" width="2" height="1" fill="#000bc0"/><rect x="45" y="21" width="3" height="1" fill="#000483"/><rect x="73" y="28" width="1" height="2" fill="#0009ac"/><rect x="115" y="11" width="2" height="2" fill="#0012f7"/><rect x="103" y="44" width="1" height="1" fill="#000487"/><rect x="55" y="17" width="3" height="1" fill="#000487"/><rect x="98" y="7" width="2" height="2" fill="#000484"/><rect x="24" y="22" width="2" height="1" fill="#001eff"/><rect x="41" y="30" width="2" height="1" fill="#000fde"/><rect x="42" y="7" width="3" height="1" fill="#000486"/><rect x="103" y="13" width="2" height="1" fill="#000489"/><rect x="89" y="12" width="2" height="1" fill="#0008a5"/><rect x="18" y="42" width="3" height="1" fill="#000cc2"/><rect x="124" y="36" width="2" height="2" fill="#0009ae"/><rect x="121" y="21" width="2" height="1" fill="#000ab1"/><rect x="76" y="20" width="3" height="1" fill="#0009b1"/><rect x="9" y="32" width="2" height="2" fill="#0009b0"/><rect x="106" y="24" width="1" height="1" fill="#00079f"/><rect x="65" y="39" width="1" height="1" fill="#000cc1"/><rect x="35" y="37" width="2" height="2" fill="#00058b"/><rect x="59" y="49" width="2" height="1" fill="#0009ad"/><rect x="70" y="34" width="1" height="1" fill="#00058d"/><rect x="25" y="52" width="2" height="1" fill="#000591"/><rect x="112" y="24" width="1" height="1" fill="#000483"/><rect x="47" y="36" width="3" height="2" fill="#000ed6"/><rect x="8" y="40" width="3" height="1" fill="#000483"/></pattern><linearGradient id="bg1" gradientUnits="userSpaceOnUse" x1="0" y1="167.2" x2="0" y2="322.6"><stop offset="0.0000" stop-color="#000019"/><stop offset="0.2831" stop-color="#000019"/><stop offset="0.2960" stop-color="#000032"/><stop offset="0.3411" stop-color="#000025"/><stop offset="0.3604" stop-color="#000007"/><stop offset="0.6113" stop-color="#000007"/><stop offset="0.6435" stop-color="#000019"/><stop offset="0.6950" stop-color="#000019"/><stop offset="0.7207" stop-color="#000012"/><stop offset="0.7786" stop-color="#000032"/><stop offset="0.8816" stop-color="#000032"/></linearGradient><linearGradient id="dn1" gradientUnits="userSpaceOnUse" x1="0" y1="167.2" x2="0" y2="322.6"><stop offset="0.0000" stop-color="#999999"/><stop offset="0.0386" stop-color="#666666"/><stop offset="0.1931" stop-color="#383838"/><stop offset="0.2896" stop-color="#333333"/><stop offset="0.3346" stop-color="#333333"/><stop offset="0.3732" stop-color="#070707"/><stop offset="0.5920" stop-color="#070707"/><stop offset="0.6306" stop-color="#1e1e1e"/><stop offset="0.7079" stop-color="#1e1e1e"/><stop offset="0.7786" stop-color="#474747"/><stop offset="0.8816" stop-color="#4c4c4c"/></linearGradient><linearGradient id="bg2" gradientUnits="userSpaceOnUse" x1="0" y1="332.4" x2="0" y2="487.7"><stop offset="0.0000" stop-color="#000012"/><stop offset="0.1610" stop-color="#00001f"/><stop offset="0.2447" stop-color="#00004b"/><stop offset="0.3220" stop-color="#0007a2"/><stop offset="0.3992" stop-color="#000ab1"/><stop offset="0.4250" stop-color="#000692"/><stop offset="0.5151" stop-color="#000483"/><stop offset="0.5409" stop-color="#00002b"/><stop offset="0.6310" stop-color="#000032"/><stop offset="0.6504" stop-color="#000692"/><stop offset="0.7856" stop-color="#000692"/><stop offset="0.8242" stop-color="#000057"/><stop offset="0.8435" stop-color="#00002b"/><stop offset="0.9015" stop-color="#000032"/><stop offset="0.9079" stop-color="#0014ff"/></linearGradient><linearGradient id="dn2" gradientUnits="userSpaceOnUse" x1="0" y1="332.4" x2="0" y2="487.7"><stop offset="0.0000" stop-color="#3f3f3f"/><stop offset="0.1610" stop-color="#383838"/><stop offset="0.2576" stop-color="#8c8c8c"/><stop offset="0.3220" stop-color="#cccccc"/><stop offset="0.3992" stop-color="#d8d8d8"/><stop offset="0.4250" stop-color="#b2b2b2"/><stop offset="0.5151" stop-color="#a5a5a5"/><stop offset="0.5409" stop-color="#4c4c4c"/><stop offset="0.6310" stop-color="#4c4c4c"/><stop offset="0.6504" stop-color="#bfbfbf"/><stop offset="0.7856" stop-color="#b2b2b2"/><stop offset="0.8242" stop-color="#7f7f7f"/><stop offset="0.8435" stop-color="#4c4c4c"/><stop offset="0.9015" stop-color="#595959"/><stop offset="0.9079" stop-color="#4c4c4c"/></linearGradient><mask id="mk1" maskUnits="userSpaceOnUse" x="79" y="167.2" width="613.5" height="155.4"><rect x="79" y="167.2" width="613.5" height="155.4" fill="url(#dn1)"/></mask><mask id="mk2" maskUnits="userSpaceOnUse" x="79" y="332.4" width="613.5" height="155.3"><rect x="79" y="332.4" width="613.5" height="155.3" fill="url(#dn2)"/></mask><filter id="bl" x="0" y="0" width="1" height="1"><feGaussianBlur stdDeviation="0.3"/></filter></defs><g filter="url(#bl)"><rect x="79" y="167.2" width="613.5" height="155.4" fill="url(#bg1)"/><rect x="79" y="167.2" width="613.5" height="155.4" fill="url(#spA)" mask="url(#mk1)"/><rect x="79" y="268.6" width="86" height="6.6" fill="#0614a0" opacity="0.45"/><rect x="79" y="268.6" width="86" height="6.6" fill="url(#spB)" opacity="0.9"/><rect x="181" y="268.6" width="55" height="6.6" fill="#0614a0" opacity="0.45"/><rect x="181" y="268.6" width="55" height="6.6" fill="url(#spB)" opacity="0.9"/><rect x="249" y="268.6" width="108" height="6.6" fill="#0614a0" opacity="0.45"/><rect x="249" y="268.6" width="108" height="6.6" fill="url(#spB)" opacity="0.9"/><rect x="381" y="268.6" width="34" height="6.6" fill="#0614a0" opacity="0.45"/><rect x="381" y="268.6" width="34" height="6.6" fill="url(#spB)" opacity="0.9"/><rect x="423" y="268.6" width="113" height="6.6" fill="#0614a0" opacity="0.45"/><rect x="423" y="268.6" width="113" height="6.6" fill="url(#spB)" opacity="0.9"/><rect x="561" y="268.6" width="63" height="6.6" fill="#0614a0" opacity="0.45"/><rect x="561" y="268.6" width="63" height="6.6" fill="url(#spB)" opacity="0.9"/><rect x="641" y="268.6" width="51.5" height="6.6" fill="#0614a0" opacity="0.45"/><rect x="641" y="268.6" width="51.5" height="6.6" fill="url(#spB)" opacity="0.9"/><rect x="79" y="290" width="613.5" height="14.6" fill="#000a60" opacity="0.25"/><rect x="91.9" y="167.2" width="1.5" height="53.1" fill="url(#sN)"/><rect x="98.7" y="167.2" width="1.5" height="32.2" fill="url(#sN)"/><rect x="105.9" y="167.2" width="1" height="39.1" fill="url(#sN)"/><rect x="110.1" y="167.2" width="1.5" height="42.9" fill="url(#sB)"/><rect x="113" y="167.2" width="1.5" height="52.8" fill="url(#sB)"/><rect x="117.3" y="167.2" width="1" height="47.7" fill="url(#sN)"/><rect x="126.9" y="167.2" width="1.5" height="26.2" fill="url(#sB)"/><rect x="133.4" y="167.2" width="1.5" height="26" fill="url(#sB)"/><rect x="149.5" y="167.2" width="1.5" height="42.8" fill="url(#sB)"/><rect x="152.7" y="167.2" width="1.5" height="52" fill="url(#sN)"/><rect x="160.1" y="167.2" width="1" height="54.4" fill="url(#sN)"/><rect x="170.3" y="167.2" width="1" height="34.1" fill="url(#sB)"/><rect x="183.2" y="167.2" width="1" height="36.1" fill="url(#sN)"/><rect x="185.8" y="167.2" width="1.5" height="36.5" fill="url(#sN)"/><rect x="196.7" y="167.2" width="1" height="25.1" fill="url(#sB)"/><rect x="211.7" y="167.2" width="1" height="36.7" fill="url(#sB)"/><rect x="225.9" y="167.2" width="1.5" height="30.6" fill="url(#sN)"/><rect x="273.3" y="167.2" width="1" height="54.1" fill="url(#sB)"/><rect x="305.3" y="167.2" width="1.5" height="33.5" fill="url(#sN)"/><rect x="336.9" y="167.2" width="1.5" height="29.9" fill="url(#sB)"/><rect x="371.3" y="167.2" width="1" height="31.9" fill="url(#sB)"/><rect x="398.4" y="167.2" width="1" height="28.2" fill="url(#sB)"/><rect x="404.1" y="167.2" width="1.5" height="39.7" fill="url(#sN)"/><rect x="426.1" y="167.2" width="1" height="43.7" fill="url(#sN)"/><rect x="440.7" y="167.2" width="1" height="39.4" fill="url(#sB)"/><rect x="548.5" y="167.2" width="1.5" height="47.3" fill="url(#sN)"/><rect x="585.9" y="167.2" width="1" height="47.8" fill="url(#sB)"/><rect x="591.1" y="167.2" width="1.5" height="26.8" fill="url(#sN)"/><rect x="668.6" y="167.2" width="1.5" height="35.4" fill="url(#sB)"/><rect x="85.1" y="167.2" width="1" height="41.3" fill="url(#sC)"/><rect x="89.2" y="167.2" width="1" height="53.8" fill="url(#sC)"/><rect x="94.3" y="167.2" width="1.5" height="73.2" fill="url(#sG)"/><rect x="101.4" y="167.2" width="1.2" height="53.2" fill="url(#sC)"/><rect x="108" y="167.2" width="1.2" height="68.6" fill="url(#sG)"/><rect x="120.4" y="167.2" width="1" height="65.2" fill="url(#sC)"/><rect x="130.8" y="167.2" width="1.5" height="55.5" fill="url(#sG)"/><rect x="135.9" y="167.2" width="1.2" height="45.7" fill="url(#sG)"/><rect x="140.9" y="167.2" width="1" height="44.2" fill="url(#sC)"/><rect x="145.7" y="167.2" width="1.2" height="52.9" fill="url(#sC)"/><rect x="155.4" y="167.2" width="1.5" height="61" fill="url(#sG)"/><rect x="163.8" y="167.2" width="1.2" height="73.6" fill="url(#sG)"/><rect x="167.2" y="167.2" width="1" height="53.7" fill="url(#sC)"/><rect x="176.1" y="167.2" width="1.2" height="48.9" fill="url(#sG)"/><rect x="180.2" y="167.2" width="1.2" height="53.9" fill="url(#sC)"/><rect x="190.2" y="167.2" width="1" height="39.8" fill="url(#sC)"/><rect x="193.2" y="167.2" width="1.5" height="59.4" fill="url(#sG)"/><rect x="202.4" y="167.2" width="1.2" height="48.6" fill="url(#sG)"/><rect x="205.7" y="167.2" width="1.2" height="41.1" fill="url(#sC)"/><rect x="214.1" y="167.2" width="1.2" height="59.3" fill="url(#sG)"/><rect x="218.4" y="167.2" width="1" height="41.5" fill="url(#sC)"/><rect x="221.5" y="167.2" width="1.2" height="62.5" fill="url(#sG)"/><rect x="230.6" y="167.2" width="1.2" height="66.1" fill="url(#sG)"/><rect x="238.9" y="167.2" width="1" height="67.5" fill="url(#sC)"/><rect x="242.1" y="167.2" width="1.2" height="47.6" fill="url(#sG)"/><rect x="246.3" y="167.2" width="1" height="65.9" fill="url(#sC)"/><rect x="255.9" y="167.2" width="1.5" height="77.8" fill="url(#sR)"/><rect x="260.9" y="167.2" width="1.2" height="50.9" fill="url(#sG)"/><rect x="262.6" y="167.2" width="1.2" height="46.3" fill="url(#sC)"/><rect x="266.7" y="167.2" width="1.2" height="47.2" fill="url(#sC)"/><rect x="269.9" y="167.2" width="1.5" height="53.5" fill="url(#sG)"/><rect x="275.7" y="167.2" width="1.2" height="45.7" fill="url(#sC)"/><rect x="279.6" y="167.2" width="1.5" height="60.6" fill="url(#sG)"/><rect x="283.2" y="167.2" width="1" height="67.2" fill="url(#sC)"/><rect x="290.5" y="167.2" width="1.2" height="65.8" fill="url(#sG)"/><rect x="293.9" y="167.2" width="1" height="58.8" fill="url(#sC)"/><rect x="296.9" y="167.2" width="1.5" height="55.6" fill="url(#sG)"/><rect x="302.9" y="167.2" width="1" height="49.9" fill="url(#sC)"/><rect x="308.4" y="167.2" width="1.5" height="51" fill="url(#sG)"/><rect x="313.6" y="167.2" width="1" height="51.8" fill="url(#sC)"/><rect x="318.4" y="167.2" width="1.2" height="46.5" fill="url(#sG)"/><rect x="323.4" y="167.2" width="1.2" height="49.3" fill="url(#sC)"/><rect x="328.3" y="167.2" width="1.2" height="73.6" fill="url(#sG)"/><rect x="334.6" y="167.2" width="1.5" height="52.9" fill="url(#sG)"/><rect x="340.9" y="167.2" width="1.2" height="40.1" fill="url(#sC)"/><rect x="348.9" y="167.2" width="1.5" height="44.2" fill="url(#sG)"/><rect x="358.8" y="167.2" width="1.5" height="64.2" fill="url(#sG)"/><rect x="361.5" y="167.2" width="1" height="38.6" fill="url(#sC)"/><rect x="364.6" y="167.2" width="1.5" height="49.4" fill="url(#sG)"/><rect x="375.4" y="167.2" width="1.2" height="63.6" fill="url(#sC)"/><rect x="377" y="167.2" width="1.2" height="70.2" fill="url(#sG)"/><rect x="381.9" y="167.2" width="1.2" height="65.1" fill="url(#sC)"/><rect x="386.6" y="167.2" width="1.5" height="55.1" fill="url(#sG)"/><rect x="390.9" y="167.2" width="1.2" height="52.1" fill="url(#sC)"/><rect x="396" y="167.2" width="1" height="58.4" fill="url(#sC)"/><rect x="401.6" y="167.2" width="1.2" height="71.1" fill="url(#sG)"/><rect x="408.9" y="167.2" width="1.5" height="42.4" fill="url(#sG)"/><rect x="412.4" y="167.2" width="1" height="60.3" fill="url(#sC)"/><rect x="415.4" y="167.2" width="1.5" height="53.1" fill="url(#sR)"/><rect x="418.9" y="167.2" width="1.2" height="46.3" fill="url(#sC)"/><rect x="428.6" y="167.2" width="1.5" height="66.1" fill="url(#sG)"/><rect x="432.9" y="167.2" width="1" height="58.4" fill="url(#sC)"/><rect x="437.6" y="167.2" width="1.5" height="67" fill="url(#sG)"/><rect x="443.5" y="167.2" width="1.2" height="59.6" fill="url(#sG)"/><rect x="446.8" y="167.2" width="1.2" height="47.7" fill="url(#sC)"/><rect x="451.8" y="167.2" width="1" height="67" fill="url(#sC)"/><rect x="456.4" y="167.2" width="1.5" height="44.9" fill="url(#sG)"/><rect x="459.9" y="167.2" width="1.2" height="55.6" fill="url(#sG)"/><rect x="464.9" y="167.2" width="1" height="44.8" fill="url(#sC)"/><rect x="472.4" y="167.2" width="1.5" height="48.3" fill="url(#sG)"/><rect x="478.4" y="167.2" width="1" height="42.5" fill="url(#sC)"/><rect x="483.1" y="167.2" width="1.5" height="60.6" fill="url(#sG)"/><rect x="487.9" y="167.2" width="1.5" height="51.6" fill="url(#sG)"/><rect x="494" y="167.2" width="1" height="39.3" fill="url(#sC)"/><rect x="497.9" y="167.2" width="1.5" height="54.8" fill="url(#sG)"/><rect x="504.5" y="167.2" width="1.2" height="43" fill="url(#sG)"/><rect x="508.6" y="167.2" width="1.2" height="55.5" fill="url(#sC)"/><rect x="515.9" y="167.2" width="1.5" height="63.4" fill="url(#sG)"/><rect x="520.8" y="167.2" width="1.5" height="62.5" fill="url(#sG)"/><rect x="524.3" y="167.2" width="1" height="40.7" fill="url(#sC)"/><rect x="529.3" y="167.2" width="1" height="49.9" fill="url(#sC)"/><rect x="534" y="167.2" width="1.5" height="42.9" fill="url(#sG)"/><rect x="537.4" y="167.2" width="1.2" height="77.8" fill="url(#sR)"/><rect x="540.6" y="167.2" width="1.2" height="43.5" fill="url(#sC)"/><rect x="545.7" y="167.2" width="1" height="61" fill="url(#sC)"/><rect x="552.1" y="167.2" width="1.2" height="67.2" fill="url(#sC)"/><rect x="556" y="167.2" width="1.5" height="44.9" fill="url(#sG)"/><rect x="559.5" y="167.2" width="1.2" height="44.7" fill="url(#sC)"/><rect x="565.3" y="167.2" width="1.2" height="42.7" fill="url(#sG)"/><rect x="570.2" y="167.2" width="1.2" height="50.7" fill="url(#sG)"/><rect x="573.5" y="167.2" width="1.2" height="52.9" fill="url(#sC)"/><rect x="577.6" y="167.2" width="1.2" height="56.2" fill="url(#sC)"/><rect x="582.4" y="167.2" width="1.5" height="45" fill="url(#sG)"/><rect x="588.3" y="167.2" width="1.2" height="60.3" fill="url(#sC)"/><rect x="598.1" y="167.2" width="1.2" height="62.4" fill="url(#sC)"/><rect x="599.5" y="167.2" width="1.5" height="55.9" fill="url(#sG)"/><rect x="605.6" y="167.2" width="1" height="59.3" fill="url(#sC)"/><rect x="608.6" y="167.2" width="1.5" height="62.7" fill="url(#sG)"/><rect x="616" y="167.2" width="1.5" height="53.1" fill="url(#sG)"/><rect x="619.5" y="167.2" width="1" height="60.7" fill="url(#sC)"/><rect x="622.7" y="167.2" width="1.2" height="57.1" fill="url(#sG)"/><rect x="627.5" y="167.2" width="1.5" height="42.7" fill="url(#sG)"/><rect x="632.7" y="167.2" width="1" height="41.1" fill="url(#sC)"/><rect x="635" y="167.2" width="1.2" height="60.7" fill="url(#sG)"/><rect x="640.8" y="167.2" width="1.2" height="65.2" fill="url(#sC)"/><rect x="641.5" y="167.2" width="1.5" height="48.8" fill="url(#sG)"/><rect x="650.6" y="167.2" width="1.2" height="62.1" fill="url(#sC)"/><rect x="655.7" y="167.2" width="1" height="38.4" fill="url(#sC)"/><rect x="659.5" y="167.2" width="1.5" height="73" fill="url(#sG)"/><rect x="662.2" y="167.2" width="1" height="63.8" fill="url(#sC)"/><rect x="671.2" y="167.2" width="1.2" height="45.1" fill="url(#sG)"/><rect x="675.3" y="167.2" width="1.2" height="58" fill="url(#sC)"/><rect x="678.7" y="167.2" width="1" height="37.3" fill="url(#sC)"/><rect x="682.5" y="167.2" width="1.5" height="54.6" fill="url(#sG)"/><rect x="686.8" y="167.2" width="1.2" height="68.4" fill="url(#sG)"/><rect x="690.2" y="167.2" width="1" height="49" fill="url(#sC)"/><rect x="221.1" y="187.2" width="1.2" height="120.4" fill="#00d3e2" opacity="0.8"/><rect x="241.9" y="187.2" width="1.2" height="120.4" fill="#11ff5e" opacity="0.8"/><rect x="260.2" y="187.2" width="1.2" height="120.4" fill="#11ff5e" opacity="0.8"/><rect x="289.8" y="187.2" width="1.2" height="120.4" fill="#00d3e2" opacity="0.8"/><rect x="318.8" y="187.2" width="1.2" height="120.4" fill="#00ffaa" opacity="0.8"/><rect x="334.9" y="187.2" width="1.2" height="120.4" fill="#00d3e2" opacity="0.8"/><rect x="375.6" y="187.2" width="1.2" height="120.4" fill="#00d3e2" opacity="0.8"/><rect x="416" y="187.2" width="1.2" height="120.4" fill="#28ff00" opacity="0.8"/><rect x="514.9" y="187.2" width="1.2" height="120.4" fill="#00d3e2" opacity="0.8"/><rect x="537.9" y="187.2" width="1.2" height="120.4" fill="#00e2cf" opacity="0.8"/><rect x="556.9" y="197.2" width="1" height="110.4" fill="#0012ef" opacity="0.55"/><rect x="582.4" y="187.2" width="1.2" height="120.4" fill="#00d3e2" opacity="0.8"/><rect x="623" y="187.2" width="1.2" height="120.4" fill="#00d3e2" opacity="0.8"/><rect x="635.3" y="197.2" width="1" height="110.4" fill="#0012ef" opacity="0.55"/><rect x="682.4" y="187.2" width="1.2" height="120.4" fill="#00d3e2" opacity="0.8"/><rect x="81" y="197.2" width="1" height="110.4" fill="#0012ef" opacity="0.55"/><rect x="88.5" y="197.2" width="1" height="110.4" fill="#0012ef" opacity="0.55"/><rect x="108.3" y="197.2" width="1" height="110.4" fill="#0012ef" opacity="0.55"/><rect x="115.1" y="197.2" width="1" height="110.4" fill="#0012ef" opacity="0.55"/><rect x="131.5" y="197.2" width="1" height="110.4" fill="#0012ef" opacity="0.55"/><rect x="136.1" y="197.2" width="1" height="110.4" fill="#0012ef" opacity="0.55"/><rect x="164.4" y="197.2" width="1" height="110.4" fill="#0012ef" opacity="0.55"/><rect x="175.7" y="197.2" width="1" height="110.4" fill="#0012ef" opacity="0.55"/><rect x="194.5" y="197.2" width="1" height="110.4" fill="#0012ef" opacity="0.55"/><rect x="256.5" y="197.2" width="1" height="110.4" fill="#0012ef" opacity="0.55"/><rect x="274.2" y="197.2" width="1" height="110.4" fill="#0012ef" opacity="0.55"/><rect x="361.7" y="187.2" width="1.2" height="120.4" fill="#28ff00" opacity="0.8"/><rect x="438.9" y="197.2" width="1" height="110.4" fill="#0012ef" opacity="0.55"/><rect x="459.1" y="197.2" width="1" height="110.4" fill="#0012ef" opacity="0.55"/><rect x="500.1" y="197.2" width="1" height="110.4" fill="#0012ef" opacity="0.55"/><rect x="609.5" y="197.2" width="1" height="110.4" fill="#0012ef" opacity="0.55"/><rect x="686.1" y="197.2" width="1" height="110.4" fill="#0012ef" opacity="0.55"/><path d="M79 169.7h5.3M89.5 169.7h16M107.8 169.7h11.4M122.5 169.7h14.1M141.5 169.7h4.6M147.2 169.7h17.2M167.6 169.7h16M184.5 169.7h10.6M199.7 169.7h6.9M212.3 169.7h18.3M231.8 169.7h3.4M239 169.7h19M260.8 169.7h6.7M270.6 169.7h3.5M276.2 169.7h10.4M290.2 169.7h7M299.3 169.7h6.7M309.3 169.7h7.9M318.3 169.7h17.2M339.3 169.7h13.9M355.2 169.7h19.9M380.4 169.7h5.1M388.1 169.7h15.3M407.9 169.7h18.9M429.9 169.7h17.1M451.4 169.7h8.2M463.5 169.7h18M486.7 169.7h11.6M502.3 169.7h3.6M508.1 169.7h16.6M527.7 169.7h5.9M537.4 169.7h15M556.7 169.7h9.4M569.3 169.7h11.6M585.8 169.7h11.9M600.6 169.7h11.3M613.1 169.7h3.7M621.3 169.7h19.7M645 169.7h9.7M656.6 169.7h11.5M674 169.7h16.1" stroke="#0010e0" stroke-width="1" opacity="0.7" fill="none"/><path d="M79 213.7h144.7M227.6 213.7h36.8M265.6 213.7h130.3M399.1 213.7h110.4M511.4 213.7h102.7M616.9 213.7h75.6" stroke="#0010e0" stroke-width="1.3" opacity="0.55" fill="none"/><path d="M79 218.5h58.6M140.2 218.5h74.4M217.4 218.5h105.1M323.7 218.5h31.6M358.8 218.5h61.1M421.6 218.5h149.5M573.5 218.5h119" stroke="#0010e0" stroke-width="1.1" opacity="0.5" fill="none"/><path d="M79 239.5h69.8M171.9 239.5h83.6M283.9 239.5h79.2M391 239.5h22.3M428.9 239.5h95.5M544.9 239.5h92.1M643 239.5h49.5" stroke="#000ed0" stroke-width="1.1" opacity="0.7" fill="none"/><path d="M79 264.3h127.3M214.8 264.3h93.4M312.3 264.3h40M359.6 264.3h91.7M459.4 264.3h81M548.7 264.3h70M627.1 264.3h65.4" stroke="#0012ef" stroke-width="1.6" opacity="0.85" fill="none"/><path d="M79 281.6h17.5M111 281.6h11.9M134.1 281.6h9.7M149 281.6h60M213.7 281.6h40.3M261.9 281.6h29.9M300.3 281.6h15.6M328.7 281.6h9.9M343.6 281.6h6.1M355.2 281.6h27.4M396.4 281.6h25.8M425.7 281.6h19.2M459.8 281.6h8.5M478.3 281.6h25.7M514.6 281.6h23.6M549.2 281.6h32.4M592.1 281.6h54.6M656.2 281.6h12.8M671.9 281.6h20.6" stroke="#0098ff" stroke-width="1.1" opacity="0.75" fill="none"/><path d="M79 285.6h30.5M114.5 285.6h12.6M136 285.6h5.4M147.4 285.6h54.4M204.4 285.6h35.5M246.9 285.6h7.2M259.1 285.6h43.7M308.4 285.6h44.9M356.6 285.6h18.1M377.6 285.6h32.8M419.8 285.6h37.5M465.5 285.6h26.1M499.5 285.6h10.6M514.4 285.6h42.1M564.3 285.6h28.2M595.2 285.6h19.7M618.6 285.6h20.5M647.5 285.6h16M672.6 285.6h19.9" stroke="#0012ef" stroke-width="1.1" opacity="0.8" fill="none"/><path d="M79 287.6h65.7M147.9 287.6h66.2M216.1 287.6h85.1M306.3 287.6h72.3M380.4 287.6h61.7M444.7 287.6h40M490.5 287.6h99.7M591.4 287.6h88.8M684.2 287.6h8.3" stroke="#005fff" stroke-width="1.2" opacity="0.75" fill="none"/><path d="M79 289.6h55.9M144.5 289.6h54.1M201.2 289.6h37.6M244.2 289.6h34.2M281.4 289.6h15.6M302.5 289.6h17.2M325.3 289.6h6.4M334.3 289.6h44.1M383.7 289.6h33.2M424.8 289.6h24.7M452 289.6h48.1M506.8 289.6h41.2M555 289.6h58.4M618.2 289.6h46.8M670 289.6h22.5" stroke="#000ed0" stroke-width="1" opacity="0.7" fill="none"/><rect x="79" y="304.8" width="613.5" height="2" fill="#40c0f4"/><rect x="79" y="306.8" width="613.5" height="0.6" fill="#204030"/><rect x="79" y="307.4" width="613.5" height="2.9" fill="#c0f038"/><rect x="79" y="310.3" width="613.5" height="3.2" fill="#ff8420"/><rect x="79" y="313.5" width="613.5" height="1.5" fill="#f49060"/><rect x="79" y="315" width="613.5" height="1" fill="#180810"/><rect x="79" y="316" width="613.5" height="2.5" fill="#782888"/><rect x="79" y="318.5" width="613.5" height="1.8" fill="#9088c8"/><rect x="79" y="320.3" width="613.5" height="2.3" fill="#1870ec"/><rect x="531" y="316.2" width="15" height="2.6" fill="#90f050" opacity="0.85"/><rect x="558" y="316.2" width="24" height="2.6" fill="#a0e060" opacity="0.85"/><rect x="600" y="316.2" width="12" height="2.6" fill="#80d0a0" opacity="0.85"/><rect x="662" y="316.2" width="28" height="2.6" fill="#a0f070" opacity="0.85"/><rect x="238" y="316.2" width="12" height="2.6" fill="#80c0a0" opacity="0.85"/><rect x="120" y="316.2" width="12" height="2.6" fill="#90c0b0" opacity="0.85"/><rect x="79" y="167.2" width="2" height="137.4" fill="#00d3e2" opacity="0.8"/><rect x="79" y="167.2" width="2" height="38" fill="#ddff00" opacity="0.85"/></g><g filter="url(#bl)"><rect x="79" y="332.4" width="613.5" height="155.3" fill="url(#bg2)"/><rect x="79" y="332.4" width="613.5" height="155.3" fill="url(#spB)" mask="url(#mk2)"/><rect x="151.4" y="332.4" width="1.5" height="68.8" fill="url(#sB)"/><rect x="154.6" y="332.4" width="1" height="41.8" fill="url(#sB)"/><rect x="162.3" y="332.4" width="1" height="60.1" fill="url(#sB)"/><rect x="226.7" y="332.4" width="1" height="64.6" fill="url(#sN)"/><rect x="235.2" y="332.4" width="1.5" height="61.1" fill="url(#sN)"/><rect x="248.7" y="332.4" width="1" height="52" fill="url(#sB)"/><rect x="274.7" y="332.4" width="1" height="69" fill="url(#sN)"/><rect x="310.8" y="332.4" width="1.5" height="63" fill="url(#sB)"/><rect x="337.2" y="332.4" width="1" height="53.2" fill="url(#sB)"/><rect x="345.2" y="332.4" width="1.5" height="62.6" fill="url(#sN)"/><rect x="422.9" y="332.4" width="1" height="60" fill="url(#sN)"/><rect x="439" y="332.4" width="1.5" height="47" fill="url(#sB)"/><rect x="453.8" y="332.4" width="1.5" height="42" fill="url(#sN)"/><rect x="467.9" y="332.4" width="1.5" height="41.9" fill="url(#sN)"/><rect x="484.7" y="332.4" width="1" height="40.3" fill="url(#sB)"/><rect x="612.1" y="332.4" width="1" height="69.9" fill="url(#sB)"/><rect x="615.8" y="332.4" width="1.5" height="64.3" fill="url(#sN)"/><rect x="81.5" y="332.4" width="1.5" height="79.5" fill="url(#sG)"/><rect x="85" y="332.4" width="1.2" height="70" fill="url(#sC)"/><rect x="89.8" y="332.4" width="1.5" height="60" fill="url(#sG)"/><rect x="93.8" y="332.4" width="1.5" height="90.1" fill="url(#sG)"/><rect x="98" y="332.4" width="1.5" height="62.7" fill="url(#sG)"/><rect x="102.2" y="332.4" width="1.2" height="76" fill="url(#sC)"/><rect x="108.7" y="332.4" width="1.5" height="57.3" fill="url(#sG)"/><rect x="113.7" y="332.4" width="1.2" height="81.7" fill="url(#sC)"/><rect x="119.4" y="332.4" width="1.2" height="81.6" fill="url(#sC)"/><rect x="122.7" y="332.4" width="1.2" height="60.7" fill="url(#sG)"/><rect x="126.9" y="332.4" width="1" height="77.4" fill="url(#sC)"/><rect x="130.8" y="332.4" width="1.5" height="69.4" fill="url(#sG)"/><rect x="135.8" y="332.4" width="1.5" height="59.9" fill="url(#sG)"/><rect x="139.3" y="332.4" width="1" height="76.8" fill="url(#sC)"/><rect x="144.8" y="332.4" width="1.5" height="77.2" fill="url(#sG)"/><rect x="148.3" y="332.4" width="1" height="60.5" fill="url(#sC)"/><rect x="158.9" y="332.4" width="1.2" height="80.4" fill="url(#sC)"/><rect x="164.6" y="332.4" width="1.2" height="61.5" fill="url(#sG)"/><rect x="173.4" y="332.4" width="1.5" height="74.3" fill="url(#sG)"/><rect x="176.9" y="332.4" width="1.2" height="49" fill="url(#sC)"/><rect x="181.1" y="332.4" width="1" height="76.9" fill="url(#sC)"/><rect x="185.1" y="332.4" width="1.2" height="86" fill="url(#sG)"/><rect x="190.1" y="332.4" width="1.2" height="65.2" fill="url(#sC)"/><rect x="193.2" y="332.4" width="1.5" height="90.2" fill="url(#sR)"/><rect x="199.2" y="332.4" width="1" height="78" fill="url(#sC)"/><rect x="202.4" y="332.4" width="1.2" height="91.9" fill="url(#sG)"/><rect x="205.7" y="332.4" width="1.2" height="60.5" fill="url(#sC)"/><rect x="213.2" y="332.4" width="1.5" height="55.2" fill="url(#sG)"/><rect x="218.9" y="332.4" width="1.5" height="84.9" fill="url(#sG)"/><rect x="221.5" y="332.4" width="1.2" height="63.9" fill="url(#sG)"/><rect x="230.4" y="332.4" width="1.5" height="58" fill="url(#sG)"/><rect x="238" y="332.4" width="1.2" height="50.4" fill="url(#sC)"/><rect x="242.1" y="332.4" width="1.2" height="70.2" fill="url(#sG)"/><rect x="246.1" y="332.4" width="1.5" height="56.9" fill="url(#sG)"/><rect x="255.9" y="332.4" width="1.5" height="84.5" fill="url(#sR)"/><rect x="260.8" y="332.4" width="1.5" height="90.5" fill="url(#sG)"/><rect x="263.4" y="332.4" width="1.2" height="58" fill="url(#sC)"/><rect x="266" y="332.4" width="1" height="50.8" fill="url(#sC)"/><rect x="270.6" y="332.4" width="1.5" height="60" fill="url(#sG)"/><rect x="280.6" y="332.4" width="1.2" height="75.5" fill="url(#sG)"/><rect x="283.1" y="332.4" width="1.2" height="66.5" fill="url(#sC)"/><rect x="289.6" y="332.4" width="1.5" height="62" fill="url(#sR)"/><rect x="293.9" y="332.4" width="1" height="70.2" fill="url(#sC)"/><rect x="296.9" y="332.4" width="1.5" height="71.5" fill="url(#sG)"/><rect x="303.7" y="332.4" width="1" height="59.2" fill="url(#sC)"/><rect x="308.4" y="332.4" width="1.5" height="71.2" fill="url(#sG)"/><rect x="313.4" y="332.4" width="1.5" height="82.3" fill="url(#sR)"/><rect x="316.1" y="332.4" width="1" height="46.8" fill="url(#sC)"/><rect x="318.2" y="332.4" width="1.5" height="56.1" fill="url(#sG)"/><rect x="323.5" y="332.4" width="1" height="75.3" fill="url(#sC)"/><rect x="329.1" y="332.4" width="1.2" height="56.4" fill="url(#sC)"/><rect x="334.6" y="332.4" width="1.5" height="66.5" fill="url(#sG)"/><rect x="341" y="332.4" width="1" height="61" fill="url(#sC)"/><rect x="349.1" y="332.4" width="1.2" height="74" fill="url(#sG)"/><rect x="358.9" y="332.4" width="1.2" height="70.6" fill="url(#sG)"/><rect x="359.7" y="332.4" width="1.2" height="79.7" fill="url(#sC)"/><rect x="364.6" y="332.4" width="1.5" height="61.4" fill="url(#sG)"/><rect x="376.1" y="332.4" width="1.5" height="71.9" fill="url(#sG)"/><rect x="381.9" y="332.4" width="1.2" height="66.5" fill="url(#sC)"/><rect x="386" y="332.4" width="1.2" height="86.9" fill="url(#sG)"/><rect x="391.8" y="332.4" width="1.2" height="73.1" fill="url(#sC)"/><rect x="395.1" y="332.4" width="1.2" height="78.9" fill="url(#sC)"/><rect x="400.1" y="332.4" width="1" height="70.8" fill="url(#sC)"/><rect x="400.6" y="332.4" width="1.5" height="71" fill="url(#sG)"/><rect x="408.9" y="332.4" width="1.5" height="59.2" fill="url(#sG)"/><rect x="415.4" y="332.4" width="1.5" height="84.1" fill="url(#sG)"/><rect x="418.9" y="332.4" width="1.2" height="76.8" fill="url(#sG)"/><rect x="428.8" y="332.4" width="1" height="46.8" fill="url(#sC)"/><rect x="432" y="332.4" width="1.2" height="57.9" fill="url(#sC)"/><rect x="437" y="332.4" width="1" height="81.5" fill="url(#sC)"/><rect x="442.6" y="332.4" width="1.5" height="83.3" fill="url(#sG)"/><rect x="446.9" y="332.4" width="1" height="49" fill="url(#sC)"/><rect x="451.7" y="332.4" width="1.2" height="75.9" fill="url(#sG)"/><rect x="456.4" y="332.4" width="1.5" height="73.7" fill="url(#sG)"/><rect x="459.9" y="332.4" width="1.2" height="51.2" fill="url(#sC)"/><rect x="473.3" y="332.4" width="1.2" height="70.9" fill="url(#sG)"/><rect x="478.3" y="332.4" width="1.2" height="64.5" fill="url(#sC)"/><rect x="488.8" y="332.4" width="1.5" height="69.5" fill="url(#sG)"/><rect x="491.4" y="332.4" width="1.2" height="74.5" fill="url(#sC)"/><rect x="494.7" y="332.4" width="1.2" height="74.7" fill="url(#sC)"/><rect x="497.9" y="332.4" width="1.5" height="86.4" fill="url(#sR)"/><rect x="499.4" y="332.4" width="1.5" height="76.5" fill="url(#sG)"/><rect x="504.5" y="332.4" width="1.2" height="59.4" fill="url(#sC)"/><rect x="508.4" y="332.4" width="1.5" height="58.4" fill="url(#sG)"/><rect x="515.9" y="332.4" width="1.5" height="69.7" fill="url(#sG)"/><rect x="521" y="332.4" width="1" height="70.6" fill="url(#sC)"/><rect x="524.9" y="332.4" width="1.5" height="77.1" fill="url(#sG)"/><rect x="530.8" y="332.4" width="1.2" height="68.7" fill="url(#sC)"/><rect x="535.7" y="332.4" width="1.2" height="77.5" fill="url(#sG)"/><rect x="539.6" y="332.4" width="1.5" height="55.9" fill="url(#sR)"/><rect x="545.5" y="332.4" width="1.5" height="74.1" fill="url(#sR)"/><rect x="550.6" y="332.4" width="1" height="61.5" fill="url(#sC)"/><rect x="553.6" y="332.4" width="1.5" height="71.5" fill="url(#sG)"/><rect x="555.4" y="332.4" width="1.2" height="49.2" fill="url(#sC)"/><rect x="565.1" y="332.4" width="1.5" height="58.8" fill="url(#sG)"/><rect x="570.3" y="332.4" width="1" height="46.6" fill="url(#sC)"/><rect x="576" y="332.4" width="1.2" height="77.3" fill="url(#sC)"/><rect x="581.5" y="332.4" width="1.5" height="75.7" fill="url(#sG)"/><rect x="593.3" y="332.4" width="1" height="69.2" fill="url(#sC)"/><rect x="596.6" y="332.4" width="1" height="54.9" fill="url(#sC)"/><rect x="604.8" y="332.4" width="1" height="54.7" fill="url(#sC)"/><rect x="608.6" y="332.4" width="1.5" height="68.5" fill="url(#sG)"/><rect x="619.5" y="332.4" width="1" height="60.6" fill="url(#sC)"/><rect x="622.7" y="332.4" width="1.2" height="91.8" fill="url(#sG)"/><rect x="626.8" y="332.4" width="1.2" height="77.3" fill="url(#sG)"/><rect x="634.9" y="332.4" width="1.5" height="90" fill="url(#sR)"/><rect x="641.6" y="332.4" width="1.2" height="90.9" fill="url(#sG)"/><rect x="645.8" y="332.4" width="1" height="73.8" fill="url(#sC)"/><rect x="650.6" y="332.4" width="1.2" height="49.3" fill="url(#sC)"/><rect x="656.2" y="332.4" width="1.5" height="66.4" fill="url(#sG)"/><rect x="659" y="332.4" width="1" height="73.6" fill="url(#sC)"/><rect x="662" y="332.4" width="1.5" height="60.9" fill="url(#sG)"/><rect x="667.1" y="332.4" width="1.2" height="73.5" fill="url(#sC)"/><rect x="670.5" y="332.4" width="1" height="67.5" fill="url(#sC)"/><rect x="675.1" y="332.4" width="1.5" height="77.1" fill="url(#sG)"/><rect x="678.7" y="332.4" width="1" height="77.4" fill="url(#sC)"/><rect x="683.4" y="332.4" width="1.5" height="89.3" fill="url(#sG)"/><rect x="686" y="332.4" width="1.2" height="61.3" fill="url(#sG)"/><rect x="690" y="332.4" width="1.5" height="90.6" fill="url(#sG)"/><rect x="221.1" y="372.4" width="1.2" height="103.3" fill="#00d3e2" opacity="0.85"/><rect x="241.9" y="372.4" width="1.2" height="103.3" fill="#005fff" opacity="0.85"/><rect x="260.2" y="372.4" width="1.2" height="103.3" fill="#1aff38" opacity="0.85"/><rect x="289.8" y="372.4" width="1.2" height="103.3" fill="#00d3e2" opacity="0.85"/><rect x="318.8" y="372.4" width="1.2" height="103.3" fill="#00ffaa" opacity="0.85"/><rect x="334.9" y="372.4" width="1.2" height="103.3" fill="#005fff" opacity="0.85"/><rect x="375.6" y="372.4" width="1.2" height="103.3" fill="#00d3e2" opacity="0.85"/><rect x="416" y="372.4" width="1.2" height="103.3" fill="#28ff00" opacity="0.85"/><rect x="514.9" y="372.4" width="1.2" height="103.3" fill="#005fff" opacity="0.85"/><rect x="537.9" y="372.4" width="1.2" height="103.3" fill="#00d3e2" opacity="0.85"/><rect x="556.8" y="372.4" width="1.2" height="103.3" fill="#005fff" opacity="0.85"/><rect x="582.4" y="372.4" width="1.2" height="103.3" fill="#00d3e2" opacity="0.85"/><rect x="623" y="372.4" width="1.2" height="103.3" fill="#00d3e2" opacity="0.85"/><rect x="635.2" y="372.4" width="1.2" height="103.3" fill="#005fff" opacity="0.85"/><rect x="682.4" y="372.4" width="1.2" height="103.3" fill="#00d3e2" opacity="0.85"/><rect x="193.3" y="372.4" width="1.2" height="103.3" fill="#00d3e2" opacity="0.85"/><rect x="208.4" y="372.4" width="1.2" height="103.3" fill="#1aff38" opacity="0.85"/><rect x="243.8" y="372.4" width="1.2" height="103.3" fill="#005fff" opacity="0.85"/><rect x="399.4" y="372.4" width="1.2" height="103.3" fill="#005fff" opacity="0.85"/><rect x="539.2" y="372.4" width="1.2" height="103.3" fill="#00e2cf" opacity="0.85"/><path d="M79 370.1h15.2M98 370.1h28M129.3 370.1h16.7M149.9 370.1h8M161.5 370.1h20M186.5 370.1h5.5M194.5 370.1h5.4M205 370.1h21.7M227.9 370.1h29.5M263.3 370.1h20.7M288 370.1h7.3M296.4 370.1h17.3M314.9 370.1h8.1M325.3 370.1h3.8M332.4 370.1h14.9M352.5 370.1h17M373.7 370.1h16.5M394.5 370.1h15.3M412.3 370.1h29.9M448.2 370.1h25.7M478.4 370.1h11.5M492.1 370.1h10.8M504.2 370.1h23.7M530.9 370.1h25.9M559.7 370.1h28.9M593.8 370.1h3M598.9 370.1h27.6M629.8 370.1h29.5M662.3 370.1h5M671.4 370.1h21.1" stroke="#005fff" stroke-width="1.2" opacity="0.8" fill="none"/><path d="M79 387.1h33.7M118.7 387.1h43.3M164.8 387.1h10.5M179.6 387.1h23.7M210.2 387.1h44.5M260.3 387.1h37.9M304.2 387.1h17.3M326.1 387.1h18.1M351.7 387.1h12.9M371.5 387.1h13.7M391.4 387.1h26.8M422.7 387.1h52.1M476.9 387.1h13M497.4 387.1h35.4M535.4 387.1h59.4M602.5 387.1h15.6M622.6 387.1h16.8M643.2 387.1h41.1M687.3 387.1h5.2" stroke="#0085ff" stroke-width="1.2" opacity="0.85" fill="none"/><path d="M79 391.5h28.1M113.2 391.5h57.9M178.2 391.5h23M204.6 391.5h20.3M228.3 391.5h61.4M292.4 391.5h47.2M342.9 391.5h30.6M378.1 391.5h68.6M452.4 391.5h11M467.1 391.5h20.3M494.6 391.5h66.7M568.1 391.5h67.8M642.4 391.5h50.1" stroke="#00beff" stroke-width="1.2" opacity="0.9" fill="none"/><path d="M79 395.1h15.3M100.6 395.1h42.6M150.8 395.1h23.6M177.9 395.1h46.7M230.5 395.1h25.1M261.8 395.1h29.8M298.3 395.1h15.9M317.6 395.1h55.1M376.8 395.1h23M406.6 395.1h41.6M451.1 395.1h37.6M494.7 395.1h18.2M518.8 395.1h16.2M539 395.1h14.2M556.4 395.1h58.9M619.7 395.1h59.5M683.9 395.1h8.6" stroke="#0039ff" stroke-width="1.2" opacity="0.8" fill="none"/><path d="M79 407.9h38.8M119.9 407.9h30.8M153.9 407.9h39.5M195.6 407.9h35.8M238.8 407.9h35M283.8 407.9h13.4M301.9 407.9h29.8M335.9 407.9h14.2M354 407.9h35M398 407.9h32.9M434.7 407.9h37.4M478.2 407.9h13.1M496.9 407.9h19.7M519.2 407.9h24.8M548.9 407.9h24.9M583.2 407.9h27.6M616.1 407.9h35.2M661.3 407.9h22.2" stroke="#0098ff" stroke-width="1.1" opacity="0.8" fill="none"/><path d="M79 414h73.4M155.3 414h80M238.1 414h79.1M320.9 414h61.1M385.5 414h31.2M418.9 414h70.2M490.7 414h119.2M612.2 414h80.3" stroke="#00c5f5" stroke-width="1.3" opacity="0.9" fill="none"/><path d="M79 431.1h23.3M110.7 431.1h38.6M153.7 431.1h31.8M193.1 431.1h28.1M224.1 431.1h5.9M235.2 431.1h31.1M270.3 431.1h22.6M297.4 431.1h34.6M341.6 431.1h19.1M370.6 431.1h7.2M386.3 431.1h35.6M425.1 431.1h29.7M461.3 431.1h38.4M503.4 431.1h23.9M536.4 431.1h27.4M568.2 431.1h7.9M585.6 431.1h21.6M617.2 431.1h10M635.6 431.1h33.5M678.4 431.1h5.6M689 431.1h3.5" stroke="#0039ff" stroke-width="1.1" opacity="0.7" fill="none"/><path d="M79 434.4h91.2M175.4 434.4h38.3M219.7 434.4h39.4M263.4 434.4h29.2M297.4 434.4h35.1M337.1 434.4h92.4M434.4 434.4h64.1M503.8 434.4h118.8M624.2 434.4h68.3" stroke="#00abff" stroke-width="1.2" opacity="0.85" fill="none"/><path d="M79 436.8h77.2M159.2 436.8h100.2M261 436.8h123.4M386.9 436.8h122M511.2 436.8h89.7M602.6 436.8h89.9" stroke="#00d3e2" stroke-width="1.3" opacity="0.9" fill="none"/><path d="M79 441.9h35.5M122.7 441.9h28.4M157.3 441.9h22.7M189.9 441.9h18M211.2 441.9h16.7M232 441.9h19.7M255.9 441.9h9.8M270.3 441.9h19M295.9 441.9h14.1M312.5 441.9h14.1M333 441.9h22.5M363.3 441.9h41.1M409.8 441.9h9.5M427.1 441.9h39M471.2 441.9h34.6M510.2 441.9h46.2M565.1 441.9h40.6M615.4 441.9h15.5M637.2 441.9h37.9M683.5 441.9h9" stroke="#0085ff" stroke-width="1.1" opacity="0.8" fill="none"/><path d="M79 449.4h45.8M132.2 449.4h39.5M181 449.4h16.7M204.8 449.4h45.7M259.5 449.4h30.8M293.6 449.4h23.5M327.1 449.4h9.6M341.3 449.4h47.8M394.6 449.4h14.4M413.5 449.4h45.9M464.1 449.4h24.2M495.4 449.4h41.3M542.5 449.4h8.7M557.8 449.4h6.6M567.1 449.4h13.6M588.2 449.4h17.8M613.5 449.4h12.4M628.8 449.4h6.1M642.5 449.4h43.7M689.9 449.4h2.6" stroke="#0085ff" stroke-width="1.1" opacity="0.8" fill="none"/><path d="M79 453.4h22M110.4 453.4h43M157 453.4h44.2M208.4 453.4h6.9M224.9 453.4h16.5M245.8 453.4h24.1M276.6 453.4h10.6M294.7 453.4h42.5M343.3 453.4h40.8M391 453.4h42.1M436.6 453.4h21.1M463.5 453.4h9.7M483 453.4h33.6M519.4 453.4h31.2M555.9 453.4h13.5M572.7 453.4h25.7M601 453.4h30.3M637.5 453.4h10.7M657.2 453.4h6.8M667.4 453.4h25.1" stroke="#0039ff" stroke-width="1.1" opacity="0.7" fill="none"/><path d="M79 458.4h12.4M98.9 458.4h33.6M138.3 458.4h14.7M161.4 458.4h41.4M208.9 458.4h27.7M240.5 458.4h5.1M250.6 458.4h31.3M284.5 458.4h40.7M329.1 458.4h15.5M346.9 458.4h49.9M404.7 458.4h44.4M456 458.4h6.5M467.1 458.4h27.4M497.5 458.4h47.8M550.2 458.4h12M570.8 458.4h10.6M590.8 458.4h25.4M622.6 458.4h20.4M648.9 458.4h13.4M664.6 458.4h27.9" stroke="#00abff" stroke-width="1.1" opacity="0.8" fill="none"/><path d="M79 462h193.7M274.2 462h53.5M331.7 462h77.6M410.7 462h147.7M560.4 462h132.1" stroke="#1aff38" stroke-width="1.3" opacity="0.9" fill="none"/><rect x="79" y="474.2" width="613.5" height="4.6" fill="#1848f0"/><rect x="79" y="475.5" width="613.5" height="1.2" fill="#80b0ff"/><rect x="79" y="479.2" width="613.5" height="2.1" fill="#b0f0ff"/><rect x="79" y="481.3" width="613.5" height="1.5" fill="#80ffc0"/><rect x="79" y="482.8" width="613.5" height="1.5" fill="#40e040"/><rect x="79" y="484.3" width="613.5" height="2" fill="#082808"/><rect x="79" y="486.3" width="613.5" height="1.4" fill="#900000"/><rect x="79" y="332.4" width="2" height="137.3" fill="#00d3e2" opacity="0.8"/><rect x="79" y="332.4" width="2" height="38" fill="#ddff00" opacity="0.85"/></g><path d="M79.5 140L80.5 140.1L81.5 145.1L82.5 138.4L83.5 142.6L84.5 142.1L85.5 141.3L86.5 142.3L87.5 141L88.5 142.3L89.5 141.8L90.5 141.2L91.5 140.6L92.5 144.8L93.5 142.4L94.5 142.9L95.5 141.1L96.5 141.1L97.5 145.6L98.5 141.5L99.5 143L100.5 143.8L101.5 140.4L102.5 141.4L103.5 139.9L104.5 140.6L105.5 141.3L106.5 140.1L107.5 139.5L108.5 140.8L109.5 139.9L110.5 139.7L111.5 141.7L112.5 143.9L113.5 142.8L114.5 141.8L115.5 142.6L116.5 141.5L117.5 143.2L118.5 142.5L119.5 143.1L120.5 143.2L121.5 142.2L122.5 141.8L123.5 142.4L124.5 141.7L125.5 143.8L126.5 143.3L127.5 142.5L128.5 141.7L129.5 144.4L130.5 144.9L131.5 142.2L132.5 143.2L133.5 144.1L134.5 144.2L135.5 142.3L136.5 142.9L137.5 143.9L138.5 141.9L139.5 144.1L140.5 141.9L141.5 139.7L142.5 142.5L143.5 141.2L144.5 141.7L145.5 142.4L146.5 143.1L147.5 141.4L148.5 141.8L149.5 141.6L150.5 141.6L151.5 140.7L152.5 139.9L153.5 141.2L154.5 139L155.5 142.6L156.5 140.8L157.5 141.7L158.5 142.7L159.5 141.2L160.5 142.5L161.5 139.6L162.5 143.2L163.5 140.8L164.5 142.1L165.5 142.6L166.5 141.7L167.5 141.7L168.5 142.3L169.5 139.8L170.5 140L171.5 141.3L172.5 143.2L173.5 142.6L174.5 141.8L175.5 142.6L176.5 143.6L177.5 145L178.5 141.5L179.5 144.1L180.5 143.7L181.5 140.9L182.5 142.3L183.5 142.3L184.5 143.6L185.5 144L186.5 141.1L187.5 139L188.5 140.9L189.5 141.4L190.5 143.9L191.5 142.9L192.5 144.1L193.5 142.7L194.5 143.7L195.5 143.4L196.5 144.3L197.5 144.9L198.5 142.9L199.5 145.4L200.5 142.6L201.5 141.6L202.5 142L203.5 140.3L204.5 142.3L205.5 142.9L206.5 143.3L207.5 141.9L208.5 142.1L209.5 145L210.5 137.9L211.5 143.4L212.5 141.9L213.5 142L214.5 140.9L215.5 142.9L216.5 141.7L217.5 140.7L218.5 140.4L219.5 141.9L220.5 140.7L221.5 141.3L222.5 143.3L223.5 144.9L224.5 140.1L225.5 143.3L226.5 143L227.5 142.4L228.5 140.2L229.5 140.3L230.5 139.6L231.5 140.3L232.5 139.2L233.5 143.8L234.5 139.6L235.5 139.5L236.5 140.5L237.5 142.5L238.5 138.5L239.5 140L240.5 140.7L241.5 141.6L242.5 141.7L243.5 141L244.5 141.9L245.5 142.2L246.5 142.3L247.5 144.2L248.5 143.8L249.5 140.9L250.5 142.1L251.5 142.7L252.5 142.2L253.5 141.8L254.5 140.6L255.5 137.5L256.5 143L257.5 138.3L258.5 142.1L259.5 141.9L260.5 141.6L261.5 143.3L262.5 141.5L263.5 141.5L264.5 142L265.5 142.8L266.5 142.9L267.5 143L268.5 143.8L269.5 142.1L270.5 141.6L271.5 142.2L272.5 145L273.5 142L274.5 137.6L275.5 139.4L276.5 143L277.5 143.3L278.5 140.9L279.5 139.8L280.5 143.8L281.5 141.1L282.5 139.2L283.5 141L284.5 142.8L285.5 141.5L286.5 142.1L287.5 139.6L288.5 145.6L289.5 140.9L290.5 143.1L291.5 143L292.5 141.2L293.5 141.5L294.5 141.3L295.5 139.9L296.5 142.2L297.5 139.1L298.5 139.6L299.5 144.5L300.5 142.3L301.5 143.4L302.5 143.3L303.5 141.7L304.5 137.6L305.5 139.4L306.5 139.6L307.5 144.7L308.5 143.1L309.5 140.1L310.5 138.7L311.5 144.3L312.5 145.7L313.5 141.6L314.5 140.7L315.5 139.6L316.5 142.2L317.5 141.9L318.5 141.3L319.5 139.9L320.5 141L321.5 142.7L322.5 142.2L323.5 145.5L324.5 143.2L325.5 144.3L326.5 144.5L327.5 143.3L328.5 144.6L329.5 147.1L330.5 144.2L331.5 145.6L332.5 143.4L333.5 143L334.5 141.6L335.5 141L336.5 141.8L337.5 143.7L338.5 141.6L339.5 141.9L340.5 143.6L341.5 142.2L342.5 141.5L343.5 141.8L344.5 141.8L345.5 142.1L346.5 142.3L347.5 142.2L348.5 142L349.5 143.7L350.5 143.4L351.5 142.1L352.5 142.8L353.5 143.6L354.5 142.6L355.5 145L356.5 144.7L357.5 144L358.5 145.6L359.5 141.3L360.5 142.5L361.5 143L362.5 141.7L363.5 143.4L364.5 143.8L365.5 141L366.5 143.2L367.5 142L368.5 142.2L369.5 136.5L370.5 142.1L371.5 142.7L372.5 143.1L373.5 141L374.5 142.5L375.5 140.5L376.5 141.3L377.5 141.1L378.5 142.7L379.5 143L380.5 140.1L381.5 139.9L382.5 140.3L383.5 141.1L384.5 145.1L385.5 140.1L386.5 142L387.5 142.5L388.5 144L389.5 136.6L390.5 139.9L391.5 139.9L392.5 141.8L393.5 142.3L394.5 139.9L395.5 142.6L396.5 142.1L397.5 144.3L398.5 142.1L399.5 144.3L400.5 142.2L401.5 143.2L402.5 139.1L403.5 141.8L404.5 139.6L405.5 140.7L406.5 139.2L407.5 142.3L408.5 143.5L409.5 143.6L410.5 144.3L411.5 141.8L412.5 140L413.5 141.2L414.5 143L415.5 140.2L416.5 137.8L417.5 141.1L418.5 142.2L419.5 141L420.5 142.3L421.5 140.3L422.5 140.3L423.5 142L424.5 143.5L425.5 141.3L426.5 142.1L427.5 141.1L428.5 142.2L429.5 140.3L430.5 141.2L431.5 144.4L432.5 140.5L433.5 141.4L434.5 140.4L435.5 141.4L436.5 138.1L437.5 139.2L438.5 139L439.5 138.4L440.5 139.7L441.5 138L442.5 139.2L443.5 139.9L444.5 138L445.5 139.5L446.5 138.1L447.5 138.5L448.5 139.4L449.5 138.9L450.5 138L451.5 141.7L452.5 138.9L453.5 139.8L454.5 140L455.5 138.3L456.5 145.3L457.5 141.5L458.5 141L459.5 143.1L460.5 141.1L461.5 142.8L462.5 142.7L463.5 141.4L464.5 142.4L465.5 142L466.5 141.5L467.5 141.5L468.5 142.4L469.5 142.1L470.5 143.2L471.5 142.3L472.5 145.5L473.5 142.4L474.5 141.8L475.5 142.2L476.5 141.9L477.5 140.5L478.5 138.2L479.5 142.3L480.5 141L481.5 141.2L482.5 144.6L483.5 142.6L484.5 137.3L485.5 143.2L486.5 143.5L487.5 142.8L488.5 142.1L489.5 141.3L490.5 142.4L491.5 145.3L492.5 144.1L493.5 143.9L494.5 144.5L495.5 141.2L496.5 148.1L497.5 143.4L498.5 142.4L499.5 142.1L500.5 140.1L501.5 136.5L502.5 139.2L503.5 140.7L504.5 143.1L505.5 138.2L506.5 143.6L507.5 142.4L508.5 142.1L509.5 138.9L510.5 141.5L511.5 137.2L512.5 141.7L513.5 143.2L514.5 143.9L515.5 142.6L516.5 142.1L517.5 143.6L518.5 141.8L519.5 144L520.5 144.8L521.5 142.7L522.5 144.2L523.5 144.1L524.5 141.9L525.5 143.2L526.5 143.2L527.5 140.2L528.5 143.6L529.5 140.8L530.5 142.9L531.5 142.3L532.5 145.3L533.5 141L534.5 140.9L535.5 138.6L536.5 143.1L537.5 144.3L538.5 139.3L539.5 140L540.5 142.5L541.5 141.4L542.5 139.6L543.5 140.5L544.5 141.6L545.5 141.1L546.5 143.7L547.5 144.1L548.5 141.1L549.5 141.2L550.5 143.5L551.5 140.8L552.5 143.9L553.5 139.7L554.5 138.6L555.5 140.9L556.5 142L557.5 140L558.5 142.5L559.5 142.4L560.5 141.4L561.5 141.7L562.5 142L563.5 139L564.5 141.8L565.5 142.5L566.5 143.1L567.5 141.2L568.5 141.3L569.5 140.5L570.5 141.7L571.5 142.5L572.5 140.2L573.5 142.4L574.5 141.1L575.5 142L576.5 140.4L577.5 141.9L578.5 141.3L579.5 141.4L580.5 142.7L581.5 141.4L582.5 138.5L583.5 142.9L584.5 141L585.5 141.8L586.5 142.1L587.5 142.9L588.5 142.7L589.5 141.3L590.5 142.8L591.5 142.8L592.5 143.5L593.5 143.1L594.5 144.3L595.5 143.5L596.5 144.5L597.5 143.1L598.5 145.2L599.5 144.7L600.5 142.4L601.5 144.2L602.5 142.4L603.5 141.6L604.5 142L605.5 142.4L606.5 143.6L607.5 142.8L608.5 142.9L609.5 145.2L610.5 144.5L611.5 143.3L612.5 142.9L613.5 143.1L614.5 143.7L615.5 142.3L616.5 143.3L617.5 143.6L618.5 143.5L619.5 141.5L620.5 141.4L621.5 142.1L622.5 143.2L623.5 141.4L624.5 142.8L625.5 141.3L626.5 138.2L627.5 143.2L628.5 141.1L629.5 141.9L630.5 141.5L631.5 142L632.5 140.9L633.5 142.2L634.5 142.3L635.5 142.5L636.5 142L637.5 142.8L638.5 142.8L639.5 142.4L640.5 143.6L641.5 140.9L642.5 137.3L643.5 140.9L644.5 139.6L645.5 140.6L646.5 139.7L647.5 139.2L648.5 141.2L649.5 140.9L650.5 138.1L651.5 139.8L652.5 141.9L653.5 141.3L654.5 141.6L655.5 139.7L656.5 139.8L657.5 147L658.5 140.1L659.5 143L660.5 142.3L661.5 144.8L662.5 142.4L663.5 142.8L664.5 140.7L665.5 141.1L666.5 142.4L667.5 144.1L668.5 144.8L669.5 142.5L670.5 144L671.5 142.7L672.5 142.4L673.5 143.2L674.5 138.9L675.5 141.6L676.5 139.4L677.5 138.4L678.5 138.9L679.5 140.7L680.5 140.9L681.5 142.6L682.5 141.8L683.5 143.7L684.5 141.9L685.5 140.2L686.5 144.8L687.5 142.3L688.5 141.8L689.5 139.1L690.5 142.2L691.5 140.4" stroke="#0a0a0a" stroke-width="2" fill="none" stroke-linejoin="round"/><rect x="79.1" y="510.2" width="613.4" height="3.2" fill="#141414"/><path d="M82.1 511.8H692.5" stroke="#888" stroke-width="0.7" stroke-dasharray="1 3 1 2 2 4" opacity="0.5"/><rect x="79.1" y="126.5" width="624.1" height="31" fill="none" stroke="#5c5c5c" stroke-width="1"/><rect x="79.1" y="167.2" width="624.1" height="155.4" fill="none" stroke="#5c5c5c" stroke-width="1"/><rect x="79.1" y="332.4" width="624.1" height="155.3" fill="none" stroke="#5c5c5c" stroke-width="1"/><rect x="79.1" y="497.6" width="624.1" height="30.6" fill="none" stroke="#5c5c5c" stroke-width="1"/><path d="M79.5 126.5V167.2M79.5 322.6V332.4M79.5 487.7V497.6M79.5 528.2V538.7M89.5 126.5v4M89.5 157.5v-4M89.5 528.2v4M99.5 126.5v4M99.5 157.5v-4M99.5 528.2v4M110.5 126.5v4M110.5 157.5v-4M110.5 528.2v4M120.5 126.5v4M120.5 157.5v-4M120.5 528.2v4M131.5 126.5v4M131.5 157.5v-4M131.5 528.2v4M141.5 126.5V167.2M141.5 322.6V332.4M141.5 487.7V497.6M141.5 528.2V538.7M151.5 126.5v4M151.5 157.5v-4M151.5 528.2v4M162.5 126.5v4M162.5 157.5v-4M162.5 528.2v4M172.5 126.5v4M172.5 157.5v-4M172.5 528.2v4M183.5 126.5v4M183.5 157.5v-4M183.5 528.2v4M193.5 126.5v4M193.5 157.5v-4M193.5 528.2v4M203.5 126.5V167.2M203.5 322.6V332.4M203.5 487.7V497.6M203.5 528.2V538.7M214.5 126.5v4M214.5 157.5v-4M214.5 528.2v4M224.5 126.5v4M224.5 157.5v-4M224.5 528.2v4M235.5 126.5v4M235.5 157.5v-4M235.5 528.2v4M245.5 126.5v4M245.5 157.5v-4M245.5 528.2v4M255.5 126.5v4M255.5 157.5v-4M255.5 528.2v4M266.5 126.5V167.2M266.5 322.6V332.4M266.5 487.7V497.6M266.5 528.2V538.7M276.5 126.5v4M276.5 157.5v-4M276.5 528.2v4M287.5 126.5v4M287.5 157.5v-4M287.5 528.2v4M297.5 126.5v4M297.5 157.5v-4M297.5 528.2v4M307.5 126.5v4M307.5 157.5v-4M307.5 528.2v4M318.5 126.5v4M318.5 157.5v-4M318.5 528.2v4M328.5 126.5V167.2M328.5 322.6V332.4M328.5 487.7V497.6M328.5 528.2V538.7M339.5 126.5v4M339.5 157.5v-4M339.5 528.2v4M349.5 126.5v4M349.5 157.5v-4M349.5 528.2v4M359.5 126.5v4M359.5 157.5v-4M359.5 528.2v4M370.5 126.5v4M370.5 157.5v-4M370.5 528.2v4M380.5 126.5v4M380.5 157.5v-4M380.5 528.2v4M391.5 126.5V167.2M391.5 322.6V332.4M391.5 487.7V497.6M391.5 528.2V538.7M401.5 126.5v4M401.5 157.5v-4M401.5 528.2v4M411.5 126.5v4M411.5 157.5v-4M411.5 528.2v4M422.5 126.5v4M422.5 157.5v-4M422.5 528.2v4M432.5 126.5v4M432.5 157.5v-4M432.5 528.2v4M443.5 126.5v4M443.5 157.5v-4M443.5 528.2v4M453.5 126.5V167.2M453.5 322.6V332.4M453.5 487.7V497.6M453.5 528.2V538.7M463.5 126.5v4M463.5 157.5v-4M463.5 528.2v4M474.5 126.5v4M474.5 157.5v-4M474.5 528.2v4M484.5 126.5v4M484.5 157.5v-4M484.5 528.2v4M495.5 126.5v4M495.5 157.5v-4M495.5 528.2v4M505.5 126.5v4M505.5 157.5v-4M505.5 528.2v4M515.5 126.5V167.2M515.5 322.6V332.4M515.5 487.7V497.6M515.5 528.2V538.7M526.5 126.5v4M526.5 157.5v-4M526.5 528.2v4M536.5 126.5v4M536.5 157.5v-4M536.5 528.2v4M547.5 126.5v4M547.5 157.5v-4M547.5 528.2v4M557.5 126.5v4M557.5 157.5v-4M557.5 528.2v4M567.5 126.5v4M567.5 157.5v-4M567.5 528.2v4M578.5 126.5V167.2M578.5 322.6V332.4M578.5 487.7V497.6M578.5 528.2V538.7M588.5 126.5v4M588.5 157.5v-4M588.5 528.2v4M599.5 126.5v4M599.5 157.5v-4M599.5 528.2v4M609.5 126.5v4M609.5 157.5v-4M609.5 528.2v4M619.5 126.5v4M619.5 157.5v-4M619.5 528.2v4M630.5 126.5v4M630.5 157.5v-4M630.5 528.2v4M640.5 126.5V167.2M640.5 322.6V332.4M640.5 487.7V497.6M640.5 528.2V538.7M651.5 126.5v4M651.5 157.5v-4M651.5 528.2v4M661.5 126.5v4M661.5 157.5v-4M661.5 528.2v4M671.5 126.5v4M671.5 157.5v-4M671.5 528.2v4M682.5 126.5v4M682.5 157.5v-4M682.5 528.2v4M692.5 126.5v4M692.5 157.5v-4M692.5 528.2v4M703.5 126.5V167.2M703.5 322.6V332.4M703.5 487.7V497.6M703.5 528.2V538.7M73.6 126.5H79.1M703.2 126.5H708.2M73.6 157.5H79.1M703.2 157.5H708.2M76.9 134.2H79.1M703.2 134.2H705.4M76.9 149.8H79.1M703.2 149.8H705.4M73.6 497.6H79.1M703.2 497.6H708.2M73.6 528.2H79.1M703.2 528.2H708.2M76.9 505.2H79.1M703.2 505.2H705.4M76.9 512.9H79.1M703.2 512.9H705.4M76.9 520.6H79.1M703.2 520.6H705.4M73.6 322.6H79.1M703.2 322.6H708.2M79.1 314.8H79.1M703.2 314.8H705.4M79.1 307.1H79.1M703.2 307.1H705.4M79.1 299.3H79.1M703.2 299.3H705.4M73.6 291.5H79.1M703.2 291.5H708.2M79.1 283.8H79.1M703.2 283.8H705.4M79.1 276H79.1M703.2 276H705.4M79.1 268.2H79.1M703.2 268.2H705.4M73.6 260.4H79.1M703.2 260.4H708.2M79.1 252.7H79.1M703.2 252.7H705.4M79.1 244.9H79.1M703.2 244.9H705.4M79.1 237.1H79.1M703.2 237.1H705.4M73.6 229.4H79.1M703.2 229.4H708.2M79.1 221.6H79.1M703.2 221.6H705.4M79.1 213.8H79.1M703.2 213.8H705.4M79.1 206.1H79.1M703.2 206.1H705.4M73.6 198.3H79.1M703.2 198.3H708.2M79.1 190.5H79.1M703.2 190.5H705.4M79.1 182.7H79.1M703.2 182.7H705.4M79.1 175H79.1M703.2 175H705.4M73.6 167.2H79.1M703.2 167.2H708.2M73.6 487.7H79.1M703.2 487.7H708.2M79.1 479.9H79.1M703.2 479.9H705.4M79.1 472.2H79.1M703.2 472.2H705.4M79.1 464.4H79.1M703.2 464.4H705.4M73.6 456.6H79.1M703.2 456.6H708.2M79.1 448.9H79.1M703.2 448.9H705.4M79.1 441.1H79.1M703.2 441.1H705.4M79.1 433.3H79.1M703.2 433.3H705.4M73.6 425.6H79.1M703.2 425.6H708.2M79.1 417.8H79.1M703.2 417.8H705.4M79.1 410H79.1M703.2 410H705.4M79.1 402.3H79.1M703.2 402.3H705.4M73.6 394.5H79.1M703.2 394.5H708.2M79.1 386.8H79.1M703.2 386.8H705.4M79.1 379H79.1M703.2 379H705.4M79.1 371.2H79.1M703.2 371.2H705.4M73.6 363.5H79.1M703.2 363.5H708.2M79.1 355.7H79.1M703.2 355.7H705.4M79.1 347.9H79.1M703.2 347.9H705.4M79.1 340.2H79.1M703.2 340.2H705.4M73.6 332.4H79.1M703.2 332.4H708.2" stroke="#5c5c5c" stroke-width="0.9" fill="none"/><path d="M89.5 322.6v2.8M89.5 332.4v-2.8M89.5 487.7v2.8M89.5 497.6v-2.8M99.5 322.6v2.8M99.5 332.4v-2.8M99.5 487.7v2.8M99.5 497.6v-2.8M110.5 322.6v2.8M110.5 332.4v-2.8M110.5 487.7v2.8M110.5 497.6v-2.8M120.5 322.6v2.8M120.5 332.4v-2.8M120.5 487.7v2.8M120.5 497.6v-2.8M131.5 322.6v2.8M131.5 332.4v-2.8M131.5 487.7v2.8M131.5 497.6v-2.8M151.5 322.6v2.8M151.5 332.4v-2.8M151.5 487.7v2.8M151.5 497.6v-2.8M162.5 322.6v2.8M162.5 332.4v-2.8M162.5 487.7v2.8M162.5 497.6v-2.8M172.5 322.6v2.8M172.5 332.4v-2.8M172.5 487.7v2.8M172.5 497.6v-2.8M183.5 322.6v2.8M183.5 332.4v-2.8M183.5 487.7v2.8M183.5 497.6v-2.8M193.5 322.6v2.8M193.5 332.4v-2.8M193.5 487.7v2.8M193.5 497.6v-2.8M214.5 322.6v2.8M214.5 332.4v-2.8M214.5 487.7v2.8M214.5 497.6v-2.8M224.5 322.6v2.8M224.5 332.4v-2.8M224.5 487.7v2.8M224.5 497.6v-2.8M235.5 322.6v2.8M235.5 332.4v-2.8M235.5 487.7v2.8M235.5 497.6v-2.8M245.5 322.6v2.8M245.5 332.4v-2.8M245.5 487.7v2.8M245.5 497.6v-2.8M255.5 322.6v2.8M255.5 332.4v-2.8M255.5 487.7v2.8M255.5 497.6v-2.8M276.5 322.6v2.8M276.5 332.4v-2.8M276.5 487.7v2.8M276.5 497.6v-2.8M287.5 322.6v2.8M287.5 332.4v-2.8M287.5 487.7v2.8M287.5 497.6v-2.8M297.5 322.6v2.8M297.5 332.4v-2.8M297.5 487.7v2.8M297.5 497.6v-2.8M307.5 322.6v2.8M307.5 332.4v-2.8M307.5 487.7v2.8M307.5 497.6v-2.8M318.5 322.6v2.8M318.5 332.4v-2.8M318.5 487.7v2.8M318.5 497.6v-2.8M339.5 322.6v2.8M339.5 332.4v-2.8M339.5 487.7v2.8M339.5 497.6v-2.8M349.5 322.6v2.8M349.5 332.4v-2.8M349.5 487.7v2.8M349.5 497.6v-2.8M359.5 322.6v2.8M359.5 332.4v-2.8M359.5 487.7v2.8M359.5 497.6v-2.8M370.5 322.6v2.8M370.5 332.4v-2.8M370.5 487.7v2.8M370.5 497.6v-2.8M380.5 322.6v2.8M380.5 332.4v-2.8M380.5 487.7v2.8M380.5 497.6v-2.8M401.5 322.6v2.8M401.5 332.4v-2.8M401.5 487.7v2.8M401.5 497.6v-2.8M411.5 322.6v2.8M411.5 332.4v-2.8M411.5 487.7v2.8M411.5 497.6v-2.8M422.5 322.6v2.8M422.5 332.4v-2.8M422.5 487.7v2.8M422.5 497.6v-2.8M432.5 322.6v2.8M432.5 332.4v-2.8M432.5 487.7v2.8M432.5 497.6v-2.8M443.5 322.6v2.8M443.5 332.4v-2.8M443.5 487.7v2.8M443.5 497.6v-2.8M463.5 322.6v2.8M463.5 332.4v-2.8M463.5 487.7v2.8M463.5 497.6v-2.8M474.5 322.6v2.8M474.5 332.4v-2.8M474.5 487.7v2.8M474.5 497.6v-2.8M484.5 322.6v2.8M484.5 332.4v-2.8M484.5 487.7v2.8M484.5 497.6v-2.8M495.5 322.6v2.8M495.5 332.4v-2.8M495.5 487.7v2.8M495.5 497.6v-2.8M505.5 322.6v2.8M505.5 332.4v-2.8M505.5 487.7v2.8M505.5 497.6v-2.8M526.5 322.6v2.8M526.5 332.4v-2.8M526.5 487.7v2.8M526.5 497.6v-2.8M536.5 322.6v2.8M536.5 332.4v-2.8M536.5 487.7v2.8M536.5 497.6v-2.8M547.5 322.6v2.8M547.5 332.4v-2.8M547.5 487.7v2.8M547.5 497.6v-2.8M557.5 322.6v2.8M557.5 332.4v-2.8M557.5 487.7v2.8M557.5 497.6v-2.8M567.5 322.6v2.8M567.5 332.4v-2.8M567.5 487.7v2.8M567.5 497.6v-2.8M588.5 322.6v2.8M588.5 332.4v-2.8M588.5 487.7v2.8M588.5 497.6v-2.8M599.5 322.6v2.8M599.5 332.4v-2.8M599.5 487.7v2.8M599.5 497.6v-2.8M609.5 322.6v2.8M609.5 332.4v-2.8M609.5 487.7v2.8M609.5 497.6v-2.8M619.5 322.6v2.8M619.5 332.4v-2.8M619.5 487.7v2.8M619.5 497.6v-2.8M630.5 322.6v2.8M630.5 332.4v-2.8M630.5 487.7v2.8M630.5 497.6v-2.8M651.5 322.6v2.8M651.5 332.4v-2.8M651.5 487.7v2.8M651.5 497.6v-2.8M661.5 322.6v2.8M661.5 332.4v-2.8M661.5 487.7v2.8M661.5 497.6v-2.8M671.5 322.6v2.8M671.5 332.4v-2.8M671.5 487.7v2.8M671.5 497.6v-2.8M682.5 322.6v2.8M682.5 332.4v-2.8M682.5 487.7v2.8M682.5 497.6v-2.8M692.5 322.6v2.8M692.5 332.4v-2.8M692.5 487.7v2.8M692.5 497.6v-2.8" stroke="#808080" stroke-width="0.9" fill="none"/><text x="79.64" y="122.50" font-size="10.6" textLength="67.16" lengthAdjust="spacing">VLF Spectra</text><text x="250.42" y="122.90" font-size="9.5" textLength="15.82" lengthAdjust="spacing">Jan.</text><text x="270.64" y="122.90" font-size="9.5" textLength="9.24" lengthAdjust="spacing">29</text><text x="281.92" y="122.90" font-size="9.5">,</text><text x="288.14" y="122.90" font-size="9.5" textLength="19.02" lengthAdjust="spacing">2026</text><text x="343.78" y="122.90" font-size="9.5" textLength="55.60" lengthAdjust="spacing">station=GAK</text><text x="437.28" y="122.90" font-size="9.5" textLength="18.38" lengthAdjust="spacing">start</text><text x="461.14" y="122.90" font-size="9.5" textLength="11.66" lengthAdjust="spacing">UT</text><text x="477.42" y="122.90" font-size="9.5">=</text><text x="492.42" y="122.90" font-size="9.5">0</text><text x="502.34" y="122.90" font-size="9.5">:</text><text x="508.20" y="122.90" font-size="9.5" textLength="10.10" lengthAdjust="spacing">10</text><text x="519.20" y="122.90" font-size="9.5">:</text><text x="523.64" y="122.90" font-size="9.5">0</text><text x="60.62" y="130.20" font-size="8.6" textLength="10.04" lengthAdjust="spacing">10</text><text x="57.00" y="160.90" font-size="8.6" textLength="13.30" lengthAdjust="spacing">-10</text><text x="65.42" y="325.50" font-size="8.6">0</text><text x="65.42" y="294.42" font-size="8.6">2</text><text x="65.42" y="263.34" font-size="8.6">4</text><text x="65.42" y="232.26" font-size="8.6">6</text><text x="65.42" y="201.18" font-size="8.6">8</text><text x="61.42" y="170.10" font-size="8.6" textLength="9.24" lengthAdjust="spacing">10</text><text x="65.42" y="490.60" font-size="8.6">0</text><text x="65.42" y="459.54" font-size="8.6">2</text><text x="65.42" y="428.48" font-size="8.6">4</text><text x="65.42" y="397.42" font-size="8.6">6</text><text x="65.42" y="366.36" font-size="8.6">8</text><text x="60.62" y="335.30" font-size="8.6" textLength="10.04" lengthAdjust="spacing">10</text><text x="66.00" y="500.60" font-size="8.6">5</text><text x="61.00" y="531.50" font-size="8.6" textLength="9.16" lengthAdjust="spacing">-5</text><text x="77.16" y="548.60" font-size="8.6">0</text><text x="139.60" y="548.60" font-size="8.6">1</text><text x="202.03" y="548.60" font-size="8.6">2</text><text x="264.07" y="548.60" font-size="8.6">3</text><text x="326.50" y="548.60" font-size="8.6">4</text><text x="388.94" y="548.60" font-size="8.6">5</text><text x="451.38" y="548.60" font-size="8.6">6</text><text x="513.81" y="548.60" font-size="8.6">7</text><text x="576.25" y="548.60" font-size="8.6">8</text><text x="638.68" y="548.60" font-size="8.6">9</text><text x="697.84" y="548.60" font-size="8.6" textLength="9.60" lengthAdjust="spacing">10</text><text x="376.36" y="557.60" font-size="9.5" textLength="47.44" lengthAdjust="spacing">Time  (min)</text><text x="734.36" y="204.20" font-size="8.0" textLength="6.58" lengthAdjust="spacing">-3</text><text x="734.36" y="231.60" font-size="8.0" textLength="6.58" lengthAdjust="spacing">-4</text><text x="734.36" y="259.00" font-size="8.0" textLength="7.38" lengthAdjust="spacing">-5</text><text x="734.36" y="286.40" font-size="8.0" textLength="6.58" lengthAdjust="spacing">-6</text><text x="734.36" y="313.80" font-size="8.0" textLength="6.58" lengthAdjust="spacing">-7</text><text x="734.36" y="369.40" font-size="8.0" textLength="6.58" lengthAdjust="spacing">-3</text><text x="734.36" y="396.80" font-size="8.0" textLength="6.58" lengthAdjust="spacing">-4</text><text x="734.36" y="424.20" font-size="8.0" textLength="7.38" lengthAdjust="spacing">-5</text><text x="734.36" y="451.60" font-size="8.0" textLength="6.58" lengthAdjust="spacing">-6</text><text x="734.36" y="479.00" font-size="8.0" textLength="6.58" lengthAdjust="spacing">-7</text><text transform="translate(50.00 158.00) rotate(-90)" font-size="9.5" textLength="31.96" lengthAdjust="spacing">ch.1(V)</text><text transform="translate(50.00 251.64) rotate(-90)" font-size="9.5" textLength="16.10" lengthAdjust="spacing">ch.1</text><text transform="translate(57.60 268.80) rotate(-90)" font-size="9.5" textLength="72.32" lengthAdjust="spacing">Frequency  (kHz)</text><text transform="translate(50.00 416.64) rotate(-90)" font-size="9.5" textLength="16.16" lengthAdjust="spacing">ch.2</text><text transform="translate(57.60 433.80) rotate(-90)" font-size="9.5" textLength="72.32" lengthAdjust="spacing">Frequency  (kHz)</text><text transform="translate(50.00 529.22) rotate(-90)" font-size="9.5" textLength="32.18" lengthAdjust="spacing">ch.3(V)</text><text transform="translate(750.40 287.44) rotate(-90)" font-size="7.2" textLength="53.60" lengthAdjust="spacing">log(PSD)(V<tspan font-size="5" dy="-2.8">2</tspan><tspan dy="2.8">/Hz)</tspan></text><text transform="translate(750.40 452.00) rotate(-90)" font-size="7.2" textLength="52.80" lengthAdjust="spacing">log(PSD)(V<tspan font-size="5" dy="-2.8">2</tspan><tspan dy="2.8">/Hz)</tspan></text><rect x="719.2" y="201.5" width="9" height="109.6" fill="url(#cb)"/><path d="M728.7 201.5V311.1M728.7 201.5h3.4M728.7 228.9h3.4M728.7 256.3h3.4M728.7 283.7h3.4M728.7 311.1h3.4" stroke="#222" stroke-width="1" fill="none"/><rect x="719.2" y="366.7" width="9" height="109.6" fill="url(#cb)"/><path d="M728.7 366.7V476.3M728.7 366.7h3.4M728.7 394.1h3.4M728.7 421.5h3.4M728.7 448.9h3.4M728.7 476.3h3.4" stroke="#222" stroke-width="1" fill="none"/></svg></body></html>
